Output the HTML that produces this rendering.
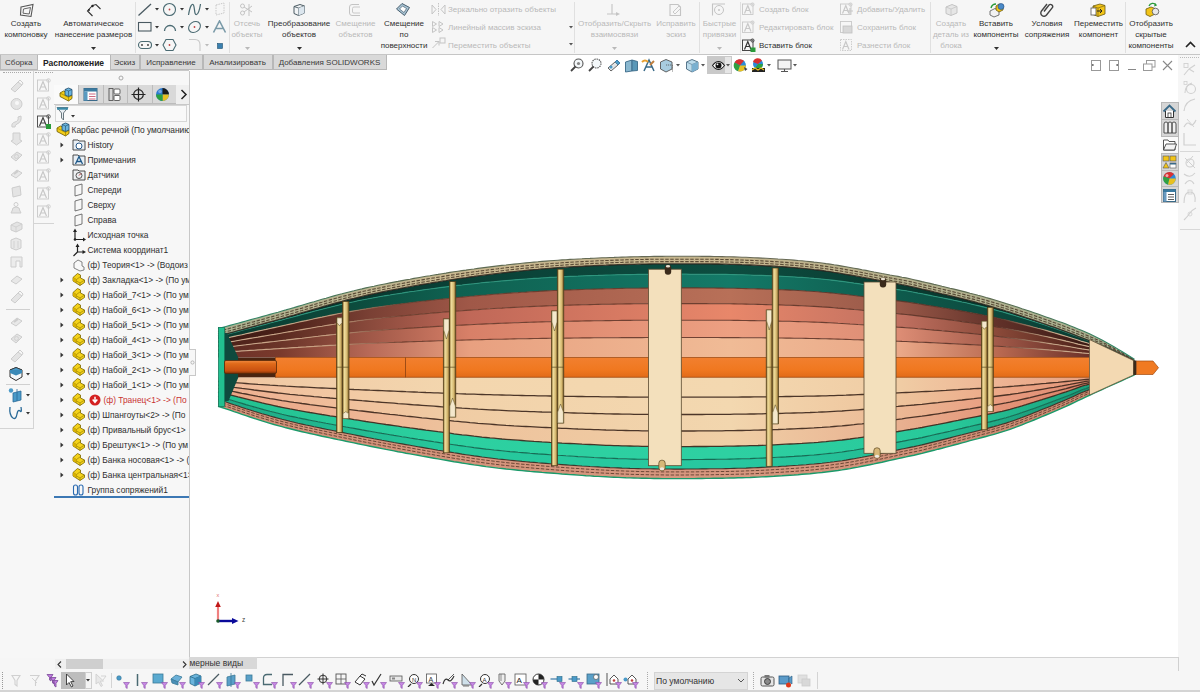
<!DOCTYPE html><html><head><meta charset="utf-8"><style>
html,body{margin:0;padding:0;width:1200px;height:692px;overflow:hidden;background:#fff;font-family:"Liberation Sans", sans-serif;}
.t{position:absolute;white-space:nowrap;line-height:12px;height:12px;}
.r{position:absolute;}
svg{position:absolute;}
</style></head><body>

<div class="r" style="left:0px;top:0px;width:1200px;height:55px;background:#f6f6f6;"></div>
<div class="r" style="left:0px;top:54px;width:1200px;height:1px;background:#c6c6c6;"></div>
<div class="r" style="left:135px;top:2px;width:1px;height:51px;background:#e0e0e0;"></div>
<div class="r" style="left:228.5px;top:2px;width:1px;height:51px;background:#e0e0e0;"></div>
<div class="r" style="left:574px;top:2px;width:1px;height:51px;background:#e0e0e0;"></div>
<div class="r" style="left:699px;top:2px;width:1px;height:51px;background:#e0e0e0;"></div>
<div class="r" style="left:739.5px;top:2px;width:1px;height:51px;background:#e0e0e0;"></div>
<div class="r" style="left:930px;top:2px;width:1px;height:51px;background:#e0e0e0;"></div>
<div class="r" style="left:1125px;top:2px;width:1px;height:51px;background:#e0e0e0;"></div>
<div class="t" style="left:-124px;top:17.5px;width:300px;text-align:center;font-size:8px;color:#303030;font-weight:normal">Создать</div>
<div class="t" style="left:-124px;top:28.5px;width:300px;text-align:center;font-size:8px;color:#303030;font-weight:normal">компоновку</div>
<div class="t" style="left:-56.5px;top:17.5px;width:300px;text-align:center;font-size:8px;color:#303030;font-weight:normal">Автоматическое</div>
<div class="t" style="left:-56.5px;top:28.5px;width:300px;text-align:center;font-size:8px;color:#303030;font-weight:normal">нанесение размеров</div>
<svg style="left:91.0px;top:46.5px" width="5" height="3"><path d="M0 0 L5 0 L2.5 3Z" fill="#303030"/></svg>
<div class="t" style="left:97px;top:17.5px;width:300px;text-align:center;font-size:8px;color:#b9b9b9;font-weight:normal">Отсечь</div>
<div class="t" style="left:97px;top:28.5px;width:300px;text-align:center;font-size:8px;color:#b9b9b9;font-weight:normal">объекты</div>
<svg style="left:244.5px;top:46.5px" width="5" height="3"><path d="M0 0 L5 0 L2.5 3Z" fill="#b9b9b9"/></svg>
<div class="t" style="left:149px;top:17.5px;width:300px;text-align:center;font-size:8px;color:#303030;font-weight:normal">Преобразование</div>
<div class="t" style="left:149px;top:28.5px;width:300px;text-align:center;font-size:8px;color:#303030;font-weight:normal">объектов</div>
<svg style="left:296.5px;top:46.5px" width="5" height="3"><path d="M0 0 L5 0 L2.5 3Z" fill="#303030"/></svg>
<div class="t" style="left:205.5px;top:17.5px;width:300px;text-align:center;font-size:8px;color:#b9b9b9;font-weight:normal">Смещение</div>
<div class="t" style="left:205.5px;top:28.5px;width:300px;text-align:center;font-size:8px;color:#b9b9b9;font-weight:normal">объектов</div>
<div class="t" style="left:254px;top:17.5px;width:300px;text-align:center;font-size:8px;color:#303030;font-weight:normal">Смещение</div>
<div class="t" style="left:254px;top:28.5px;width:300px;text-align:center;font-size:8px;color:#303030;font-weight:normal">по</div>
<div class="t" style="left:254px;top:39.5px;width:300px;text-align:center;font-size:8px;color:#303030;font-weight:normal">поверхности</div>
<div class="t" style="left:464.5px;top:17.5px;width:300px;text-align:center;font-size:8px;color:#b9b9b9;font-weight:normal">Отобразить/Скрыть</div>
<div class="t" style="left:464.5px;top:28.5px;width:300px;text-align:center;font-size:8px;color:#b9b9b9;font-weight:normal">взаимосвязи</div>
<svg style="left:612.0px;top:46.5px" width="5" height="3"><path d="M0 0 L5 0 L2.5 3Z" fill="#b9b9b9"/></svg>
<div class="t" style="left:526px;top:17.5px;width:300px;text-align:center;font-size:8px;color:#b9b9b9;font-weight:normal">Исправить</div>
<div class="t" style="left:526px;top:28.5px;width:300px;text-align:center;font-size:8px;color:#b9b9b9;font-weight:normal">эскиз</div>
<div class="t" style="left:569.5px;top:17.5px;width:300px;text-align:center;font-size:8px;color:#b9b9b9;font-weight:normal">Быстрые</div>
<div class="t" style="left:569.5px;top:28.5px;width:300px;text-align:center;font-size:8px;color:#b9b9b9;font-weight:normal">привязки</div>
<svg style="left:717.0px;top:46.5px" width="5" height="3"><path d="M0 0 L5 0 L2.5 3Z" fill="#b9b9b9"/></svg>
<div class="t" style="left:801px;top:17.5px;width:300px;text-align:center;font-size:8px;color:#b9b9b9;font-weight:normal">Создать</div>
<div class="t" style="left:801px;top:28.5px;width:300px;text-align:center;font-size:8px;color:#b9b9b9;font-weight:normal">деталь из</div>
<div class="t" style="left:801px;top:39.5px;width:300px;text-align:center;font-size:8px;color:#b9b9b9;font-weight:normal">блока</div>
<div class="t" style="left:846px;top:17.5px;width:300px;text-align:center;font-size:8px;color:#303030;font-weight:normal">Вставить</div>
<div class="t" style="left:846px;top:28.5px;width:300px;text-align:center;font-size:8px;color:#303030;font-weight:normal">компоненты</div>
<svg style="left:993.5px;top:46.5px" width="5" height="3"><path d="M0 0 L5 0 L2.5 3Z" fill="#303030"/></svg>
<div class="t" style="left:897px;top:17.5px;width:300px;text-align:center;font-size:8px;color:#303030;font-weight:normal">Условия</div>
<div class="t" style="left:897px;top:28.5px;width:300px;text-align:center;font-size:8px;color:#303030;font-weight:normal">сопряжения</div>
<div class="t" style="left:948.5px;top:17.5px;width:300px;text-align:center;font-size:8px;color:#303030;font-weight:normal">Переместить</div>
<div class="t" style="left:948.5px;top:28.5px;width:300px;text-align:center;font-size:8px;color:#303030;font-weight:normal">компонент</div>
<div class="t" style="left:1001px;top:17.5px;width:300px;text-align:center;font-size:8px;color:#303030;font-weight:normal">Отобразить</div>
<div class="t" style="left:1001px;top:28.5px;width:300px;text-align:center;font-size:8px;color:#303030;font-weight:normal">скрытые</div>
<div class="t" style="left:1001px;top:39.5px;width:300px;text-align:center;font-size:8px;color:#303030;font-weight:normal">компоненты</div>
<div class="t" style="left:448px;top:4.300000000000001px;font-size:8px;color:#b9b9b9;font-weight:normal">Зеркально отразить объекты</div>
<div class="t" style="left:448px;top:21.5px;font-size:8px;color:#b9b9b9;font-weight:normal">Линейный массив эскиза</div>
<div class="t" style="left:448px;top:40px;font-size:8px;color:#b9b9b9;font-weight:normal">Переместить объекты</div>
<div class="t" style="left:759px;top:4.300000000000001px;font-size:8px;color:#b9b9b9;font-weight:normal">Создать блок</div>
<div class="t" style="left:759px;top:21.5px;font-size:8px;color:#b9b9b9;font-weight:normal">Редактировать блок</div>
<div class="t" style="left:759px;top:40px;font-size:8px;color:#303030;font-weight:normal">Вставить блок</div>
<div class="t" style="left:857px;top:4.300000000000001px;font-size:8px;color:#b9b9b9;font-weight:normal">Добавить/Удалить</div>
<div class="t" style="left:857px;top:21.5px;font-size:8px;color:#b9b9b9;font-weight:normal">Сохранить блок</div>
<div class="t" style="left:857px;top:40px;font-size:8px;color:#b9b9b9;font-weight:normal">Разнести блок</div>
<svg style="left:19px;top:3px" width="16" height="15" viewBox="0 0 16 15"><path d="M2 4 L14 1.5 L12 13.5 L1.5 12 Z" fill="none" stroke="#555" stroke-width="1.1"/><path d="M4.5 6 L11.5 4.5 L10.2 11 L4 10.2 Z" fill="none" stroke="#555" stroke-width="0.9"/></svg>
<svg style="left:86px;top:3px" width="16" height="15" viewBox="0 0 16 15"><path d="M6.5 2.5 L1.5 8 L6.5 13" fill="none" stroke="#333" stroke-width="1.1"/><path d="M6.5 2.5 L10 1.5 L14.5 6" fill="none" stroke="#333" stroke-width="1.1"/><circle cx="6.5" cy="3" r="1.2" fill="#222"/><circle cx="3" cy="7" r="0.9" fill="#222"/></svg>
<svg style="left:137px;top:3px" width="16" height="14" viewBox="0 0 16 14"><path d="M1.5 12.5 L14 1" stroke="#4a5a62" stroke-width="1.3"/></svg>
<svg style="left:162px;top:2px" width="15" height="15" viewBox="0 0 15 15"><circle cx="7.5" cy="7.5" r="6" fill="none" stroke="#4a6a72" stroke-width="1.1"/><circle cx="7.5" cy="7.5" r="0.9" fill="#c04040"/></svg>
<svg style="left:187px;top:2px" width="15" height="15" viewBox="0 0 15 15"><path d="M1.5 13 C3 4 5 1 6.5 3 C8 6 7 13 9.5 12.5 C12 12 13 5 13.5 2" fill="none" stroke="#4a6a72" stroke-width="1.2"/></svg>
<svg style="left:214px;top:2px" width="12" height="14" viewBox="0 0 12 14"><path d="M2 3 L10 1 L10 11 L2 13 Z" fill="none" stroke="#c8c8c8" stroke-width="1" stroke-dasharray="1.5 1"/></svg>
<svg style="left:137px;top:21px" width="16" height="12" viewBox="0 0 16 12"><rect x="1.5" y="1.5" width="12.5" height="8.5" fill="none" stroke="#4a5a62" stroke-width="1.1"/></svg>
<svg style="left:163px;top:21px" width="14" height="12" viewBox="0 0 14 12"><path d="M1.5 10 A5.5 5.5 0 0 1 12.5 10" fill="none" stroke="#4a6a72" stroke-width="1.3"/></svg>
<svg style="left:187px;top:20px" width="15" height="14" viewBox="0 0 15 14"><ellipse cx="7.5" cy="7" rx="6.3" ry="5" transform="rotate(-35 7.5 7)" fill="none" stroke="#4a6a72" stroke-width="1.1"/><circle cx="7.5" cy="7" r="0.9" fill="#c04040"/></svg>
<svg style="left:212px;top:20px" width="15" height="14" viewBox="0 0 15 14"><path d="M1.5 12.5 L7.5 1 L13.5 12.5 M4.2 8.5 H10.8" fill="none" stroke="#7a9aa8" stroke-width="1.6"/></svg>
<svg style="left:137px;top:40px" width="16" height="10" viewBox="0 0 16 10"><rect x="1.5" y="1.5" width="13" height="7" rx="3.5" fill="none" stroke="#4a6a72" stroke-width="1.1"/><circle cx="5" cy="5" r="0.9" fill="#333"/><circle cx="11" cy="5" r="0.9" fill="#333"/></svg>
<svg style="left:162px;top:38px" width="15" height="14" viewBox="0 0 15 14"><path d="M4 1.5 H11 L14 7 L11 12.5 H4 L1 7 Z" fill="none" stroke="#4a6a72" stroke-width="1.1"/><circle cx="7.5" cy="7" r="0.9" fill="#c04040"/></svg>
<svg style="left:188px;top:38px" width="14" height="14" viewBox="0 0 14 14"><path d="M1 1.5 H7 Q12 1.5 12 7 V13" fill="none" stroke="#c8c8c8" stroke-width="1.1"/></svg>
<svg style="left:217px;top:42.5px" width="6" height="6" viewBox="0 0 6 6"><rect x="0.5" y="0.5" width="5" height="5" fill="#3a80b0" stroke="#1f5070" stroke-width="0.6"/></svg>
<svg style="left:155px;top:7.5px" width="4" height="3" viewBox="0 0 4 3"><path d="M0 0 H4 L2 2.5Z" fill="#333"/></svg>
<svg style="left:180px;top:7.5px" width="4" height="3" viewBox="0 0 4 3"><path d="M0 0 H4 L2 2.5Z" fill="#333"/></svg>
<svg style="left:205px;top:7.5px" width="4" height="3" viewBox="0 0 4 3"><path d="M0 0 H4 L2 2.5Z" fill="#333"/></svg>
<svg style="left:155px;top:25.5px" width="4" height="3" viewBox="0 0 4 3"><path d="M0 0 H4 L2 2.5Z" fill="#333"/></svg>
<svg style="left:180px;top:25.5px" width="4" height="3" viewBox="0 0 4 3"><path d="M0 0 H4 L2 2.5Z" fill="#333"/></svg>
<svg style="left:205px;top:25.5px" width="4" height="3" viewBox="0 0 4 3"><path d="M0 0 H4 L2 2.5Z" fill="#333"/></svg>
<svg style="left:155px;top:43.5px" width="4" height="3" viewBox="0 0 4 3"><path d="M0 0 H4 L2 2.5Z" fill="#333"/></svg>
<svg style="left:205px;top:43.5px" width="4" height="3" viewBox="0 0 4 3"><path d="M0 0 H4 L2 2.5Z" fill="#bbb"/></svg>
<svg style="left:239px;top:3px" width="16" height="14" viewBox="0 0 16 14"><circle cx="3.5" cy="3" r="2" fill="none" stroke="#c4c4c4" stroke-width="1"/><circle cx="3.5" cy="10" r="2" fill="none" stroke="#c4c4c4" stroke-width="1"/><path d="M5 4 L13 9 M5 9 L13 3 M10 1 V13" stroke="#c4c4c4" stroke-width="1"/></svg>
<svg style="left:292px;top:3px" width="14" height="14" viewBox="0 0 14 14"><path d="M2 3.5 L8 1.5 L12.5 3 L12.5 10 L6.5 12.5 L2 10.5 Z" fill="#f2f4f6" stroke="#4a5a62" stroke-width="1"/><path d="M2 3.5 L6.5 5 L12.5 3 M6.5 5 V12.5" fill="none" stroke="#4a5a62" stroke-width="0.9"/><path d="M6.5 5 L12.5 3 L12.5 10 L6.5 12.5Z" fill="#dce6ee"/></svg>
<svg style="left:348px;top:3px" width="14" height="14" viewBox="0 0 14 14"><path d="M11 1.5 H4 Q1.5 1.5 1.5 4 V10 Q1.5 12.5 4 12.5 H12" fill="none" stroke="#c4c4c4" stroke-width="1"/><path d="M12 4 H6 Q4.5 4 4.5 5.5 V9 Q4.5 10 6 10 H12" fill="none" stroke="#c4c4c4" stroke-width="0.9"/></svg>
<svg style="left:395px;top:2px" width="16" height="15" viewBox="0 0 16 15"><path d="M1.5 7 L7 1.5 L14.5 5.5 L9.5 13.5 Z" fill="#a8c4d4" stroke="#4a6070" stroke-width="1"/><path d="M4.5 7 L7.5 4 L11.5 6.5 L9 10.5 Z" fill="#ffffff" stroke="#4a6070" stroke-width="0.7"/></svg>
<svg style="left:431px;top:3px" width="15" height="13" viewBox="0 0 15 13"><path d="M1 2 L5 6.5 L1 11 Z M14 2 L10 6.5 L14 11 Z" fill="none" stroke="#c4c4c4" stroke-width="1"/><path d="M7.5 0 V13" stroke="#c4c4c4" stroke-width="1" stroke-dasharray="1.5 1"/></svg>
<svg style="left:431px;top:20px" width="14" height="14" viewBox="0 0 14 14"><path d="M1.5 1.5 L5.5 4 L1.5 6.5Z M8 1.5 L12 4 L8 6.5Z M1.5 7.5 L5.5 10 L1.5 12.5Z M8 7.5 L12 10 L8 12.5Z" fill="none" stroke="#c4c4c4" stroke-width="1"/></svg>
<svg style="left:431px;top:37px" width="15" height="13" viewBox="0 0 15 13"><path d="M1.5 11 L8 4.5 M4 4.5 H8 V8.5" fill="none" stroke="#c4c4c4" stroke-width="1"/><rect x="9" y="1" width="5" height="5" fill="none" stroke="#c4c4c4" stroke-width="1"/></svg>
<svg style="left:569px;top:25.5px" width="4" height="3" viewBox="0 0 4 3"><path d="M0 0 H4 L2 2.5Z" fill="#555"/></svg>
<svg style="left:569px;top:43.0px" width="4" height="3" viewBox="0 0 4 3"><path d="M0 0 H4 L2 2.5Z" fill="#555"/></svg>
<svg style="left:606px;top:3px" width="15" height="14" viewBox="0 0 15 14"><path d="M6 1 V11 H1 M6 11 H11" fill="none" stroke="#c4c4c4" stroke-width="1.1"/><path d="M10 9 L14 11 L10 13Z" fill="#c4c4c4"/></svg>
<svg style="left:668px;top:3px" width="15" height="14" viewBox="0 0 15 14"><path d="M2 1.5 H10 L12.5 4 V12.5 H2 Z" fill="none" stroke="#c4c4c4" stroke-width="1.1"/><path d="M5 9 L11 3 L13 5 L7 11 Z" fill="none" stroke="#c4c4c4" stroke-width="0.9"/></svg>
<svg style="left:711px;top:2px" width="15" height="15" viewBox="0 0 15 15"><path d="M1.5 13.5 V2 H14" fill="none" stroke="#c4c4c4" stroke-width="1.1"/><circle cx="8" cy="8" r="4.5" fill="none" stroke="#c4c4c4" stroke-width="1"/><circle cx="8" cy="8" r="1" fill="#c4c4c4"/></svg>
<svg style="left:741px;top:2px" width="15" height="14" viewBox="0 0 15 14"><rect x="1.5" y="2" width="10.5" height="10.5" fill="none" stroke="#c8c8c8" stroke-width="0.9"/><path d="M3.5 11.5 L6.8 3.5 L10 11.5 M4.8 8.5 H8.8" fill="none" stroke="#c8c8c8" stroke-width="1.2"/><circle cx="11.5" cy="2.5" r="1.6" fill="none" stroke="#c8c8c8" stroke-width="0.8"/></svg>
<svg style="left:741px;top:20px" width="15" height="14" viewBox="0 0 15 14"><rect x="1.5" y="2" width="10.5" height="10.5" fill="none" stroke="#c8c8c8" stroke-width="0.9"/><path d="M3.5 11.5 L6.8 3.5 L10 11.5 M4.8 8.5 H8.8" fill="none" stroke="#c8c8c8" stroke-width="1.2"/><circle cx="11.5" cy="2.5" r="1.6" fill="none" stroke="#c8c8c8" stroke-width="0.8"/></svg>
<svg style="left:741px;top:38px" width="15" height="14" viewBox="0 0 15 14"><rect x="1.5" y="2" width="10.5" height="10.5" fill="none" stroke="#333" stroke-width="0.9"/><path d="M3.5 11.5 L6.8 3.5 L10 11.5 M4.8 8.5 H8.8" fill="none" stroke="#333" stroke-width="1.2"/><circle cx="11.5" cy="2.5" r="1.6" fill="none" stroke="#333" stroke-width="0.8"/><rect x="9.5" y="9.5" width="5" height="4.5" fill="#2a9a3a"/></svg>
<svg style="left:839px;top:2px" width="15" height="14" viewBox="0 0 15 14"><rect x="1.5" y="2" width="10.5" height="10.5" fill="none" stroke="#c8c8c8" stroke-width="0.9"/><path d="M3.5 11.5 L6.8 3.5 L10 11.5 M4.8 8.5 H8.8" fill="none" stroke="#c8c8c8" stroke-width="1.2"/><circle cx="11.5" cy="2.5" r="1.6" fill="none" stroke="#c8c8c8" stroke-width="0.8"/><path d="M11 6 V12 M8 9 H14" stroke="#c8c8c8" stroke-width="1.2"/></svg>
<svg style="left:839px;top:20px" width="15" height="14" viewBox="0 0 15 14"><rect x="1.5" y="1.5" width="11" height="11" fill="none" stroke="#c8c8c8" stroke-width="0.9"/><rect x="4" y="6" width="9" height="7" fill="#d8d8d8" stroke="#c0c0c0" stroke-width="0.8"/></svg>
<svg style="left:839px;top:38px" width="15" height="14" viewBox="0 0 15 14"><rect x="1.5" y="1.5" width="11" height="11" fill="none" stroke="#c8c8c8" stroke-width="0.9" stroke-dasharray="1.5 1"/><path d="M3.5 11.5 L6.8 3.5 L10 11.5 M4.8 8.5 H8.8" fill="none" stroke="#c8c8c8" stroke-width="1.2"/></svg>
<svg style="left:944px;top:3px" width="15" height="14" viewBox="0 0 15 14"><path d="M2 4 L8 1.5 L13 3.5 V10 L7 12.5 L2 10.5 Z" fill="#e6e6e6" stroke="#c4c4c4" stroke-width="1"/><path d="M2 4 L7 6 L13 3.5 M7 6 V12.5" fill="none" stroke="#c4c4c4" stroke-width="0.8"/></svg>
<svg style="left:989px;top:2px" width="17" height="16" viewBox="0 0 17 16"><path d="M1 9 L6 6.5 L10 8 V13 L5 15 L1 13 Z" fill="#f2f2f2" stroke="#555" stroke-width="0.8"/><path d="M7 4 L10 2 L14 3 V8 L10 10 L7 8 Z" fill="#f2c418" stroke="#6b5a10" stroke-width="0.8"/><circle cx="12" cy="4.5" r="3" fill="#4a8ac8" stroke="#1f4a80" stroke-width="0.6"/><path d="M2 6 Q3 2 7 2" fill="none" stroke="#2a9a3a" stroke-width="1.4"/></svg>
<svg style="left:1040px;top:2px" width="15" height="15" viewBox="0 0 15 15"><path d="M4 9.5 L9 3 A2.2 2.2 0 0 1 12.5 5.5 L6.5 13 A3.2 3.2 0 0 1 1.5 9 L7 2" fill="none" stroke="#444" stroke-width="1.4"/></svg>
<svg style="left:1090px;top:2px" width="17" height="16" viewBox="0 0 17 16"><path d="M3 4 L10 2 L15 3.5 V12 L8 14.5 L3 12.5 Z" fill="#f2c418" stroke="#6b5a10" stroke-width="0.8"/><path d="M3 4 L8 6 L15 3.5 M8 6 V14.5" fill="none" stroke="#6b5a10" stroke-width="0.6"/><rect x="1" y="6" width="5" height="7" fill="#fff" stroke="#555" stroke-width="0.8"/><path d="M7 9 H12 M10 7 L12 9 L10 11" stroke="#222" stroke-width="1" fill="none"/></svg>
<svg style="left:1144px;top:2px" width="16" height="16" viewBox="0 0 16 16"><path d="M2 7 L7 5 L11 6.5 V12 L6 14.5 L2 12.5 Z" fill="#f2c418" stroke="#6b5a10" stroke-width="0.8"/><circle cx="11.5" cy="9.5" r="3.3" fill="#e8e8e8" stroke="#555" stroke-width="0.8"/><path d="M5 4 A4 4 0 0 1 12 3" fill="none" stroke="#2a9a3a" stroke-width="1.3"/><path d="M11 1 L13 3.5 L10 4.5Z" fill="#2a9a3a"/></svg>
<svg style="left:1185px;top:41px" width="11" height="7" viewBox="0 0 11 7"><path d="M1 6 L5.5 1.5 L10 6" fill="none" stroke="#222" stroke-width="1.6"/></svg>
<div class="r" style="left:0px;top:55px;width:37.5px;height:15px;background:#d9d9d9;"></div>
<div class="r" style="left:0px;top:55px;width:1px;height:15px;background:#b8b8b8;"></div>
<div class="r" style="left:36.5px;top:55px;width:1px;height:15px;background:#b8b8b8;"></div>
<div class="r" style="left:0px;top:69px;width:37.5px;height:1px;background:#b8b8b8;"></div>
<div class="t" style="left:-131.25px;top:57px;width:300px;text-align:center;font-size:8px;color:#3a3a3a;font-weight:normal">Сборка</div>
<div class="r" style="left:37.5px;top:55px;width:72.0px;height:16px;background:#ffffff;"></div>
<div class="t" style="left:-76.5px;top:57px;width:300px;text-align:center;font-size:8.5px;color:#222;font-weight:bold">Расположение</div>
<div class="r" style="left:109.5px;top:55px;width:30.0px;height:15px;background:#d9d9d9;"></div>
<div class="r" style="left:109.5px;top:55px;width:1px;height:15px;background:#b8b8b8;"></div>
<div class="r" style="left:138.5px;top:55px;width:1px;height:15px;background:#b8b8b8;"></div>
<div class="r" style="left:109.5px;top:69px;width:30.0px;height:1px;background:#b8b8b8;"></div>
<div class="t" style="left:-25.5px;top:57px;width:300px;text-align:center;font-size:8px;color:#3a3a3a;font-weight:normal">Эскиз</div>
<div class="r" style="left:139.5px;top:55px;width:63.0px;height:15px;background:#d9d9d9;"></div>
<div class="r" style="left:139.5px;top:55px;width:1px;height:15px;background:#b8b8b8;"></div>
<div class="r" style="left:201.5px;top:55px;width:1px;height:15px;background:#b8b8b8;"></div>
<div class="r" style="left:139.5px;top:69px;width:63.0px;height:1px;background:#b8b8b8;"></div>
<div class="t" style="left:21.0px;top:57px;width:300px;text-align:center;font-size:8px;color:#3a3a3a;font-weight:normal">Исправление</div>
<div class="r" style="left:202.5px;top:55px;width:70.0px;height:15px;background:#d9d9d9;"></div>
<div class="r" style="left:202.5px;top:55px;width:1px;height:15px;background:#b8b8b8;"></div>
<div class="r" style="left:271.5px;top:55px;width:1px;height:15px;background:#b8b8b8;"></div>
<div class="r" style="left:202.5px;top:69px;width:70.0px;height:1px;background:#b8b8b8;"></div>
<div class="t" style="left:87.5px;top:57px;width:300px;text-align:center;font-size:8px;color:#3a3a3a;font-weight:normal">Анализировать</div>
<div class="r" style="left:272.5px;top:55px;width:114.0px;height:15px;background:#d9d9d9;"></div>
<div class="r" style="left:272.5px;top:55px;width:1px;height:15px;background:#b8b8b8;"></div>
<div class="r" style="left:385.5px;top:55px;width:1px;height:15px;background:#b8b8b8;"></div>
<div class="r" style="left:272.5px;top:69px;width:114.0px;height:1px;background:#b8b8b8;"></div>
<div class="t" style="left:179.5px;top:57px;width:300px;text-align:center;font-size:8px;color:#3a3a3a;font-weight:normal">Добавления SOLIDWORKS</div>
<div class="r" style="left:0px;top:71px;width:189px;height:588px;background:#f7f7f7;"></div>
<div class="r" style="left:0px;top:70px;width:189px;height:1px;background:#c8c8c8;"></div>
<div class="r" style="left:33px;top:71px;width:1px;height:357px;background:#d4d4d4;"></div>
<div class="r" style="left:0px;top:428px;width:34px;height:1px;background:#d4d4d4;"></div>
<div class="r" style="left:34px;top:223px;width:20px;height:1px;background:#d4d4d4;"></div>
<div class="r" style="left:189px;top:71px;width:1px;height:587px;background:#c8c8c8;"></div>
<div class="r" style="left:190px;top:657px;width:989px;height:1.5px;background:#d2d2d2;"></div>
<div class="r" style="left:1178px;top:55px;width:22px;height:603px;background:#f6f6f6;"></div>
<div class="r" style="left:0px;top:658px;width:1200px;height:34px;background:#f6f6f6;"></div>
<div class="r" style="left:1178px;top:657px;width:1px;height:14px;background:#d0d0d0;"></div>
<div class="r" style="left:0px;top:690px;width:1200px;height:2px;background:#d4d4d4;"></div>
<div class="r" style="left:54px;top:85px;width:135px;height:19px;background:#efefef;"></div>
<div class="r" style="left:54px;top:85px;width:24px;height:19px;background:#fafafa;"></div>
<div class="r" style="left:78px;top:85px;width:24.5px;height:19px;background:#d9d9d9;box-sizing:border-box;border-left:1px solid #bcbcbc;border-bottom:1px solid #bcbcbc;"></div>
<div class="r" style="left:102.5px;top:85px;width:24.0px;height:19px;background:#d9d9d9;box-sizing:border-box;border-left:1px solid #bcbcbc;border-bottom:1px solid #bcbcbc;"></div>
<div class="r" style="left:126.5px;top:85px;width:25.0px;height:19px;background:#d9d9d9;box-sizing:border-box;border-left:1px solid #bcbcbc;border-bottom:1px solid #bcbcbc;"></div>
<div class="r" style="left:151.5px;top:85px;width:24.0px;height:19px;background:#d9d9d9;box-sizing:border-box;border-left:1px solid #bcbcbc;border-bottom:1px solid #bcbcbc;"></div>
<div class="r" style="left:54px;top:103.5px;width:135px;height:1px;background:#c8c8c8;"></div>
<div class="r" style="left:55.25px;top:104.5px;width:132px;height:17px;background:#f9f9f9;box-sizing:border-box;border:1px solid #d6d6d6;"></div>
<svg style="left:59px;top:87px" width="15" height="15" viewBox="0 0 15 15"><path d="M1 6 L4.5 4 L13 8 L13 11.5 L9.5 14 L1 9.5 Z" fill="#f2cc18" stroke="#6a5800" stroke-width="0.8" stroke-linejoin="round"/><path d="M1 6 L9.5 10.5 L13 8 M9.5 10.5 V14" fill="none" stroke="#8a7400" stroke-width="0.6"/><path d="M6 2.5 L9.5 1 L13 2.5 V8 L9.5 9.5 L6 8 Z" fill="#6ab4dc" stroke="#1f4a6a" stroke-width="0.8"/><path d="M6 2.5 L9.5 4 L13 2.5 M9.5 4 V9.5" fill="none" stroke="#1f4a6a" stroke-width="0.6"/></svg>
<svg style="left:83px;top:87px" width="15" height="15" viewBox="0 0 15 15"><rect x="1" y="1.5" width="13" height="12" fill="#fff" stroke="#3a6a8a" stroke-width="1"/><rect x="1" y="1.5" width="13" height="3" fill="#3a7aa0"/><rect x="1" y="4.5" width="3.5" height="9" fill="#5a9ac0"/><path d="M6 7 H12.5 M6 9.5 H12.5 M6 12 H12.5" stroke="#c04060" stroke-width="0.8"/></svg>
<svg style="left:107px;top:87px" width="15" height="15" viewBox="0 0 15 15"><rect x="2" y="1.5" width="4" height="12" fill="#d8d8d8" stroke="#555" stroke-width="0.9"/><rect x="7" y="2" width="6" height="5" rx="1" fill="#fff" stroke="#555" stroke-width="0.9"/><rect x="7" y="8.5" width="6" height="5" rx="1" fill="#fff" stroke="#555" stroke-width="0.9"/></svg>
<svg style="left:131px;top:87px" width="15" height="15" viewBox="0 0 15 15"><circle cx="7.5" cy="7.5" r="4.8" fill="none" stroke="#222" stroke-width="1.2"/><path d="M7.5 0.5 V14.5 M0.5 7.5 H14.5" stroke="#222" stroke-width="1.2"/></svg>
<svg style="left:155px;top:87px" width="15" height="15" viewBox="0 0 15 15"><circle cx="7.5" cy="7.5" r="6.5" fill="#2a7ad0"/><path d="M7.5 7.5 L7.5 1 A6.5 6.5 0 0 1 14 7.5Z" fill="#1a1a1a"/><path d="M7.5 7.5 L14 7.5 A6.5 6.5 0 0 1 7.5 14Z" fill="#e8c020"/><path d="M7.5 7.5 L7.5 14 A6.5 6.5 0 0 1 1 7.5Z" fill="#2aa040"/><circle cx="5" cy="4.5" r="1.8" fill="#fff" opacity="0.35"/></svg>
<svg style="left:180px;top:89px" width="8" height="11" viewBox="0 0 8 11"><path d="M1.5 1 L6 5.5 L1.5 10" fill="none" stroke="#222" stroke-width="1.5"/></svg>
<svg style="left:56px;top:106px" width="20" height="15" viewBox="0 0 20 15"><path d="M1 1.5 H12 L7.5 7 V14 L5.5 12 V7 Z" fill="#e8eef2" stroke="#5a6a72" stroke-width="0.9"/><rect x="1" y="1.5" width="11" height="2.2" fill="#3a8aa8"/><path d="M15 9 H19 L17 11.5Z" fill="#333"/></svg>
<svg style="left:118px;top:75px" width="6" height="6" viewBox="0 0 6 6"><circle cx="3" cy="3" r="2" fill="none" stroke="#aaa" stroke-width="1"/></svg>
<div class="r" style="left:3px;top:72px;width:28px;height:1px;border-top:1px dotted #aaa"></div>
<div class="r" style="left:35px;top:72px;width:18px;height:1px;border-top:1px dotted #aaa"></div>
<svg style="left:9px;top:78.5px" width="15" height="15" viewBox="0 0 15 15"><path d="M2 10 L9 3 L13 6 L6 13 Z" fill="#e4e4e4" stroke="#cdcdcd" stroke-width="1"/><path d="M9 3 L11 1 L14 4 L13 6" fill="none" stroke="#cdcdcd" stroke-width="1"/></svg>
<svg style="left:9px;top:96.0px" width="15" height="15" viewBox="0 0 15 15"><circle cx="7.5" cy="8" r="5.5" fill="#e4e4e4" stroke="#cdcdcd" stroke-width="1"/><circle cx="8" cy="7" r="2" fill="#f8f8f8"/></svg>
<svg style="left:9px;top:113.5px" width="15" height="15" viewBox="0 0 15 15"><path d="M3 13 Q2 9 6 8 Q10 7 9 3 L12 2 Q13 8 8 10 Q6 11 6 13 Z" fill="#e4e4e4" stroke="#cdcdcd" stroke-width="1"/></svg>
<svg style="left:9px;top:131.0px" width="15" height="15" viewBox="0 0 15 15"><path d="M4 2 H11 V9 L13 10 L7.5 14 L2 10 L4 9 Z" fill="#e4e4e4" stroke="#cdcdcd" stroke-width="1"/></svg>
<svg style="left:9px;top:148.5px" width="15" height="15" viewBox="0 0 15 15"><path d="M2 8 L8 3 L13 6 L7 12 Z" fill="#e4e4e4" stroke="#cdcdcd" stroke-width="1"/><circle cx="7.5" cy="7.5" r="2" fill="none" stroke="#cdcdcd" stroke-width="0.8"/></svg>
<svg style="left:9px;top:166.0px" width="15" height="15" viewBox="0 0 15 15"><path d="M2 9 L8 4 L13 7 L7 12 Z" fill="#e8e8e8" stroke="#cdcdcd" stroke-width="1"/><path d="M5 8 L9 5" stroke="#cdcdcd" stroke-width="2"/></svg>
<svg style="left:9px;top:183.5px" width="15" height="15" viewBox="0 0 15 15"><path d="M3 4 L11 2 L12 11 L4 13 Z" fill="#e4e4e4" stroke="#cdcdcd" stroke-width="1"/></svg>
<svg style="left:9px;top:201.0px" width="15" height="15" viewBox="0 0 15 15"><path d="M3 10 Q3 6 7 6 Q11 6 11 10 L12 12 H2 Z" fill="#e4e4e4" stroke="#cdcdcd" stroke-width="1"/><circle cx="7" cy="3.5" r="2" fill="none" stroke="#cdcdcd" stroke-width="1"/></svg>
<svg style="left:9px;top:218.5px" width="15" height="15" viewBox="0 0 15 15"><path d="M2 6 L8 3 L13 5 V10 L7 13 L2 11 Z" fill="#e4e4e4" stroke="#cdcdcd" stroke-width="1"/><path d="M2 6 L7 8 L13 5 M7 8 V13" fill="none" stroke="#cdcdcd" stroke-width="0.8"/></svg>
<svg style="left:9px;top:236.0px" width="15" height="15" viewBox="0 0 15 15"><path d="M2 4 L7 2 L12 4 L12 12 L7 14 L2 12 Z" fill="#e8e8e8" stroke="#cdcdcd" stroke-width="1"/><path d="M5 5 V12 M9 5 V12" stroke="#cdcdcd" stroke-width="0.8"/></svg>
<svg style="left:9px;top:253.5px" width="15" height="15" viewBox="0 0 15 15"><path d="M2 3 V13 H7 V7 H11 V13 H13 V3 Z" fill="#ececec" stroke="#cdcdcd" stroke-width="1"/></svg>
<svg style="left:9px;top:271.5px" width="15" height="15" viewBox="0 0 15 15"><path d="M2 9 L8 4 L13 7 L7 12 Z" fill="#e8e8e8" stroke="#cdcdcd" stroke-width="1"/></svg>
<svg style="left:9px;top:289.5px" width="15" height="15" viewBox="0 0 15 15"><path d="M2 10 L9 3 L13 6 L6 13 Z" fill="#e4e4e4" stroke="#cdcdcd" stroke-width="1"/><path d="M9 3 L11 1 L14 4 L13 6" fill="none" stroke="#cdcdcd" stroke-width="1"/></svg>
<div class="r" style="left:6px;top:309px;width:24px;height:1px;background:#d0d0d0;"></div>
<svg style="left:9px;top:313.5px" width="15" height="15" viewBox="0 0 15 15"><path d="M2 9 L8 4 L13 7 L7 12 Z" fill="#e8e8e8" stroke="#cdcdcd" stroke-width="1"/><path d="M5 8 L9 5" stroke="#cdcdcd" stroke-width="2"/></svg>
<svg style="left:9px;top:331.0px" width="15" height="15" viewBox="0 0 15 15"><path d="M2 8 L8 3 L13 6 L7 12 Z" fill="#e4e4e4" stroke="#cdcdcd" stroke-width="1"/><circle cx="7.5" cy="7.5" r="2" fill="none" stroke="#cdcdcd" stroke-width="0.8"/></svg>
<svg style="left:9px;top:348.5px" width="15" height="15" viewBox="0 0 15 15"><path d="M2 10 L9 3 L13 6 L6 13 Z" fill="#e4e4e4" stroke="#cdcdcd" stroke-width="1"/><path d="M9 3 L11 1 L14 4 L13 6" fill="none" stroke="#cdcdcd" stroke-width="1"/></svg>
<svg style="left:8px;top:366px" width="16" height="16" viewBox="0 0 16 16"><path d="M2 4 L8 1.5 L14 4 V11 L8 14.5 L2 11 Z" fill="#f4f8fa" stroke="#333" stroke-width="1"/><path d="M2 4 L8 6.5 L14 4 L8 1.5Z" fill="#4a9ac8" stroke="#333" stroke-width="0.8"/><path d="M2 4 V7 L8 9.5 L14 7 V4" fill="#3a8ab8"/></svg>
<svg style="left:26px;top:372.5px" width="4" height="3" viewBox="0 0 4 3"><path d="M0 0 H4 L2 2.5Z" fill="#333"/></svg>
<div class="r" style="left:6px;top:384px;width:24px;height:1px;background:#d0d0d0;"></div>
<svg style="left:8px;top:387px" width="16" height="16" viewBox="0 0 16 16"><circle cx="3" cy="3.5" r="2.2" fill="#4a9ac8"/><path d="M5 6 L13 4 V13 L5 15 Z" fill="#4a9ac8" stroke="#2a6a98" stroke-width="0.8"/><path d="M9 2 V14" stroke="#2a6a98" stroke-width="0.8"/></svg>
<svg style="left:26px;top:393.5px" width="4" height="3" viewBox="0 0 4 3"><path d="M0 0 H4 L2 2.5Z" fill="#333"/></svg>
<svg style="left:8px;top:405px" width="16" height="16" viewBox="0 0 16 16"><path d="M2 2 Q1 10 5 13 Q8 15 9 9 Q10 4 12 6 Q14 8 13 2" fill="none" stroke="#2a6a98" stroke-width="1.3"/></svg>
<svg style="left:26px;top:411.5px" width="4" height="3" viewBox="0 0 4 3"><path d="M0 0 H4 L2 2.5Z" fill="#333"/></svg>
<svg style="left:36px;top:77.5px" width="16" height="16" viewBox="0 0 16 16"><rect x="1.5" y="2" width="11" height="11" fill="none" stroke="#c8c8c8" stroke-width="0.9"/><path d="M3.5 12 L7 3.5 L10.5 12 M4.8 9 H9.2" fill="none" stroke="#c8c8c8" stroke-width="1.2"/><circle cx="12.5" cy="2.5" r="1.8" fill="none" stroke="#c8c8c8" stroke-width="0.8"/></svg>
<svg style="left:36px;top:95.5px" width="16" height="16" viewBox="0 0 16 16"><rect x="1.5" y="2" width="11" height="11" fill="none" stroke="#c8c8c8" stroke-width="0.9"/><path d="M3.5 12 L7 3.5 L10.5 12 M4.8 9 H9.2" fill="none" stroke="#c8c8c8" stroke-width="1.2"/><circle cx="12.5" cy="2.5" r="1.8" fill="none" stroke="#c8c8c8" stroke-width="0.8"/></svg>
<svg style="left:36px;top:113.5px" width="16" height="16" viewBox="0 0 16 16"><rect x="1.5" y="2" width="11" height="11" fill="#fafafa" stroke="#444" stroke-width="0.9"/><path d="M3.5 12 L7 3.5 L10.5 12 M4.8 9 H9.2" fill="none" stroke="#444" stroke-width="1.2"/><circle cx="12.5" cy="2.5" r="1.8" fill="none" stroke="#444" stroke-width="0.8"/><rect x="10" y="10" width="5" height="5" fill="#2a9a3a"/></svg>
<svg style="left:36px;top:132.0px" width="16" height="16" viewBox="0 0 16 16"><rect x="1.5" y="2" width="11" height="11" fill="none" stroke="#c8c8c8" stroke-width="0.9"/><path d="M3.5 12 L7 3.5 L10.5 12 M4.8 9 H9.2" fill="none" stroke="#c8c8c8" stroke-width="1.2"/><circle cx="12.5" cy="2.5" r="1.8" fill="none" stroke="#c8c8c8" stroke-width="0.8"/></svg>
<svg style="left:36px;top:150.0px" width="16" height="16" viewBox="0 0 16 16"><rect x="1.5" y="2" width="11" height="11" fill="none" stroke="#c8c8c8" stroke-width="0.9"/><path d="M3.5 12 L7 3.5 L10.5 12 M4.8 9 H9.2" fill="none" stroke="#c8c8c8" stroke-width="1.2"/><circle cx="12.5" cy="2.5" r="1.8" fill="none" stroke="#c8c8c8" stroke-width="0.8"/></svg>
<svg style="left:36px;top:168.0px" width="16" height="16" viewBox="0 0 16 16"><rect x="1.5" y="2" width="11" height="11" fill="none" stroke="#c8c8c8" stroke-width="0.9"/><path d="M3.5 12 L7 3.5 L10.5 12 M4.8 9 H9.2" fill="none" stroke="#c8c8c8" stroke-width="1.2"/><circle cx="12.5" cy="2.5" r="1.8" fill="none" stroke="#c8c8c8" stroke-width="0.8"/></svg>
<svg style="left:36px;top:186.0px" width="16" height="16" viewBox="0 0 16 16"><rect x="1.5" y="2" width="11" height="11" fill="none" stroke="#c8c8c8" stroke-width="0.9"/><path d="M3.5 12 L7 3.5 L10.5 12 M4.8 9 H9.2" fill="none" stroke="#c8c8c8" stroke-width="1.2"/><circle cx="12.5" cy="2.5" r="1.8" fill="none" stroke="#c8c8c8" stroke-width="0.8"/></svg>
<svg style="left:36px;top:204.0px" width="16" height="16" viewBox="0 0 16 16"><rect x="1.5" y="2" width="11" height="11" fill="none" stroke="#c8c8c8" stroke-width="0.9"/><path d="M3.5 12 L7 3.5 L10.5 12 M4.8 9 H9.2" fill="none" stroke="#c8c8c8" stroke-width="1.2"/><circle cx="12.5" cy="2.5" r="1.8" fill="none" stroke="#c8c8c8" stroke-width="0.8"/></svg>
<div style="position:absolute;left:0;top:0;width:189px;height:657px;overflow:hidden">
<svg style="left:56px;top:122.0px" width="15" height="15" viewBox="0 0 15 15"><path d="M1 6 L4.5 4 L13 8 L13 11.5 L9.5 14 L1 9.5 Z" fill="#f2cc18" stroke="#6a5800" stroke-width="0.8" stroke-linejoin="round"/><path d="M1 6 L9.5 10.5 L13 8 M9.5 10.5 V14" fill="none" stroke="#8a7400" stroke-width="0.6"/><path d="M6 2.5 L9.5 1 L13 2.5 V8 L9.5 9.5 L6 8 Z" fill="#6ab4dc" stroke="#1f4a6a" stroke-width="0.8"/><path d="M6 2.5 L9.5 4 L13 2.5 M9.5 4 V9.5" fill="none" stroke="#1f4a6a" stroke-width="0.6"/></svg>
<div class="t" style="left:71.5px;top:123.5px;font-size:8.4px;color:#2e2e2e;font-weight:normal">Карбас речной (По умолчанию</div>
<svg style="left:59.5px;top:141.5px" width="4" height="6"><path d="M0.5 0.5 L3.5 3 L0.5 5.5Z" fill="#333"/></svg>
<svg style="left:72px;top:138.0px" width="14" height="13" viewBox="0 0 14 13"><path d="M1 2 H6 L7 3 H13 V12 H1 Z" fill="#e8eef4" stroke="#3b3b3b" stroke-width="0.9"/><circle cx="7" cy="8" r="3" fill="#fff" stroke="#2a5a8a" stroke-width="1"/></svg>
<div class="t" style="left:87.5px;top:138.5px;font-size:8.4px;color:#2e2e2e;font-weight:normal">History</div>
<svg style="left:59.5px;top:156.5px" width="4" height="6"><path d="M0.5 0.5 L3.5 3 L0.5 5.5Z" fill="#333"/></svg>
<svg style="left:72px;top:153.0px" width="14" height="13" viewBox="0 0 14 13"><path d="M1 2 H6 L7 3 H13 V12 H1 Z" fill="#e8eef4" stroke="#3b3b3b" stroke-width="0.9"/><path d="M3.5 11 L7 3.5 L10.5 11 M5 8.5 H9" stroke="#1f5a8a" stroke-width="1.3" fill="none"/></svg>
<div class="t" style="left:87.5px;top:153.5px;font-size:8.4px;color:#2e2e2e;font-weight:normal">Примечания</div>
<svg style="left:72px;top:168.0px" width="14" height="13" viewBox="0 0 14 13"><path d="M1 2 H6 L7 3 H13 V12 H1 Z" fill="#eef0f2" stroke="#3b3b3b" stroke-width="0.9"/><circle cx="7" cy="7.5" r="3" fill="none" stroke="#555" stroke-width="1"/><path d="M7 7.5 L9 5.5" stroke="#c03030" stroke-width="1"/></svg>
<div class="t" style="left:87.5px;top:168.5px;font-size:8.4px;color:#2e2e2e;font-weight:normal">Датчики</div>
<svg style="left:72px;top:182.5px" width="14" height="14" viewBox="0 0 14 14"><path d="M3 3 L10 1 L10 11 L3 13 Z" fill="none" stroke="#555" stroke-width="0.8"/></svg>
<div class="t" style="left:87.5px;top:183.5px;font-size:8.4px;color:#2e2e2e;font-weight:normal">Спереди</div>
<svg style="left:72px;top:197.5px" width="14" height="14" viewBox="0 0 14 14"><path d="M3 3 L10 1 L10 11 L3 13 Z" fill="none" stroke="#555" stroke-width="0.8"/></svg>
<div class="t" style="left:87.5px;top:198.5px;font-size:8.4px;color:#2e2e2e;font-weight:normal">Сверху</div>
<svg style="left:72px;top:212.5px" width="14" height="14" viewBox="0 0 14 14"><path d="M3 3 L10 1 L10 11 L3 13 Z" fill="none" stroke="#555" stroke-width="0.8"/></svg>
<div class="t" style="left:87.5px;top:213.5px;font-size:8.4px;color:#2e2e2e;font-weight:normal">Справа</div>
<svg style="left:72px;top:227.5px" width="14" height="14" viewBox="0 0 14 14"><path d="M3 3 V11.5 H12" fill="none" stroke="#222" stroke-width="1.2"/><path d="M1 4 L3 0.5 L5 4Z M11 9.5 L14 11.5 L11 13.5Z" fill="#222"/><circle cx="3" cy="11.5" r="1.3" fill="#222"/></svg>
<div class="t" style="left:87.5px;top:228.5px;font-size:8.4px;color:#2e2e2e;font-weight:normal">Исходная точка</div>
<svg style="left:72px;top:242.5px" width="14" height="14" viewBox="0 0 14 14"><path d="M5.5 3 V9 H11.5 M5.5 9 L1.5 13" fill="none" stroke="#222" stroke-width="1.2"/><path d="M3.5 4 L5.5 0.5 L7.5 4Z M10.5 7 L14 9 L10.5 11Z" fill="#222"/></svg>
<div class="t" style="left:87.5px;top:243.5px;font-size:8.4px;color:#2e2e2e;font-weight:normal">Система координат1</div>
<svg style="left:72px;top:257.5px" width="14" height="14" viewBox="0 0 14 14"><path d="M2 5 L6 2 L10 4 L10 8 L12 9 L12 12 L8 13 L2 10 Z" fill="#f8f8f8" stroke="#666" stroke-width="0.8"/></svg>
<div class="t" style="left:87.5px;top:258.5px;font-size:8.4px;color:#2e2e2e;font-weight:normal">(ф) Теория&lt;1&gt; -&gt; (Водоиз</div>
<svg style="left:59.5px;top:276.5px" width="4" height="6"><path d="M0.5 0.5 L3.5 3 L0.5 5.5Z" fill="#333"/></svg>
<svg style="left:71.5px;top:272.0px" width="14" height="14" viewBox="0 0 14 14"><path d="M1 5.5 L5.5 1.5 L8.5 3 L8.5 6 L12.5 8 L12.5 10.5 L8 13.5 L1 9 Z" fill="#f4d21a" stroke="#7a6400" stroke-width="0.8" stroke-linejoin="round"/><path d="M1 5.5 L4.5 7.5 L8.5 4.5 M4.5 7.5 V10.5 M4.5 9 L8 11 L12.5 8 M8 11 V13.5" fill="none" stroke="#8a7400" stroke-width="0.6"/><path d="M1 5.5 L4.5 7.5 V10.8 L1 9Z" fill="#d8b000"/></svg>
<div class="t" style="left:87.5px;top:273.5px;font-size:8.4px;color:#2e2e2e;font-weight:normal">(ф) Закладка&lt;1&gt; -&gt; (По ум</div>
<svg style="left:59.5px;top:291.5px" width="4" height="6"><path d="M0.5 0.5 L3.5 3 L0.5 5.5Z" fill="#333"/></svg>
<svg style="left:71.5px;top:287.0px" width="14" height="14" viewBox="0 0 14 14"><path d="M1 5.5 L5.5 1.5 L8.5 3 L8.5 6 L12.5 8 L12.5 10.5 L8 13.5 L1 9 Z" fill="#f4d21a" stroke="#7a6400" stroke-width="0.8" stroke-linejoin="round"/><path d="M1 5.5 L4.5 7.5 L8.5 4.5 M4.5 7.5 V10.5 M4.5 9 L8 11 L12.5 8 M8 11 V13.5" fill="none" stroke="#8a7400" stroke-width="0.6"/><path d="M1 5.5 L4.5 7.5 V10.8 L1 9Z" fill="#d8b000"/></svg>
<div class="t" style="left:87.5px;top:288.5px;font-size:8.4px;color:#2e2e2e;font-weight:normal">(ф) Набой_7&lt;1&gt; -&gt; (По ум</div>
<svg style="left:59.5px;top:306.5px" width="4" height="6"><path d="M0.5 0.5 L3.5 3 L0.5 5.5Z" fill="#333"/></svg>
<svg style="left:71.5px;top:302.0px" width="14" height="14" viewBox="0 0 14 14"><path d="M1 5.5 L5.5 1.5 L8.5 3 L8.5 6 L12.5 8 L12.5 10.5 L8 13.5 L1 9 Z" fill="#f4d21a" stroke="#7a6400" stroke-width="0.8" stroke-linejoin="round"/><path d="M1 5.5 L4.5 7.5 L8.5 4.5 M4.5 7.5 V10.5 M4.5 9 L8 11 L12.5 8 M8 11 V13.5" fill="none" stroke="#8a7400" stroke-width="0.6"/><path d="M1 5.5 L4.5 7.5 V10.8 L1 9Z" fill="#d8b000"/></svg>
<div class="t" style="left:87.5px;top:303.5px;font-size:8.4px;color:#2e2e2e;font-weight:normal">(ф) Набой_6&lt;1&gt; -&gt; (По ум</div>
<svg style="left:59.5px;top:321.5px" width="4" height="6"><path d="M0.5 0.5 L3.5 3 L0.5 5.5Z" fill="#333"/></svg>
<svg style="left:71.5px;top:317.0px" width="14" height="14" viewBox="0 0 14 14"><path d="M1 5.5 L5.5 1.5 L8.5 3 L8.5 6 L12.5 8 L12.5 10.5 L8 13.5 L1 9 Z" fill="#f4d21a" stroke="#7a6400" stroke-width="0.8" stroke-linejoin="round"/><path d="M1 5.5 L4.5 7.5 L8.5 4.5 M4.5 7.5 V10.5 M4.5 9 L8 11 L12.5 8 M8 11 V13.5" fill="none" stroke="#8a7400" stroke-width="0.6"/><path d="M1 5.5 L4.5 7.5 V10.8 L1 9Z" fill="#d8b000"/></svg>
<div class="t" style="left:87.5px;top:318.5px;font-size:8.4px;color:#2e2e2e;font-weight:normal">(ф) Набой_5&lt;1&gt; -&gt; (По ум</div>
<svg style="left:59.5px;top:336.5px" width="4" height="6"><path d="M0.5 0.5 L3.5 3 L0.5 5.5Z" fill="#333"/></svg>
<svg style="left:71.5px;top:332.0px" width="14" height="14" viewBox="0 0 14 14"><path d="M1 5.5 L5.5 1.5 L8.5 3 L8.5 6 L12.5 8 L12.5 10.5 L8 13.5 L1 9 Z" fill="#f4d21a" stroke="#7a6400" stroke-width="0.8" stroke-linejoin="round"/><path d="M1 5.5 L4.5 7.5 L8.5 4.5 M4.5 7.5 V10.5 M4.5 9 L8 11 L12.5 8 M8 11 V13.5" fill="none" stroke="#8a7400" stroke-width="0.6"/><path d="M1 5.5 L4.5 7.5 V10.8 L1 9Z" fill="#d8b000"/></svg>
<div class="t" style="left:87.5px;top:333.5px;font-size:8.4px;color:#2e2e2e;font-weight:normal">(ф) Набой_4&lt;1&gt; -&gt; (По ум</div>
<svg style="left:59.5px;top:351.5px" width="4" height="6"><path d="M0.5 0.5 L3.5 3 L0.5 5.5Z" fill="#333"/></svg>
<svg style="left:71.5px;top:347.0px" width="14" height="14" viewBox="0 0 14 14"><path d="M1 5.5 L5.5 1.5 L8.5 3 L8.5 6 L12.5 8 L12.5 10.5 L8 13.5 L1 9 Z" fill="#f4d21a" stroke="#7a6400" stroke-width="0.8" stroke-linejoin="round"/><path d="M1 5.5 L4.5 7.5 L8.5 4.5 M4.5 7.5 V10.5 M4.5 9 L8 11 L12.5 8 M8 11 V13.5" fill="none" stroke="#8a7400" stroke-width="0.6"/><path d="M1 5.5 L4.5 7.5 V10.8 L1 9Z" fill="#d8b000"/></svg>
<div class="t" style="left:87.5px;top:348.5px;font-size:8.4px;color:#2e2e2e;font-weight:normal">(ф) Набой_3&lt;1&gt; -&gt; (По ум</div>
<svg style="left:59.5px;top:366.5px" width="4" height="6"><path d="M0.5 0.5 L3.5 3 L0.5 5.5Z" fill="#333"/></svg>
<svg style="left:71.5px;top:362.0px" width="14" height="14" viewBox="0 0 14 14"><path d="M1 5.5 L5.5 1.5 L8.5 3 L8.5 6 L12.5 8 L12.5 10.5 L8 13.5 L1 9 Z" fill="#f4d21a" stroke="#7a6400" stroke-width="0.8" stroke-linejoin="round"/><path d="M1 5.5 L4.5 7.5 L8.5 4.5 M4.5 7.5 V10.5 M4.5 9 L8 11 L12.5 8 M8 11 V13.5" fill="none" stroke="#8a7400" stroke-width="0.6"/><path d="M1 5.5 L4.5 7.5 V10.8 L1 9Z" fill="#d8b000"/></svg>
<div class="t" style="left:87.5px;top:363.5px;font-size:8.4px;color:#2e2e2e;font-weight:normal">(ф) Набой_2&lt;1&gt; -&gt; (По ум</div>
<svg style="left:59.5px;top:381.5px" width="4" height="6"><path d="M0.5 0.5 L3.5 3 L0.5 5.5Z" fill="#333"/></svg>
<svg style="left:71.5px;top:377.0px" width="14" height="14" viewBox="0 0 14 14"><path d="M1 5.5 L5.5 1.5 L8.5 3 L8.5 6 L12.5 8 L12.5 10.5 L8 13.5 L1 9 Z" fill="#f4d21a" stroke="#7a6400" stroke-width="0.8" stroke-linejoin="round"/><path d="M1 5.5 L4.5 7.5 L8.5 4.5 M4.5 7.5 V10.5 M4.5 9 L8 11 L12.5 8 M8 11 V13.5" fill="none" stroke="#8a7400" stroke-width="0.6"/><path d="M1 5.5 L4.5 7.5 V10.8 L1 9Z" fill="#d8b000"/></svg>
<div class="t" style="left:87.5px;top:378.5px;font-size:8.4px;color:#2e2e2e;font-weight:normal">(ф) Набой_1&lt;1&gt; -&gt; (По ум</div>
<svg style="left:59.5px;top:396.5px" width="4" height="6"><path d="M0.5 0.5 L3.5 3 L0.5 5.5Z" fill="#333"/></svg>
<svg style="left:71.5px;top:392.0px" width="14" height="14" viewBox="0 0 14 14"><path d="M1 5.5 L5.5 1.5 L8.5 3 L8.5 6 L12.5 8 L12.5 10.5 L8 13.5 L1 9 Z" fill="#f4d21a" stroke="#7a6400" stroke-width="0.8" stroke-linejoin="round"/><path d="M1 5.5 L4.5 7.5 L8.5 4.5 M4.5 7.5 V10.5 M4.5 9 L8 11 L12.5 8 M8 11 V13.5" fill="none" stroke="#8a7400" stroke-width="0.6"/><path d="M1 5.5 L4.5 7.5 V10.8 L1 9Z" fill="#d8b000"/></svg>
<svg style="left:89px;top:393.5px" width="12" height="12" viewBox="0 0 13 13"><circle cx="6.5" cy="6.5" r="6" fill="#d42020"/><path d="M6.5 3 L6.5 8 M4 6 L6.5 9 L9 6" stroke="#fff" stroke-width="1.6" fill="none"/></svg>
<div class="t" style="left:103.5px;top:393.5px;font-size:8.4px;color:#c83232;font-weight:normal">(ф) Транец&lt;1&gt; -&gt; (По</div>
<svg style="left:59.5px;top:411.5px" width="4" height="6"><path d="M0.5 0.5 L3.5 3 L0.5 5.5Z" fill="#333"/></svg>
<svg style="left:71.5px;top:407.0px" width="14" height="14" viewBox="0 0 14 14"><path d="M1 5.5 L5.5 1.5 L8.5 3 L8.5 6 L12.5 8 L12.5 10.5 L8 13.5 L1 9 Z" fill="#f4d21a" stroke="#7a6400" stroke-width="0.8" stroke-linejoin="round"/><path d="M1 5.5 L4.5 7.5 L8.5 4.5 M4.5 7.5 V10.5 M4.5 9 L8 11 L12.5 8 M8 11 V13.5" fill="none" stroke="#8a7400" stroke-width="0.6"/><path d="M1 5.5 L4.5 7.5 V10.8 L1 9Z" fill="#d8b000"/></svg>
<div class="t" style="left:87.5px;top:408.5px;font-size:8.4px;color:#2e2e2e;font-weight:normal">(ф) Шпангоуты&lt;2&gt; -&gt; (По</div>
<svg style="left:59.5px;top:426.5px" width="4" height="6"><path d="M0.5 0.5 L3.5 3 L0.5 5.5Z" fill="#333"/></svg>
<svg style="left:71.5px;top:422.0px" width="14" height="14" viewBox="0 0 14 14"><path d="M1 5.5 L5.5 1.5 L8.5 3 L8.5 6 L12.5 8 L12.5 10.5 L8 13.5 L1 9 Z" fill="#f4d21a" stroke="#7a6400" stroke-width="0.8" stroke-linejoin="round"/><path d="M1 5.5 L4.5 7.5 L8.5 4.5 M4.5 7.5 V10.5 M4.5 9 L8 11 L12.5 8 M8 11 V13.5" fill="none" stroke="#8a7400" stroke-width="0.6"/><path d="M1 5.5 L4.5 7.5 V10.8 L1 9Z" fill="#d8b000"/></svg>
<div class="t" style="left:87.5px;top:423.5px;font-size:8.4px;color:#2e2e2e;font-weight:normal">(ф) Привальный брус&lt;1&gt;</div>
<svg style="left:59.5px;top:441.5px" width="4" height="6"><path d="M0.5 0.5 L3.5 3 L0.5 5.5Z" fill="#333"/></svg>
<svg style="left:71.5px;top:437.0px" width="14" height="14" viewBox="0 0 14 14"><path d="M1 5.5 L5.5 1.5 L8.5 3 L8.5 6 L12.5 8 L12.5 10.5 L8 13.5 L1 9 Z" fill="#f4d21a" stroke="#7a6400" stroke-width="0.8" stroke-linejoin="round"/><path d="M1 5.5 L4.5 7.5 L8.5 4.5 M4.5 7.5 V10.5 M4.5 9 L8 11 L12.5 8 M8 11 V13.5" fill="none" stroke="#8a7400" stroke-width="0.6"/><path d="M1 5.5 L4.5 7.5 V10.8 L1 9Z" fill="#d8b000"/></svg>
<div class="t" style="left:87.5px;top:438.5px;font-size:8.4px;color:#2e2e2e;font-weight:normal">(ф) Брештук&lt;1&gt; -&gt; (По ум</div>
<svg style="left:59.5px;top:456.5px" width="4" height="6"><path d="M0.5 0.5 L3.5 3 L0.5 5.5Z" fill="#333"/></svg>
<svg style="left:71.5px;top:452.0px" width="14" height="14" viewBox="0 0 14 14"><path d="M1 5.5 L5.5 1.5 L8.5 3 L8.5 6 L12.5 8 L12.5 10.5 L8 13.5 L1 9 Z" fill="#f4d21a" stroke="#7a6400" stroke-width="0.8" stroke-linejoin="round"/><path d="M1 5.5 L4.5 7.5 L8.5 4.5 M4.5 7.5 V10.5 M4.5 9 L8 11 L12.5 8 M8 11 V13.5" fill="none" stroke="#8a7400" stroke-width="0.6"/><path d="M1 5.5 L4.5 7.5 V10.8 L1 9Z" fill="#d8b000"/></svg>
<div class="t" style="left:87.5px;top:453.5px;font-size:8.4px;color:#2e2e2e;font-weight:normal">(ф) Банка носовая&lt;1&gt; -&gt; (</div>
<svg style="left:59.5px;top:471.5px" width="4" height="6"><path d="M0.5 0.5 L3.5 3 L0.5 5.5Z" fill="#333"/></svg>
<svg style="left:71.5px;top:467.0px" width="14" height="14" viewBox="0 0 14 14"><path d="M1 5.5 L5.5 1.5 L8.5 3 L8.5 6 L12.5 8 L12.5 10.5 L8 13.5 L1 9 Z" fill="#f4d21a" stroke="#7a6400" stroke-width="0.8" stroke-linejoin="round"/><path d="M1 5.5 L4.5 7.5 L8.5 4.5 M4.5 7.5 V10.5 M4.5 9 L8 11 L12.5 8 M8 11 V13.5" fill="none" stroke="#8a7400" stroke-width="0.6"/><path d="M1 5.5 L4.5 7.5 V10.8 L1 9Z" fill="#d8b000"/></svg>
<div class="t" style="left:87.5px;top:468.5px;font-size:8.4px;color:#2e2e2e;font-weight:normal">(ф) Банка центральная&lt;1&gt;</div>
<svg style="left:72px;top:482.5px" width="14" height="14" viewBox="0 0 14 14"><rect x="1.5" y="2" width="4" height="10" rx="2" fill="none" stroke="#2a6ab0" stroke-width="1.1"/><rect x="7" y="2" width="4" height="10" rx="2" fill="none" stroke="#2a6ab0" stroke-width="1.1"/></svg>
<div class="t" style="left:87.5px;top:483.5px;font-size:8.4px;color:#2e2e2e;font-weight:normal">Группа сопряжений1</div>
</div>
<div class="r" style="left:54px;top:496px;width:135px;height:2px;background:#3c78b4;"></div>
<div class="r" style="left:189px;top:349px;width:7px;height:27px;background:#f7f7f7;box-sizing:border-box;border:1px solid #c8c8c8;border-left:none;"></div>
<svg style="left:189.5px;top:359.5px" width="5" height="5" viewBox="0 0 5 5"><circle cx="2.5" cy="2.5" r="1.6" fill="none" stroke="#b0b0b0" stroke-width="0.9"/></svg>
<div class="r" style="left:55px;top:658.5px;width:134px;height:10.5px;background:#efefef;"></div>
<div class="r" style="left:65.5px;top:658.5px;width:37.5px;height:10.5px;background:#cfcfcf;"></div>
<svg style="left:57px;top:661px" width="5" height="7"><path d="M4 0.5 L1 3.5 L4 6.5" stroke="#333" stroke-width="1.1" fill="none"/></svg>
<svg style="left:182px;top:661px" width="5" height="7"><path d="M1 0.5 L4 3.5 L1 6.5" stroke="#333" stroke-width="1.1" fill="none"/></svg>
<div class="r" style="left:189px;top:657px;width:68px;height:12px;background:#d8d8d8;"></div>
<div class="t" style="left:189.5px;top:657px;font-size:8.5px;color:#333;font-weight:normal">мерные виды</div>
<div class="r" style="left:707px;top:56px;width:24.5px;height:18px;background:#c9c9c9;"></div>
<div class="r" style="left:725px;top:57px;width:6px;height:16px;background:#e6e6e6;"></div>
<svg style="left:570px;top:57.5px" width="15" height="15" viewBox="0 0 15 15"><circle cx="8.5" cy="5.5" r="4.5" fill="#f4f8fa" stroke="#555" stroke-width="1.1"/><circle cx="8.5" cy="5.5" r="1.6" fill="#888"/><path d="M5.5 8.5 L1 13" stroke="#444" stroke-width="1.8"/></svg>
<svg style="left:588px;top:57.5px" width="15" height="15" viewBox="0 0 15 15"><circle cx="8.5" cy="5.5" r="4.5" fill="#f4f8fa" stroke="#555" stroke-width="1.1" stroke-dasharray="1.5 0.8"/><path d="M5.5 8.5 L1 13" stroke="#444" stroke-width="1.8"/></svg>
<svg style="left:606px;top:57.5px" width="15" height="15" viewBox="0 0 15 15"><path d="M2 10 L9 4 L12 7 L5 13 Z" fill="#e0e4e6" stroke="#555" stroke-width="0.9"/><path d="M9 4 L11 2 L14 5 L12 7" fill="#4a9ac8" stroke="#2a6a98" stroke-width="0.8"/><circle cx="5" cy="9" r="1.5" fill="#4a9ac8"/></svg>
<svg style="left:623.5px;top:57.5px" width="15" height="15" viewBox="0 0 15 15"><path d="M1.5 4 L8 2 L8 13 L1.5 14 Z" fill="#8ab8d0" stroke="#3a6a88" stroke-width="0.9"/><path d="M8 2 L13.5 3.5 V12.5 L8 13Z" fill="#5a98b8" stroke="#3a6a88" stroke-width="0.9"/></svg>
<svg style="left:641px;top:57.5px" width="15" height="15" viewBox="0 0 15 15"><path d="M3 13 L8 2 L13 13 M5 9 H11" fill="none" stroke="#3a6a88" stroke-width="1.5"/><path d="M1 4 Q4 1 7 4" fill="none" stroke="#e8a030" stroke-width="2"/><path d="M9 7 L13 3" stroke="#c08040" stroke-width="2"/></svg>
<svg style="left:659px;top:57.5px" width="15" height="15" viewBox="0 0 15 15"><path d="M1.5 4 L7 1.5 L13 4 V11 L7 14 L1.5 11 Z" fill="#a8cce0" stroke="#555" stroke-width="0.9"/><path d="M7 7 H13.5 V13.5" fill="none" stroke="#555" stroke-width="0.8" stroke-dasharray="1.2 0.8"/></svg>
<svg style="left:684.5px;top:57.5px" width="15" height="15" viewBox="0 0 15 15"><path d="M1.5 4 L7 1.5 L13 4 V11 L7 14 L1.5 11 Z" fill="#bcdcec" stroke="#4a6a80" stroke-width="0.9"/><path d="M1.5 4 L7 6.5 L13 4 M7 6.5 V14" fill="none" stroke="#6a8aa0" stroke-width="0.8"/><path d="M7 6.5 L13 4 V11 L7 14Z" fill="#7ab0d0"/></svg>
<svg style="left:711.5px;top:57.5px" width="15" height="15" viewBox="0 0 15 15"><path d="M0.5 7.5 Q6.5 -0.5 12.5 7.5 Q6.5 15.5 0.5 7.5Z" fill="#fff" stroke="#222" stroke-width="1.1"/><circle cx="6.5" cy="7.5" r="3" fill="#111"/><circle cx="5.5" cy="6.3" r="0.9" fill="#fff"/></svg>
<svg style="left:733px;top:57.5px" width="15" height="15" viewBox="0 0 15 15"><circle cx="7" cy="7.5" r="6" fill="#2a8ad8"/><path d="M7 7.5 L1.5 4.5 A6 6 0 0 1 11 2.8Z" fill="#d83030"/><path d="M7 7.5 L1.5 4.5 A6 6 0 0 0 5 13.2Z" fill="#30a040"/><path d="M7 7.5 L13 7.5 A6 6 0 0 1 5 13.2Z" fill="#e8c020"/><path d="M11 9 L14.5 11 L12 13Z" fill="#444"/></svg>
<svg style="left:750.5px;top:57.5px" width="15" height="15" viewBox="0 0 15 15"><circle cx="7" cy="6" r="5" fill="#2a8ad8"/><path d="M7 6 L2 4 A5 5 0 0 1 11 2.5Z" fill="#d83030"/><path d="M7 6 L12 6 A5 5 0 0 1 4 10Z" fill="#30a040"/><path d="M1 10 L14 10 L14 14 L1 14Z" fill="#222"/><path d="M1 12 L4 10 L7 12 L10 10 L13 12" fill="none" stroke="#e8c020" stroke-width="1.2"/></svg>
<svg style="left:776.5px;top:57.5px" width="15" height="15" viewBox="0 0 15 15"><rect x="1" y="2" width="13" height="9" fill="#f4f4f4" stroke="#555" stroke-width="1"/><path d="M7.5 11 V13.5 M4 13.5 H11" stroke="#555" stroke-width="1.1"/></svg>
<svg style="left:676.3px;top:63.5px" width="4" height="3" viewBox="0 0 4 3"><path d="M0 0 H4 L2 2.5Z" fill="#555"/></svg>
<svg style="left:700.7px;top:63.5px" width="4" height="3" viewBox="0 0 4 3"><path d="M0 0 H4 L2 2.5Z" fill="#555"/></svg>
<svg style="left:725.7px;top:63.5px" width="4" height="3" viewBox="0 0 4 3"><path d="M0 0 H4 L2 2.5Z" fill="#555"/></svg>
<svg style="left:767.4px;top:63.5px" width="4" height="3" viewBox="0 0 4 3"><path d="M0 0 H4 L2 2.5Z" fill="#555"/></svg>
<svg style="left:793.4px;top:63.5px" width="4" height="3" viewBox="0 0 4 3"><path d="M0 0 H4 L2 2.5Z" fill="#555"/></svg>
<svg style="left:1090px;top:59px" width="12" height="13" viewBox="0 0 12 13"><rect x="1.5" y="1.5" width="9" height="10" fill="none" stroke="#999" stroke-width="1"/><rect x="2" y="5" width="1.6" height="2" fill="#777"/></svg>
<svg style="left:1108px;top:59px" width="12" height="13" viewBox="0 0 12 13"><rect x="1.5" y="1.5" width="9" height="10" fill="none" stroke="#999" stroke-width="1"/><rect x="8.4" y="5" width="1.6" height="2" fill="#777"/></svg>
<div class="r" style="left:1128px;top:68.5px;width:7.5px;height:1.2px;background:#888;"></div>
<svg style="left:1142px;top:59px" width="15" height="13" viewBox="0 0 15 13"><rect x="4.5" y="1.5" width="8.5" height="6.5" fill="none" stroke="#999" stroke-width="1"/><rect x="1.5" y="5" width="8.5" height="6.5" fill="#fff" stroke="#999" stroke-width="1"/></svg>
<svg style="left:1162px;top:60px" width="11" height="11" viewBox="0 0 11 11"><path d="M1 1 L10 10 M10 1 L1 10" stroke="#888" stroke-width="1.1"/></svg>
<div class="r" style="left:1160.5px;top:102.3px;width:18px;height:101px;background:#d6d6d6;box-sizing:border-box;border:1px solid #b8b8b8;"></div>
<div class="r" style="left:1161px;top:136px;width:17px;height:17px;background:#fafafa;"></div>
<div class="r" style="left:1161px;top:119.1px;width:17px;height:0.8px;background:#b8b8b8;"></div>
<div class="r" style="left:1161px;top:135.9px;width:17px;height:0.8px;background:#b8b8b8;"></div>
<div class="r" style="left:1161px;top:152.7px;width:17px;height:0.8px;background:#b8b8b8;"></div>
<div class="r" style="left:1161px;top:169.5px;width:17px;height:0.8px;background:#b8b8b8;"></div>
<div class="r" style="left:1161px;top:186.3px;width:17px;height:0.8px;background:#b8b8b8;"></div>
<svg style="left:1162px;top:103.5px" width="15" height="15" viewBox="0 0 15 15"><path d="M1.5 7.5 L7.5 1.5 L13.5 7.5" fill="none" stroke="#3a6a88" stroke-width="1.8"/><path d="M3.5 7 V13.5 H11.5 V7" fill="#fff" stroke="#333" stroke-width="1"/><rect x="6" y="9" width="3" height="4.5" fill="none" stroke="#333" stroke-width="0.8"/></svg>
<svg style="left:1162px;top:120.3px" width="15" height="15" viewBox="0 0 15 15"><path d="M2 4 Q2 2 4 2 Q6 2 6 4 V13 H2Z M6 4 Q6 2 8 2 Q10 2 10 4 V13 H6Z M10 4 Q10 2 12 2 Q14 2 14 4 V13 H10Z" fill="#f0f0f0" stroke="#444" stroke-width="0.9"/></svg>
<svg style="left:1162px;top:137.1px" width="15" height="15" viewBox="0 0 15 15"><path d="M1.5 3 H6 L7 4.5 H13 V13 H1.5 Z" fill="#fff" stroke="#444" stroke-width="0.9"/><path d="M1.5 13 L4 7 H14.5 L12.5 13Z" fill="#f4f4f4" stroke="#444" stroke-width="0.9"/></svg>
<svg style="left:1162px;top:153.9px" width="15" height="15" viewBox="0 0 15 15"><rect x="1" y="2" width="6" height="5" fill="#f2c418" stroke="#555" stroke-width="0.6"/><rect x="8" y="2" width="6" height="5" fill="#f2c418" stroke="#555" stroke-width="0.6"/><path d="M1 14 L4 8.5 L7 14Z" fill="#f2c418" stroke="#555" stroke-width="0.6"/><rect x="8" y="9" width="6" height="5" fill="#fff" stroke="#555" stroke-width="0.6"/><rect x="8" y="9" width="6" height="1.5" fill="#3a6a88"/></svg>
<svg style="left:1162px;top:170.7px" width="15" height="15" viewBox="0 0 15 15"><circle cx="7.5" cy="7.5" r="6.3" fill="#2a8ad8"/><path d="M7.5 7.5 L1.5 5.5 A6.3 6.3 0 0 1 12 3Z" fill="#d83030"/><path d="M7.5 7.5 L1.5 5.5 A6.3 6.3 0 0 0 6 13.6Z" fill="#30a040"/><path d="M7.5 7.5 L13.8 7.5 A6.3 6.3 0 0 1 6 13.6Z" fill="#e8c020"/><circle cx="5" cy="4.5" r="1.5" fill="#fff" opacity="0.6"/></svg>
<svg style="left:1162px;top:187.5px" width="15" height="15" viewBox="0 0 15 15"><rect x="1.5" y="1.5" width="12" height="12" fill="#fff" stroke="#3a6a88" stroke-width="1"/><rect x="1.5" y="1.5" width="12" height="2.5" fill="#3a7aa0"/><rect x="1.5" y="4" width="3" height="9.5" fill="#6a9ac0"/><path d="M6 6.5 H12 M6 9 H12 M6 11.5 H12" stroke="#333" stroke-width="0.8"/></svg>
<div class="r" style="left:1180px;top:57px;width:19px;height:1px;border-top:1px dotted #bbb"></div>
<svg style="left:1182px;top:62.0px" width="16" height="16" viewBox="0 0 16 16"><path d="M2 13 L7 7 M7 7 L13 3 M7 7 L12 10" fill="none" stroke="#d0d0d0" stroke-width="1.1"/><rect x="2" y="1.5" width="4" height="4" fill="none" stroke="#d0d0d0" stroke-width="0.9"/></svg>
<svg style="left:1182px;top:79.5px" width="16" height="16" viewBox="0 0 16 16"><circle cx="9" cy="9" r="4.5" fill="none" stroke="#d0d0d0" stroke-width="1.1"/><path d="M3 13 Q3 5 10 3" fill="none" stroke="#d0d0d0" stroke-width="1.1"/><rect x="2" y="1.5" width="3" height="3" fill="none" stroke="#d0d0d0" stroke-width="0.8"/></svg>
<svg style="left:1182px;top:97.0px" width="16" height="16" viewBox="0 0 16 16"><path d="M2 14 Q3 4 13 2" fill="none" stroke="#d0d0d0" stroke-width="1.2"/></svg>
<svg style="left:1182px;top:114.5px" width="16" height="16" viewBox="0 0 16 16"><path d="M2 12 Q5 6 8 9 Q11 12 14 5" fill="none" stroke="#d0d0d0" stroke-width="1.2"/><path d="M5 4 L12 12" stroke="#d0d0d0" stroke-width="0.9"/></svg>
<svg style="left:1182px;top:132.0px" width="16" height="16" viewBox="0 0 16 16"><path d="M2 1 V13 H14" fill="none" stroke="#d0d0d0" stroke-width="1.2"/></svg>
<svg style="left:1182px;top:153.5px" width="16" height="16" viewBox="0 0 16 16"><circle cx="8" cy="9" r="4" fill="none" stroke="#d0d0d0" stroke-width="1.1"/><path d="M3 4 L13 14 M11 2 L5 9" stroke="#d0d0d0" stroke-width="1"/></svg>
<svg style="left:1182px;top:171.0px" width="16" height="16" viewBox="0 0 16 16"><path d="M2 3 Q8 8 13 2 M3 13 Q8 6 12 13" fill="none" stroke="#d0d0d0" stroke-width="1.1"/></svg>
<svg style="left:1182px;top:188.5px" width="16" height="16" viewBox="0 0 16 16"><path d="M2 14 Q2 3 8 3 Q14 3 13 13" fill="none" stroke="#d0d0d0" stroke-width="1.1"/><rect x="6" y="1" width="4" height="4" fill="none" stroke="#d0d0d0" stroke-width="0.8"/></svg>
<svg style="left:1182px;top:206.0px" width="16" height="16" viewBox="0 0 16 16"><path d="M2 14 Q6 10 8 7 Q10 4 14 2" fill="none" stroke="#d0d0d0" stroke-width="1.1"/><circle cx="8" cy="8" r="2" fill="none" stroke="#d0d0d0" stroke-width="0.8"/></svg>
<div class="r" style="left:1180px;top:151px;width:20px;height:1px;background:#d8d8d8;"></div>
<div class="r" style="left:1180px;top:229px;width:20px;height:1px;background:#d8d8d8;"></div>
<div class="r" style="left:2px;top:672px;width:1px;height:17px;border-left:1px dotted #999"></div>
<div class="r" style="left:61.25px;top:671.9px;width:24px;height:17.5px;background:#bdbdbd;"></div>
<div class="r" style="left:85px;top:671.9px;width:6.5px;height:17.5px;background:#f4f4f4;box-sizing:border-box;border:1px solid #cfcfcf;"></div>
<svg style="left:86px;top:679px" width="4" height="3" viewBox="0 0 4 3"><path d="M0 0 H4 L2 2.5Z" fill="#333"/></svg>
<svg style="left:65px;top:673px" width="10" height="15" viewBox="0 0 10 15"><path d="M1.5 1 L1.5 12 L4 9.5 L6.5 14 L8 13 L5.7 8.7 L9 8.5 Z" fill="#fff" stroke="#333" stroke-width="0.9"/></svg>
<svg style="left:11px;top:674px" width="10" height="13" viewBox="0 0 10 13"><path d="M1 1.5 H9 L6 6.5 V12 L4 10.5 V6.5 Z" fill="none" stroke="#d0d0d0" stroke-width="1.1"/></svg>
<svg style="left:29px;top:674px" width="11" height="13" viewBox="0 0 11 13"><path d="M1 1.5 H10 L6.5 7 V12" fill="none" stroke="#d0d0d0" stroke-width="1.1"/><path d="M3 4 L8 9" stroke="#d0d0d0" stroke-width="0.9"/></svg>
<svg style="left:46px;top:673px" width="13" height="15" viewBox="0 0 13 15"><path d="M1 1.5 H7 L5 4.5 V8 L3.5 7 V4.5Z M4 4.5 H10 L8 7.5 V11 L6.5 10 V7.5Z M6 7.5 H12 L10 10.5 V14 L8.5 13 V10.5Z" fill="#c07ae0" stroke="#7a4a98" stroke-width="0.8"/></svg>
<svg style="left:94px;top:673px" width="13" height="15" viewBox="0 0 13 15"><path d="M2 1 L2 11 L4.5 9 L7 13.5 L8.5 12.5 L6.2 8.2 L9.5 8 Z" fill="#e8e8e8" stroke="#d0d0d0" stroke-width="0.9"/><path d="M7 3 L12 3 L9 7" fill="none" stroke="#d0d0d0" stroke-width="0.9"/></svg>
<div class="r" style="left:110.5px;top:673px;width:1px;height:15px;background:#d4d4d4;"></div>
<svg style="left:114px;top:673px" width="14" height="14" viewBox="0 0 14 14"><circle cx="5" cy="5" r="2.3" fill="#4a9ac8" stroke="#2a6a88" stroke-width="0.5"/></svg>
<svg style="left:123px;top:681.5px" width="7" height="7" viewBox="0 0 7 7"><path d="M0.5 0.5 H6.5 L4.2 3.5 V6.5 L2.8 5.5 V3.5 Z" fill="#c688e4" stroke="#8a4aa8" stroke-width="0.6"/></svg>
<svg style="left:132px;top:673px" width="14" height="14" viewBox="0 0 14 14"><path d="M5.5 1 V13" stroke="#4a6a72" stroke-width="1.5"/></svg>
<svg style="left:141px;top:681.5px" width="7" height="7" viewBox="0 0 7 7"><path d="M0.5 0.5 H6.5 L4.2 3.5 V6.5 L2.8 5.5 V3.5 Z" fill="#c688e4" stroke="#8a4aa8" stroke-width="0.6"/></svg>
<svg style="left:151.5px;top:673px" width="14" height="14" viewBox="0 0 14 14"><rect x="1" y="1" width="10" height="9" fill="#5aaad0" stroke="#3a7a98" stroke-width="0.8"/></svg>
<svg style="left:160.5px;top:681.5px" width="7" height="7" viewBox="0 0 7 7"><path d="M0.5 0.5 H6.5 L4.2 3.5 V6.5 L2.8 5.5 V3.5 Z" fill="#c688e4" stroke="#8a4aa8" stroke-width="0.6"/></svg>
<svg style="left:170.2px;top:673px" width="14" height="14" viewBox="0 0 14 14"><path d="M1 6 L6 2 L12 4 L8 9 Z" fill="#6ab0d8" stroke="#3a7a98" stroke-width="0.8"/><path d="M1 6 L2 10 L8 12 L8 9Z" fill="#4a90b8" stroke="#3a7a98" stroke-width="0.8"/></svg>
<svg style="left:179.2px;top:681.5px" width="7" height="7" viewBox="0 0 7 7"><path d="M0.5 0.5 H6.5 L4.2 3.5 V6.5 L2.8 5.5 V3.5 Z" fill="#c688e4" stroke="#8a4aa8" stroke-width="0.6"/></svg>
<svg style="left:189px;top:673px" width="14" height="14" viewBox="0 0 14 14"><path d="M1 3.5 L7 1 L12 3 V10 L6 13 L1 10.5 Z" fill="#6ab4dc" stroke="#2a6a88" stroke-width="0.8"/><path d="M1 3.5 L6 5.5 L12 3 M6 5.5 V13" fill="none" stroke="#2a6a88" stroke-width="0.8"/><path d="M6 5.5 L12 3 V10 L6 13Z" fill="#3a8ab8"/></svg>
<svg style="left:198px;top:681.5px" width="7" height="7" viewBox="0 0 7 7"><path d="M0.5 0.5 H6.5 L4.2 3.5 V6.5 L2.8 5.5 V3.5 Z" fill="#c688e4" stroke="#8a4aa8" stroke-width="0.6"/></svg>
<svg style="left:206.7px;top:673px" width="14" height="14" viewBox="0 0 14 14"><path d="M1 12 L12 1" stroke="#4a5a62" stroke-width="1.2"/></svg>
<svg style="left:215.7px;top:681.5px" width="7" height="7" viewBox="0 0 7 7"><path d="M0.5 0.5 H6.5 L4.2 3.5 V6.5 L2.8 5.5 V3.5 Z" fill="#c688e4" stroke="#8a4aa8" stroke-width="0.6"/></svg>
<svg style="left:225.4px;top:673px" width="14" height="14" viewBox="0 0 14 14"><path d="M2 4 L10 2 V11 L2 13 Z" fill="#5aa0c8" stroke="#3a7a98" stroke-width="0.8"/><path d="M6 0 V14" stroke="#3a7a98" stroke-width="0.8"/></svg>
<svg style="left:234.4px;top:681.5px" width="7" height="7" viewBox="0 0 7 7"><path d="M0.5 0.5 H6.5 L4.2 3.5 V6.5 L2.8 5.5 V3.5 Z" fill="#c688e4" stroke="#8a4aa8" stroke-width="0.6"/></svg>
<svg style="left:244.2px;top:673px" width="14" height="14" viewBox="0 0 14 14"><rect x="2" y="2" width="6" height="6" fill="#5aa0c8" stroke="#3a7a98" stroke-width="0.8"/></svg>
<svg style="left:253.2px;top:681.5px" width="7" height="7" viewBox="0 0 7 7"><path d="M0.5 0.5 H6.5 L4.2 3.5 V6.5 L2.8 5.5 V3.5 Z" fill="#c688e4" stroke="#8a4aa8" stroke-width="0.6"/></svg>
<svg style="left:261.9px;top:673px" width="14" height="14" viewBox="0 0 14 14"><path d="M10 1.5 H5 Q1.5 1.5 1.5 5 V11.5 H10" fill="none" stroke="#4a6a72" stroke-width="1.3"/></svg>
<svg style="left:270.9px;top:681.5px" width="7" height="7" viewBox="0 0 7 7"><path d="M0.5 0.5 H6.5 L4.2 3.5 V6.5 L2.8 5.5 V3.5 Z" fill="#c688e4" stroke="#8a4aa8" stroke-width="0.6"/></svg>
<svg style="left:280.6px;top:673px" width="14" height="14" viewBox="0 0 14 14"><path d="M2 13 V1.5 H12" fill="none" stroke="#4a5a62" stroke-width="1.3"/></svg>
<svg style="left:289.6px;top:681.5px" width="7" height="7" viewBox="0 0 7 7"><path d="M0.5 0.5 H6.5 L4.2 3.5 V6.5 L2.8 5.5 V3.5 Z" fill="#c688e4" stroke="#8a4aa8" stroke-width="0.6"/></svg>
<svg style="left:298.3px;top:673px" width="14" height="14" viewBox="0 0 14 14"><path d="M1 12 L12 1" stroke="#4a5a62" stroke-width="1.2"/></svg>
<svg style="left:307.3px;top:681.5px" width="7" height="7" viewBox="0 0 7 7"><path d="M0.5 0.5 H6.5 L4.2 3.5 V6.5 L2.8 5.5 V3.5 Z" fill="#c688e4" stroke="#8a4aa8" stroke-width="0.6"/></svg>
<svg style="left:317px;top:673px" width="14" height="14" viewBox="0 0 14 14"><circle cx="6" cy="6" r="3.8" fill="none" stroke="#333" stroke-width="1"/><path d="M6 0.5 V11.5 M0.5 6 H11.5" stroke="#333" stroke-width="1"/></svg>
<svg style="left:326px;top:681.5px" width="7" height="7" viewBox="0 0 7 7"><path d="M0.5 0.5 H6.5 L4.2 3.5 V6.5 L2.8 5.5 V3.5 Z" fill="#c688e4" stroke="#8a4aa8" stroke-width="0.6"/></svg>
<svg style="left:334.8px;top:673px" width="14" height="14" viewBox="0 0 14 14"><rect x="1" y="1" width="10" height="10" fill="none" stroke="#555" stroke-width="0.9"/><path d="M6 1 V11 M1 6 H11" stroke="#555" stroke-width="0.8"/></svg>
<svg style="left:343.8px;top:681.5px" width="7" height="7" viewBox="0 0 7 7"><path d="M0.5 0.5 H6.5 L4.2 3.5 V6.5 L2.8 5.5 V3.5 Z" fill="#c688e4" stroke="#8a4aa8" stroke-width="0.6"/></svg>
<svg style="left:353.5px;top:673px" width="14" height="14" viewBox="0 0 14 14"><path d="M1 9 L6 3 L11 6 L6 12 Z" fill="#fff" stroke="#333" stroke-width="1"/><path d="M6 3 L8 1 L12 3" fill="none" stroke="#333" stroke-width="1"/></svg>
<svg style="left:362.5px;top:681.5px" width="7" height="7" viewBox="0 0 7 7"><path d="M0.5 0.5 H6.5 L4.2 3.5 V6.5 L2.8 5.5 V3.5 Z" fill="#c688e4" stroke="#8a4aa8" stroke-width="0.6"/></svg>
<svg style="left:371.2px;top:673px" width="14" height="14" viewBox="0 0 14 14"><path d="M1 8 L3 12 L10 1" fill="none" stroke="#333" stroke-width="1.2"/></svg>
<svg style="left:380.2px;top:681.5px" width="7" height="7" viewBox="0 0 7 7"><path d="M0.5 0.5 H6.5 L4.2 3.5 V6.5 L2.8 5.5 V3.5 Z" fill="#c688e4" stroke="#8a4aa8" stroke-width="0.6"/></svg>
<svg style="left:389px;top:673px" width="14" height="14" viewBox="0 0 14 14"><rect x="1" y="3" width="12" height="5" fill="#e8e8e8" stroke="#555" stroke-width="0.8"/><rect x="3" y="4.5" width="3" height="2" fill="#888"/></svg>
<svg style="left:398px;top:681.5px" width="7" height="7" viewBox="0 0 7 7"><path d="M0.5 0.5 H6.5 L4.2 3.5 V6.5 L2.8 5.5 V3.5 Z" fill="#c688e4" stroke="#8a4aa8" stroke-width="0.6"/></svg>
<svg style="left:406.5px;top:673px" width="14" height="14" viewBox="0 0 14 14"><circle cx="7" cy="6" r="4.5" fill="#fff" stroke="#333" stroke-width="1"/><path d="M4 11 L1 14" stroke="#333" stroke-width="1.2"/><text x="5" y="8.5" font-size="6" font-family="Liberation Sans" fill="#333">N</text></svg>
<svg style="left:415.5px;top:681.5px" width="7" height="7" viewBox="0 0 7 7"><path d="M0.5 0.5 H6.5 L4.2 3.5 V6.5 L2.8 5.5 V3.5 Z" fill="#c688e4" stroke="#8a4aa8" stroke-width="0.6"/></svg>
<svg style="left:424.5px;top:673px" width="14" height="14" viewBox="0 0 14 14"><rect x="1.5" y="1" width="10" height="9" fill="#fff" stroke="#555" stroke-width="0.8"/><text x="3.5" y="8.5" font-size="7" font-family="Liberation Sans" fill="#333">A</text><path d="M3 13 L6.5 10 L10 13Z" fill="#222"/></svg>
<svg style="left:433.5px;top:681.5px" width="7" height="7" viewBox="0 0 7 7"><path d="M0.5 0.5 H6.5 L4.2 3.5 V6.5 L2.8 5.5 V3.5 Z" fill="#c688e4" stroke="#8a4aa8" stroke-width="0.6"/></svg>
<svg style="left:442px;top:673px" width="14" height="14" viewBox="0 0 14 14"><path d="M1 11 Q3 4 6 7 Q9 10 12 3" fill="none" stroke="#333" stroke-width="1.1"/><path d="M6 7 L12 1" stroke="#333" stroke-width="0.8"/></svg>
<svg style="left:451px;top:681.5px" width="7" height="7" viewBox="0 0 7 7"><path d="M0.5 0.5 H6.5 L4.2 3.5 V6.5 L2.8 5.5 V3.5 Z" fill="#c688e4" stroke="#8a4aa8" stroke-width="0.6"/></svg>
<svg style="left:460px;top:673px" width="14" height="14" viewBox="0 0 14 14"><path d="M2 1 V12 H12 Z" fill="#cfe0ea" stroke="#555" stroke-width="0.8"/><path d="M4 12 V14 M6 12 V14 M8 12 V14" stroke="#555" stroke-width="0.8"/></svg>
<svg style="left:469px;top:681.5px" width="7" height="7" viewBox="0 0 7 7"><path d="M0.5 0.5 H6.5 L4.2 3.5 V6.5 L2.8 5.5 V3.5 Z" fill="#c688e4" stroke="#8a4aa8" stroke-width="0.6"/></svg>
<svg style="left:478px;top:673px" width="14" height="14" viewBox="0 0 14 14"><circle cx="7" cy="6" r="4.5" fill="#fff" stroke="#333" stroke-width="1"/><path d="M4 11 L1 14" stroke="#333" stroke-width="1.2"/><text x="4.5" y="8.5" font-size="6" font-family="Liberation Sans" fill="#333">A</text></svg>
<svg style="left:487px;top:681.5px" width="7" height="7" viewBox="0 0 7 7"><path d="M0.5 0.5 H6.5 L4.2 3.5 V6.5 L2.8 5.5 V3.5 Z" fill="#c688e4" stroke="#8a4aa8" stroke-width="0.6"/></svg>
<svg style="left:496px;top:673px" width="14" height="14" viewBox="0 0 14 14"><path d="M3 1 H9 V8 L6 12 L3 8Z" fill="#eee" stroke="#666" stroke-width="0.9"/><path d="M5 1 V8" stroke="#666" stroke-width="0.7"/></svg>
<svg style="left:505px;top:681.5px" width="7" height="7" viewBox="0 0 7 7"><path d="M0.5 0.5 H6.5 L4.2 3.5 V6.5 L2.8 5.5 V3.5 Z" fill="#c688e4" stroke="#8a4aa8" stroke-width="0.6"/></svg>
<svg style="left:514px;top:673px" width="14" height="14" viewBox="0 0 14 14"><rect x="1" y="1" width="11" height="11" fill="#fff" stroke="#555" stroke-width="0.8"/><text x="2.5" y="10" font-size="8" font-family="Liberation Sans" fill="#222">A</text></svg>
<svg style="left:523px;top:681.5px" width="7" height="7" viewBox="0 0 7 7"><path d="M0.5 0.5 H6.5 L4.2 3.5 V6.5 L2.8 5.5 V3.5 Z" fill="#c688e4" stroke="#8a4aa8" stroke-width="0.6"/></svg>
<svg style="left:532px;top:673px" width="14" height="14" viewBox="0 0 14 14"><circle cx="6.5" cy="6.5" r="5.5" fill="#fff" stroke="#222" stroke-width="0.9"/><path d="M6.5 6.5 V1 A5.5 5.5 0 0 1 12 6.5Z M6.5 6.5 V12 A5.5 5.5 0 0 1 1 6.5Z" fill="#222"/></svg>
<svg style="left:541px;top:681.5px" width="7" height="7" viewBox="0 0 7 7"><path d="M0.5 0.5 H6.5 L4.2 3.5 V6.5 L2.8 5.5 V3.5 Z" fill="#c688e4" stroke="#8a4aa8" stroke-width="0.6"/></svg>
<svg style="left:550px;top:673px" width="14" height="14" viewBox="0 0 14 14"><path d="M0.5 6 H7" stroke="#3a7aa8" stroke-width="1.2"/><rect x="7" y="3.5" width="5" height="5" fill="#4a9ac8" stroke="#2a6a88" stroke-width="0.6"/></svg>
<svg style="left:559px;top:681.5px" width="7" height="7" viewBox="0 0 7 7"><path d="M0.5 0.5 H6.5 L4.2 3.5 V6.5 L2.8 5.5 V3.5 Z" fill="#c688e4" stroke="#8a4aa8" stroke-width="0.6"/></svg>
<svg style="left:568px;top:673px" width="14" height="14" viewBox="0 0 14 14"><path d="M0.5 6 H12" stroke="#3a7aa8" stroke-width="1.2"/><rect x="4" y="3.5" width="5" height="5" fill="#4a9ac8" stroke="#2a6a88" stroke-width="0.6"/></svg>
<svg style="left:577px;top:681.5px" width="7" height="7" viewBox="0 0 7 7"><path d="M0.5 0.5 H6.5 L4.2 3.5 V6.5 L2.8 5.5 V3.5 Z" fill="#c688e4" stroke="#8a4aa8" stroke-width="0.6"/></svg>
<svg style="left:586px;top:673px" width="14" height="14" viewBox="0 0 14 14"><rect x="1" y="1" width="12" height="10" fill="#5aa0c8" stroke="#3a6a88" stroke-width="0.8"/><circle cx="10" cy="4" r="2.5" fill="#fff" stroke="#555" stroke-width="0.7"/></svg>
<svg style="left:595px;top:681.5px" width="7" height="7" viewBox="0 0 7 7"><path d="M0.5 0.5 H6.5 L4.2 3.5 V6.5 L2.8 5.5 V3.5 Z" fill="#c688e4" stroke="#8a4aa8" stroke-width="0.6"/></svg>
<svg style="left:606px;top:673px" width="14" height="14" viewBox="0 0 14 14"><path d="M1 0 V13" stroke="#555" stroke-width="1"/><path d="M4 6 L8 2 L12 6 V11 H4Z" fill="#fff" stroke="#444" stroke-width="0.9"/><circle cx="8" cy="7.5" r="1.3" fill="#c04040"/></svg>
<svg style="left:615px;top:681.5px" width="7" height="7" viewBox="0 0 7 7"><path d="M0.5 0.5 H6.5 L4.2 3.5 V6.5 L2.8 5.5 V3.5 Z" fill="#c688e4" stroke="#8a4aa8" stroke-width="0.6"/></svg>
<svg style="left:623px;top:673px" width="14" height="14" viewBox="0 0 14 14"><circle cx="2.5" cy="6.5" r="2" fill="#4a9ac8"/><path d="M5 6 L9 2 L13 6 V11 H5Z" fill="#fff" stroke="#444" stroke-width="0.9"/><circle cx="9" cy="7.5" r="1.3" fill="#c04040"/></svg>
<svg style="left:632px;top:681.5px" width="7" height="7" viewBox="0 0 7 7"><path d="M0.5 0.5 H6.5 L4.2 3.5 V6.5 L2.8 5.5 V3.5 Z" fill="#c688e4" stroke="#8a4aa8" stroke-width="0.6"/></svg>
<div class="r" style="left:647px;top:672px;width:1px;height:17px;border-left:1px dotted #aaa"></div>
<div class="r" style="left:653.75px;top:672.3px;width:94px;height:17.7px;background:#e6e6e6;box-sizing:border-box;border:1px solid #d4d4d4;"></div>
<div class="t" style="left:656px;top:675px;font-size:8.6px;color:#333;font-weight:normal">По умолчанию</div>
<svg style="left:737px;top:678px" width="8" height="5" viewBox="0 0 8 5"><path d="M1 1 L4 4 L7 1" fill="none" stroke="#555" stroke-width="1"/></svg>
<div class="r" style="left:753px;top:672px;width:1px;height:17px;border-left:1px dotted #aaa"></div>
<svg style="left:760px;top:673px" width="15" height="14" viewBox="0 0 15 14"><rect x="1" y="4" width="13" height="9" rx="1.5" fill="#e4e4e4" stroke="#555" stroke-width="1"/><rect x="4.5" y="2" width="5" height="2.5" fill="#777"/><circle cx="7.5" cy="8.5" r="3" fill="#888" stroke="#333" stroke-width="0.9"/></svg>
<svg style="left:778px;top:673px" width="15" height="15" viewBox="0 0 15 15"><rect x="1" y="3" width="10" height="8" fill="#5a9ac8" stroke="#2a5a80" stroke-width="0.8"/><path d="M11 5 L14 3 V11 L11 9Z" fill="#5a9ac8" stroke="#2a5a80" stroke-width="0.6"/><circle cx="10.5" cy="12" r="2.5" fill="#e03818"/></svg>
<svg style="left:797px;top:673px" width="14" height="14" viewBox="0 0 14 14"><rect x="1" y="2" width="9" height="8" fill="#e0e0e0" stroke="#d0d0d0" stroke-width="0.8"/><rect x="5" y="6" width="8" height="7" fill="#d8d8d8" stroke="#ccc" stroke-width="0.8"/></svg>
<div class="r" style="left:816.5px;top:672px;width:1px;height:17px;background:#d4d4d4;"></div>
<svg style="left:0;top:0" width="1200" height="692" viewBox="0 0 1200 692"><defs><linearGradient id="u0" gradientUnits="userSpaceOnUse" x1="218" y1="0" x2="1134" y2="0"><stop offset="0.000" stop-color="#6a3028"/><stop offset="0.068" stop-color="#7a3a2c"/><stop offset="0.166" stop-color="#b86a58"/><stop offset="0.275" stop-color="#e8a080"/><stop offset="0.559" stop-color="#f0bb96"/><stop offset="0.745" stop-color="#eaa888"/><stop offset="0.854" stop-color="#b86850"/><stop offset="0.952" stop-color="#6a3028"/></linearGradient><linearGradient id="u1" gradientUnits="userSpaceOnUse" x1="218" y1="0" x2="1134" y2="0"><stop offset="0.000" stop-color="#5a2820"/><stop offset="0.068" stop-color="#6a3428"/><stop offset="0.166" stop-color="#a05848"/><stop offset="0.275" stop-color="#d88068"/><stop offset="0.559" stop-color="#eda082"/><stop offset="0.745" stop-color="#dc8c74"/><stop offset="0.854" stop-color="#a05848"/><stop offset="0.952" stop-color="#5a2820"/></linearGradient><linearGradient id="u2" gradientUnits="userSpaceOnUse" x1="218" y1="0" x2="1134" y2="0"><stop offset="0.000" stop-color="#4a2018"/><stop offset="0.068" stop-color="#5a2a20"/><stop offset="0.166" stop-color="#8a4a3c"/><stop offset="0.275" stop-color="#c06858"/><stop offset="0.559" stop-color="#e8876a"/><stop offset="0.745" stop-color="#c07060"/><stop offset="0.854" stop-color="#884838"/><stop offset="0.952" stop-color="#4a2018"/></linearGradient><linearGradient id="u3" gradientUnits="userSpaceOnUse" x1="218" y1="0" x2="1134" y2="0"><stop offset="0.000" stop-color="#3a1a14"/><stop offset="0.068" stop-color="#4a2018"/><stop offset="0.166" stop-color="#7a4034"/><stop offset="0.275" stop-color="#a05848"/><stop offset="0.559" stop-color="#b87058"/><stop offset="0.745" stop-color="#985848"/><stop offset="0.854" stop-color="#603028"/><stop offset="0.952" stop-color="#3a1a14"/></linearGradient><linearGradient id="u4" gradientUnits="userSpaceOnUse" x1="218" y1="0" x2="1134" y2="0"><stop offset="0.000" stop-color="#0a3a30"/><stop offset="0.144" stop-color="#0c4a3c"/><stop offset="0.253" stop-color="#0f6050"/><stop offset="0.559" stop-color="#147a68"/><stop offset="0.745" stop-color="#0e5a4c"/><stop offset="0.952" stop-color="#0a3a30"/></linearGradient><linearGradient id="u5" gradientUnits="userSpaceOnUse" x1="218" y1="0" x2="1134" y2="0"><stop offset="0.000" stop-color="#062a22"/><stop offset="0.253" stop-color="#0a4036"/><stop offset="0.559" stop-color="#0d4d40"/><stop offset="0.952" stop-color="#062a22"/></linearGradient><linearGradient id="u6" gradientUnits="userSpaceOnUse" x1="218" y1="0" x2="1134" y2="0"><stop offset="0.000" stop-color="#a8b090"/><stop offset="0.253" stop-color="#c8b890"/><stop offset="0.559" stop-color="#c4b48c"/><stop offset="0.952" stop-color="#a8b090"/></linearGradient><linearGradient id="l0" gradientUnits="userSpaceOnUse" x1="218" y1="0" x2="1134" y2="0"><stop offset="0.000" stop-color="#f0c4a0"/><stop offset="0.144" stop-color="#f2d0aa"/><stop offset="0.253" stop-color="#f3d6ae"/><stop offset="0.559" stop-color="#f3d8b0"/><stop offset="0.745" stop-color="#f0cca4"/><stop offset="0.854" stop-color="#eeb494"/><stop offset="0.952" stop-color="#e8a080"/></linearGradient><linearGradient id="l1" gradientUnits="userSpaceOnUse" x1="218" y1="0" x2="1134" y2="0"><stop offset="0.000" stop-color="#f0b898"/><stop offset="0.144" stop-color="#f2caa4"/><stop offset="0.253" stop-color="#f2d2aa"/><stop offset="0.559" stop-color="#f3d8b0"/><stop offset="0.745" stop-color="#eec49c"/><stop offset="0.854" stop-color="#eca888"/><stop offset="0.952" stop-color="#e49478"/></linearGradient><linearGradient id="l2" gradientUnits="userSpaceOnUse" x1="218" y1="0" x2="1134" y2="0"><stop offset="0.000" stop-color="#eeae90"/><stop offset="0.144" stop-color="#f0c09c"/><stop offset="0.253" stop-color="#f0cca4"/><stop offset="0.559" stop-color="#f2d6ae"/><stop offset="0.745" stop-color="#ecb894"/><stop offset="0.854" stop-color="#e89c80"/><stop offset="0.952" stop-color="#de8a70"/></linearGradient><linearGradient id="l3" gradientUnits="userSpaceOnUse" x1="218" y1="0" x2="1134" y2="0"><stop offset="0.000" stop-color="#eaa484"/><stop offset="0.144" stop-color="#eeb494"/><stop offset="0.253" stop-color="#eec29c"/><stop offset="0.559" stop-color="#f0cfa6"/><stop offset="0.745" stop-color="#e8b090"/><stop offset="0.854" stop-color="#e49478"/><stop offset="0.952" stop-color="#d88068"/></linearGradient><linearGradient id="l4" gradientUnits="userSpaceOnUse" x1="218" y1="0" x2="1134" y2="0"><stop offset="0.000" stop-color="#22c090"/><stop offset="0.253" stop-color="#2cd0a0"/><stop offset="0.559" stop-color="#2ed0a2"/><stop offset="0.799" stop-color="#28c89a"/><stop offset="0.952" stop-color="#1aa07c"/></linearGradient><linearGradient id="l5" gradientUnits="userSpaceOnUse" x1="218" y1="0" x2="1134" y2="0"><stop offset="0.000" stop-color="#1ea884"/><stop offset="0.253" stop-color="#26c89c"/><stop offset="0.559" stop-color="#28c8a0"/><stop offset="0.799" stop-color="#22b890"/><stop offset="0.952" stop-color="#189070"/></linearGradient><linearGradient id="l6" gradientUnits="userSpaceOnUse" x1="218" y1="0" x2="1134" y2="0"><stop offset="0.000" stop-color="#d09078"/><stop offset="0.559" stop-color="#d89880"/><stop offset="0.952" stop-color="#c88870"/></linearGradient><linearGradient id="seamT" gradientUnits="userSpaceOnUse" x1="218" y1="0" x2="1134" y2="0"><stop offset="0.000" stop-color="#d8b898"/><stop offset="0.122" stop-color="#c8a080"/><stop offset="0.199" stop-color="#6a3a2a"/><stop offset="0.854" stop-color="#5a3024"/><stop offset="0.908" stop-color="#c8a888"/><stop offset="0.952" stop-color="#d8b898"/></linearGradient><linearGradient id="orng" gradientUnits="userSpaceOnUse" x1="0" y1="357" x2="0" y2="378"><stop offset="0" stop-color="#f28030"/><stop offset="0.6" stop-color="#f07820"/><stop offset="1" stop-color="#e06a18"/></linearGradient></defs><path d="M218.0 357.5 L222.0 357.5 L226.0 357.5 L230.0 357.5 L234.0 357.5 L238.0 357.5 L242.0 357.5 L246.0 357.5 L250.0 357.5 L254.0 357.5 L258.0 357.5 L262.0 357.5 L266.0 357.5 L270.0 357.5 L274.0 357.5 L278.0 357.5 L282.0 357.5 L286.0 357.5 L290.0 357.5 L294.0 357.5 L298.0 357.5 L302.0 357.5 L306.0 357.5 L310.0 357.5 L314.0 357.5 L318.0 357.5 L322.0 357.5 L326.0 357.5 L330.0 357.5 L334.0 357.5 L338.0 357.5 L342.0 357.5 L346.0 357.5 L350.0 357.5 L354.0 357.5 L358.0 357.5 L362.0 357.5 L366.0 357.5 L370.0 357.5 L374.0 357.5 L378.0 357.5 L382.0 357.5 L386.0 357.5 L390.0 357.5 L394.0 357.5 L398.0 357.5 L402.0 357.5 L406.0 357.5 L410.0 357.5 L414.0 357.5 L418.0 357.5 L422.0 357.5 L426.0 357.5 L430.0 357.5 L434.0 357.5 L438.0 357.5 L442.0 357.5 L446.0 357.5 L450.0 357.5 L454.0 357.5 L458.0 357.5 L462.0 357.5 L466.0 357.5 L470.0 357.5 L474.0 357.5 L478.0 357.5 L482.0 357.5 L486.0 357.5 L490.0 357.5 L494.0 357.5 L498.0 357.5 L502.0 357.5 L506.0 357.5 L510.0 357.5 L514.0 357.5 L518.0 357.5 L522.0 357.5 L526.0 357.5 L530.0 357.5 L534.0 357.5 L538.0 357.5 L542.0 357.5 L546.0 357.5 L550.0 357.5 L554.0 357.5 L558.0 357.5 L562.0 357.5 L566.0 357.5 L570.0 357.5 L574.0 357.5 L578.0 357.5 L582.0 357.5 L586.0 357.5 L590.0 357.5 L594.0 357.5 L598.0 357.5 L602.0 357.5 L606.0 357.5 L610.0 357.5 L614.0 357.5 L618.0 357.5 L622.0 357.5 L626.0 357.5 L630.0 357.5 L634.0 357.5 L638.0 357.5 L642.0 357.5 L646.0 357.5 L650.0 357.5 L654.0 357.5 L658.0 357.5 L662.0 357.5 L666.0 357.5 L670.0 357.5 L674.0 357.5 L678.0 357.5 L682.0 357.5 L686.0 357.5 L690.0 357.5 L694.0 357.5 L698.0 357.5 L702.0 357.5 L706.0 357.5 L710.0 357.5 L714.0 357.5 L718.0 357.5 L722.0 357.5 L726.0 357.5 L730.0 357.5 L734.0 357.5 L738.0 357.5 L742.0 357.5 L746.0 357.5 L750.0 357.5 L754.0 357.5 L758.0 357.5 L762.0 357.5 L766.0 357.5 L770.0 357.5 L774.0 357.5 L778.0 357.5 L782.0 357.5 L786.0 357.5 L790.0 357.5 L794.0 357.5 L798.0 357.5 L802.0 357.5 L806.0 357.5 L810.0 357.5 L814.0 357.5 L818.0 357.5 L822.0 357.5 L826.0 357.5 L830.0 357.5 L834.0 357.5 L838.0 357.5 L842.0 357.5 L846.0 357.5 L850.0 357.5 L854.0 357.5 L858.0 357.5 L862.0 357.5 L866.0 357.5 L870.0 357.5 L874.0 357.5 L878.0 357.5 L882.0 357.5 L886.0 357.5 L890.0 357.5 L894.0 357.5 L898.0 357.5 L902.0 357.5 L906.0 357.5 L910.0 357.5 L914.0 357.5 L918.0 357.5 L922.0 357.5 L926.0 357.5 L930.0 357.5 L934.0 357.5 L938.0 357.5 L942.0 357.5 L946.0 357.5 L950.0 357.5 L954.0 357.5 L958.0 357.5 L962.0 357.5 L966.0 357.5 L970.0 357.5 L974.0 357.5 L978.0 357.5 L982.0 357.5 L986.0 357.5 L990.0 357.5 L994.0 357.5 L998.0 357.5 L1002.0 357.5 L1006.0 357.5 L1010.0 357.5 L1014.0 357.5 L1018.0 357.5 L1022.0 357.5 L1026.0 357.5 L1030.0 357.5 L1034.0 357.5 L1038.0 357.5 L1042.0 357.5 L1046.0 357.5 L1050.0 357.5 L1054.0 357.5 L1058.0 357.5 L1062.0 357.5 L1066.0 357.5 L1070.0 357.5 L1074.0 357.5 L1078.0 357.5 L1082.0 357.5 L1086.0 357.5 L1090.0 357.5 L1094.0 357.5 L1098.0 357.5 L1102.0 357.5 L1106.0 357.5 L1110.0 357.5 L1114.0 358.1 L1118.0 359.2 L1122.0 360.3 L1126.0 361.4 L1130.0 362.5 L1134.0 363.6 L1134.5 363.7 L1134.5 363.0 L1134.0 362.8 L1130.0 361.5 L1126.0 360.2 L1122.0 358.9 L1118.0 357.6 L1114.0 356.4 L1110.0 355.5 L1106.0 355.1 L1102.0 354.7 L1098.0 354.3 L1094.0 353.9 L1090.0 353.5 L1086.0 353.2 L1082.0 352.9 L1078.0 352.5 L1074.0 352.1 L1070.0 351.8 L1066.0 351.4 L1062.0 351.0 L1058.0 350.7 L1054.0 350.4 L1050.0 350.0 L1046.0 349.7 L1042.0 349.4 L1038.0 349.1 L1034.0 348.8 L1030.0 348.5 L1026.0 348.2 L1022.0 347.9 L1018.0 347.6 L1014.0 347.3 L1010.0 347.0 L1006.0 346.8 L1002.0 346.5 L998.0 346.2 L994.0 346.0 L990.0 345.7 L986.0 345.5 L982.0 345.2 L978.0 345.0 L974.0 344.8 L970.0 344.6 L966.0 344.4 L962.0 344.2 L958.0 344.0 L954.0 343.8 L950.0 343.6 L946.0 343.4 L942.0 343.2 L938.0 343.0 L934.0 342.8 L930.0 342.6 L926.0 342.4 L922.0 342.2 L918.0 342.1 L914.0 341.9 L910.0 341.7 L906.0 341.5 L902.0 341.4 L898.0 341.2 L894.0 341.1 L890.0 341.0 L886.0 340.8 L882.0 340.7 L878.0 340.5 L874.0 340.4 L870.0 340.2 L866.0 340.1 L862.0 339.9 L858.0 339.8 L854.0 339.7 L850.0 339.5 L846.0 339.4 L842.0 339.3 L838.0 339.1 L834.0 339.0 L830.0 338.9 L826.0 338.8 L822.0 338.7 L818.0 338.6 L814.0 338.5 L810.0 338.5 L806.0 338.4 L802.0 338.3 L798.0 338.2 L794.0 338.2 L790.0 338.1 L786.0 338.1 L782.0 338.0 L778.0 338.0 L774.0 337.9 L770.0 337.9 L766.0 337.9 L762.0 337.8 L758.0 337.8 L754.0 337.7 L750.0 337.7 L746.0 337.7 L742.0 337.7 L738.0 337.6 L734.0 337.6 L730.0 337.6 L726.0 337.6 L722.0 337.6 L718.0 337.5 L714.0 337.5 L710.0 337.5 L706.0 337.5 L702.0 337.5 L698.0 337.5 L694.0 337.5 L690.0 337.5 L686.0 337.5 L682.0 337.5 L678.0 337.5 L674.0 337.5 L670.0 337.5 L666.0 337.5 L662.0 337.5 L658.0 337.5 L654.0 337.5 L650.0 337.5 L646.0 337.5 L642.0 337.6 L638.0 337.6 L634.0 337.6 L630.0 337.6 L626.0 337.6 L622.0 337.6 L618.0 337.7 L614.0 337.7 L610.0 337.7 L606.0 337.7 L602.0 337.8 L598.0 337.8 L594.0 337.8 L590.0 337.9 L586.0 337.9 L582.0 337.9 L578.0 338.0 L574.0 338.0 L570.0 338.1 L566.0 338.1 L562.0 338.2 L558.0 338.2 L554.0 338.3 L550.0 338.3 L546.0 338.4 L542.0 338.4 L538.0 338.5 L534.0 338.5 L530.0 338.6 L526.0 338.7 L522.0 338.8 L518.0 338.8 L514.0 338.9 L510.0 339.0 L506.0 339.1 L502.0 339.2 L498.0 339.2 L494.0 339.3 L490.0 339.4 L486.0 339.5 L482.0 339.6 L478.0 339.7 L474.0 339.8 L470.0 339.9 L466.0 340.0 L462.0 340.1 L458.0 340.2 L454.0 340.4 L450.0 340.5 L446.0 340.6 L442.0 340.7 L438.0 340.8 L434.0 341.0 L430.0 341.1 L426.0 341.2 L422.0 341.4 L418.0 341.5 L414.0 341.6 L410.0 341.8 L406.0 341.9 L402.0 342.1 L398.0 342.2 L394.0 342.4 L390.0 342.5 L386.0 342.7 L382.0 342.8 L378.0 343.0 L374.0 343.2 L370.0 343.3 L366.0 343.5 L362.0 343.7 L358.0 343.9 L354.0 344.1 L350.0 344.3 L346.0 344.5 L342.0 344.7 L338.0 344.9 L334.0 345.2 L330.0 345.4 L326.0 345.6 L322.0 345.9 L318.0 346.1 L314.0 346.4 L310.0 346.6 L306.0 346.9 L302.0 347.1 L298.0 347.4 L294.0 347.6 L290.0 347.9 L286.0 348.2 L282.0 348.4 L278.0 348.7 L274.0 348.9 L270.0 349.2 L266.0 349.4 L262.0 349.7 L258.0 349.9 L254.0 350.2 L250.0 350.4 L246.0 350.7 L242.0 350.9 L238.0 351.2 L234.0 351.4 L230.0 351.7 L226.0 352.0 L222.0 352.2 L218.0 352.4Z" fill="url(#u0)"/><path d="M218.0 377.3 L222.0 377.3 L226.0 377.3 L230.0 377.3 L234.0 377.3 L238.0 377.3 L242.0 377.3 L246.0 377.3 L250.0 377.3 L254.0 377.3 L258.0 377.3 L262.0 377.3 L266.0 377.3 L270.0 377.3 L274.0 377.3 L278.0 377.3 L282.0 377.3 L286.0 377.3 L290.0 377.3 L294.0 377.3 L298.0 377.3 L302.0 377.3 L306.0 377.3 L310.0 377.3 L314.0 377.3 L318.0 377.3 L322.0 377.3 L326.0 377.3 L330.0 377.3 L334.0 377.3 L338.0 377.3 L342.0 377.3 L346.0 377.3 L350.0 377.3 L354.0 377.3 L358.0 377.3 L362.0 377.3 L366.0 377.3 L370.0 377.3 L374.0 377.3 L378.0 377.3 L382.0 377.3 L386.0 377.3 L390.0 377.3 L394.0 377.3 L398.0 377.3 L402.0 377.3 L406.0 377.3 L410.0 377.3 L414.0 377.3 L418.0 377.3 L422.0 377.3 L426.0 377.3 L430.0 377.3 L434.0 377.3 L438.0 377.3 L442.0 377.3 L446.0 377.3 L450.0 377.3 L454.0 377.3 L458.0 377.3 L462.0 377.3 L466.0 377.3 L470.0 377.3 L474.0 377.3 L478.0 377.3 L482.0 377.3 L486.0 377.3 L490.0 377.3 L494.0 377.3 L498.0 377.3 L502.0 377.3 L506.0 377.3 L510.0 377.3 L514.0 377.3 L518.0 377.3 L522.0 377.3 L526.0 377.3 L530.0 377.3 L534.0 377.3 L538.0 377.3 L542.0 377.3 L546.0 377.3 L550.0 377.3 L554.0 377.3 L558.0 377.3 L562.0 377.3 L566.0 377.3 L570.0 377.3 L574.0 377.3 L578.0 377.3 L582.0 377.3 L586.0 377.3 L590.0 377.3 L594.0 377.3 L598.0 377.3 L602.0 377.3 L606.0 377.3 L610.0 377.3 L614.0 377.3 L618.0 377.3 L622.0 377.3 L626.0 377.3 L630.0 377.3 L634.0 377.3 L638.0 377.3 L642.0 377.3 L646.0 377.3 L650.0 377.3 L654.0 377.3 L658.0 377.3 L662.0 377.3 L666.0 377.3 L670.0 377.3 L674.0 377.3 L678.0 377.3 L682.0 377.3 L686.0 377.3 L690.0 377.3 L694.0 377.3 L698.0 377.3 L702.0 377.3 L706.0 377.3 L710.0 377.3 L714.0 377.3 L718.0 377.3 L722.0 377.3 L726.0 377.3 L730.0 377.3 L734.0 377.3 L738.0 377.3 L742.0 377.3 L746.0 377.3 L750.0 377.3 L754.0 377.3 L758.0 377.3 L762.0 377.3 L766.0 377.3 L770.0 377.3 L774.0 377.3 L778.0 377.3 L782.0 377.3 L786.0 377.3 L790.0 377.3 L794.0 377.3 L798.0 377.3 L802.0 377.3 L806.0 377.3 L810.0 377.3 L814.0 377.3 L818.0 377.3 L822.0 377.3 L826.0 377.3 L830.0 377.3 L834.0 377.3 L838.0 377.3 L842.0 377.3 L846.0 377.3 L850.0 377.3 L854.0 377.3 L858.0 377.3 L862.0 377.3 L866.0 377.3 L870.0 377.3 L874.0 377.3 L878.0 377.3 L882.0 377.3 L886.0 377.3 L890.0 377.3 L894.0 377.3 L898.0 377.3 L902.0 377.3 L906.0 377.3 L910.0 377.3 L914.0 377.3 L918.0 377.3 L922.0 377.3 L926.0 377.3 L930.0 377.3 L934.0 377.3 L938.0 377.3 L942.0 377.3 L946.0 377.3 L950.0 377.3 L954.0 377.3 L958.0 377.3 L962.0 377.3 L966.0 377.3 L970.0 377.3 L974.0 377.3 L978.0 377.3 L982.0 377.3 L986.0 377.3 L990.0 377.3 L994.0 377.3 L998.0 377.3 L1002.0 377.3 L1006.0 377.3 L1010.0 377.3 L1014.0 377.3 L1018.0 377.3 L1022.0 377.3 L1026.0 377.3 L1030.0 377.3 L1034.0 377.3 L1038.0 377.3 L1042.0 377.3 L1046.0 377.3 L1050.0 377.3 L1054.0 377.3 L1058.0 377.3 L1062.0 377.3 L1066.0 377.3 L1070.0 377.3 L1074.0 377.3 L1078.0 377.3 L1082.0 377.3 L1086.0 377.3 L1090.0 377.3 L1094.0 377.3 L1098.0 377.3 L1102.0 377.3 L1106.0 376.5 L1110.0 375.7 L1114.0 374.9 L1118.0 374.1 L1122.0 373.3 L1126.0 372.5 L1130.0 371.7 L1134.0 370.8 L1134.5 370.7 L1134.5 371.1 L1134.0 371.2 L1130.0 372.1 L1126.0 373.0 L1122.0 373.8 L1118.0 374.7 L1114.0 375.6 L1110.0 376.5 L1106.0 377.4 L1102.0 378.3 L1098.0 378.6 L1094.0 378.9 L1090.0 379.2 L1086.0 379.5 L1082.0 379.8 L1078.0 380.3 L1074.0 380.7 L1070.0 381.1 L1066.0 381.5 L1062.0 381.9 L1058.0 382.3 L1054.0 382.6 L1050.0 383.0 L1046.0 383.4 L1042.0 383.7 L1038.0 384.1 L1034.0 384.5 L1030.0 384.8 L1026.0 385.2 L1022.0 385.5 L1018.0 385.8 L1014.0 386.2 L1010.0 386.5 L1006.0 386.8 L1002.0 387.1 L998.0 387.3 L994.0 387.6 L990.0 387.8 L986.0 388.1 L982.0 388.3 L978.0 388.5 L974.0 388.7 L970.0 389.0 L966.0 389.2 L962.0 389.4 L958.0 389.7 L954.0 389.9 L950.0 390.1 L946.0 390.4 L942.0 390.6 L938.0 390.8 L934.0 391.1 L930.0 391.3 L926.0 391.5 L922.0 391.7 L918.0 391.9 L914.0 392.1 L910.0 392.3 L906.0 392.5 L902.0 392.7 L898.0 392.9 L894.0 393.1 L890.0 393.3 L886.0 393.4 L882.0 393.6 L878.0 393.8 L874.0 394.0 L870.0 394.2 L866.0 394.4 L862.0 394.5 L858.0 394.7 L854.0 394.9 L850.0 395.0 L846.0 395.2 L842.0 395.3 L838.0 395.4 L834.0 395.6 L830.0 395.7 L826.0 395.8 L822.0 395.9 L818.0 396.0 L814.0 396.1 L810.0 396.1 L806.0 396.2 L802.0 396.3 L798.0 396.4 L794.0 396.4 L790.0 396.5 L786.0 396.5 L782.0 396.6 L778.0 396.7 L774.0 396.7 L770.0 396.8 L766.0 396.8 L762.0 396.9 L758.0 396.9 L754.0 396.9 L750.0 397.0 L746.0 397.0 L742.0 397.0 L738.0 397.1 L734.0 397.1 L730.0 397.1 L726.0 397.1 L722.0 397.1 L718.0 397.1 L714.0 397.2 L710.0 397.2 L706.0 397.2 L702.0 397.2 L698.0 397.2 L694.0 397.2 L690.0 397.2 L686.0 397.2 L682.0 397.2 L678.0 397.2 L674.0 397.2 L670.0 397.2 L666.0 397.2 L662.0 397.2 L658.0 397.2 L654.0 397.2 L650.0 397.2 L646.0 397.2 L642.0 397.1 L638.0 397.1 L634.0 397.1 L630.0 397.1 L626.0 397.0 L622.0 397.0 L618.0 397.0 L614.0 396.9 L610.0 396.9 L606.0 396.8 L602.0 396.8 L598.0 396.7 L594.0 396.7 L590.0 396.6 L586.0 396.6 L582.0 396.5 L578.0 396.5 L574.0 396.4 L570.0 396.3 L566.0 396.3 L562.0 396.2 L558.0 396.1 L554.0 396.1 L550.0 396.0 L546.0 395.9 L542.0 395.9 L538.0 395.8 L534.0 395.7 L530.0 395.6 L526.0 395.6 L522.0 395.5 L518.0 395.4 L514.0 395.3 L510.0 395.2 L506.0 395.1 L502.0 395.0 L498.0 394.9 L494.0 394.8 L490.0 394.7 L486.0 394.6 L482.0 394.5 L478.0 394.4 L474.0 394.2 L470.0 394.1 L466.0 394.0 L462.0 393.8 L458.0 393.7 L454.0 393.5 L450.0 393.4 L446.0 393.2 L442.0 393.1 L438.0 392.9 L434.0 392.8 L430.0 392.6 L426.0 392.5 L422.0 392.3 L418.0 392.2 L414.0 392.0 L410.0 391.8 L406.0 391.7 L402.0 391.5 L398.0 391.4 L394.0 391.2 L390.0 391.0 L386.0 390.9 L382.0 390.7 L378.0 390.5 L374.0 390.3 L370.0 390.2 L366.0 390.0 L362.0 389.8 L358.0 389.6 L354.0 389.5 L350.0 389.3 L346.0 389.1 L342.0 388.9 L338.0 388.7 L334.0 388.5 L330.0 388.4 L326.0 388.2 L322.0 388.0 L318.0 387.8 L314.0 387.6 L310.0 387.4 L306.0 387.2 L302.0 387.0 L298.0 386.8 L294.0 386.6 L290.0 386.4 L286.0 386.2 L282.0 385.9 L278.0 385.7 L274.0 385.4 L270.0 385.2 L266.0 384.9 L262.0 384.6 L258.0 384.4 L254.0 384.1 L250.0 383.8 L246.0 383.5 L242.0 383.2 L238.0 382.9 L234.0 382.6 L230.0 382.3 L226.0 382.0 L222.0 381.7 L218.0 381.5Z" fill="url(#l0)"/><path d="M218.0 352.4 L222.0 352.2 L226.0 352.0 L230.0 351.7 L234.0 351.4 L238.0 351.2 L242.0 350.9 L246.0 350.7 L250.0 350.4 L254.0 350.2 L258.0 349.9 L262.0 349.7 L266.0 349.4 L270.0 349.2 L274.0 348.9 L278.0 348.7 L282.0 348.4 L286.0 348.2 L290.0 347.9 L294.0 347.6 L298.0 347.4 L302.0 347.1 L306.0 346.9 L310.0 346.6 L314.0 346.4 L318.0 346.1 L322.0 345.9 L326.0 345.6 L330.0 345.4 L334.0 345.2 L338.0 344.9 L342.0 344.7 L346.0 344.5 L350.0 344.3 L354.0 344.1 L358.0 343.9 L362.0 343.7 L366.0 343.5 L370.0 343.3 L374.0 343.2 L378.0 343.0 L382.0 342.8 L386.0 342.7 L390.0 342.5 L394.0 342.4 L398.0 342.2 L402.0 342.1 L406.0 341.9 L410.0 341.8 L414.0 341.6 L418.0 341.5 L422.0 341.4 L426.0 341.2 L430.0 341.1 L434.0 341.0 L438.0 340.8 L442.0 340.7 L446.0 340.6 L450.0 340.5 L454.0 340.4 L458.0 340.2 L462.0 340.1 L466.0 340.0 L470.0 339.9 L474.0 339.8 L478.0 339.7 L482.0 339.6 L486.0 339.5 L490.0 339.4 L494.0 339.3 L498.0 339.2 L502.0 339.2 L506.0 339.1 L510.0 339.0 L514.0 338.9 L518.0 338.8 L522.0 338.8 L526.0 338.7 L530.0 338.6 L534.0 338.5 L538.0 338.5 L542.0 338.4 L546.0 338.4 L550.0 338.3 L554.0 338.3 L558.0 338.2 L562.0 338.2 L566.0 338.1 L570.0 338.1 L574.0 338.0 L578.0 338.0 L582.0 337.9 L586.0 337.9 L590.0 337.9 L594.0 337.8 L598.0 337.8 L602.0 337.8 L606.0 337.7 L610.0 337.7 L614.0 337.7 L618.0 337.7 L622.0 337.6 L626.0 337.6 L630.0 337.6 L634.0 337.6 L638.0 337.6 L642.0 337.6 L646.0 337.5 L650.0 337.5 L654.0 337.5 L658.0 337.5 L662.0 337.5 L666.0 337.5 L670.0 337.5 L674.0 337.5 L678.0 337.5 L682.0 337.5 L686.0 337.5 L690.0 337.5 L694.0 337.5 L698.0 337.5 L702.0 337.5 L706.0 337.5 L710.0 337.5 L714.0 337.5 L718.0 337.5 L722.0 337.6 L726.0 337.6 L730.0 337.6 L734.0 337.6 L738.0 337.6 L742.0 337.7 L746.0 337.7 L750.0 337.7 L754.0 337.7 L758.0 337.8 L762.0 337.8 L766.0 337.9 L770.0 337.9 L774.0 337.9 L778.0 338.0 L782.0 338.0 L786.0 338.1 L790.0 338.1 L794.0 338.2 L798.0 338.2 L802.0 338.3 L806.0 338.4 L810.0 338.5 L814.0 338.5 L818.0 338.6 L822.0 338.7 L826.0 338.8 L830.0 338.9 L834.0 339.0 L838.0 339.1 L842.0 339.3 L846.0 339.4 L850.0 339.5 L854.0 339.7 L858.0 339.8 L862.0 339.9 L866.0 340.1 L870.0 340.2 L874.0 340.4 L878.0 340.5 L882.0 340.7 L886.0 340.8 L890.0 341.0 L894.0 341.1 L898.0 341.2 L902.0 341.4 L906.0 341.5 L910.0 341.7 L914.0 341.9 L918.0 342.1 L922.0 342.2 L926.0 342.4 L930.0 342.6 L934.0 342.8 L938.0 343.0 L942.0 343.2 L946.0 343.4 L950.0 343.6 L954.0 343.8 L958.0 344.0 L962.0 344.2 L966.0 344.4 L970.0 344.6 L974.0 344.8 L978.0 345.0 L982.0 345.2 L986.0 345.5 L990.0 345.7 L994.0 346.0 L998.0 346.2 L1002.0 346.5 L1006.0 346.8 L1010.0 347.0 L1014.0 347.3 L1018.0 347.6 L1022.0 347.9 L1026.0 348.2 L1030.0 348.5 L1034.0 348.8 L1038.0 349.1 L1042.0 349.4 L1046.0 349.7 L1050.0 350.0 L1054.0 350.4 L1058.0 350.7 L1062.0 351.0 L1066.0 351.4 L1070.0 351.8 L1074.0 352.1 L1078.0 352.5 L1082.0 352.9 L1086.0 353.2 L1090.0 353.5 L1094.0 353.9 L1098.0 354.3 L1102.0 354.7 L1106.0 355.1 L1110.0 355.5 L1114.0 356.4 L1118.0 357.6 L1122.0 358.9 L1126.0 360.2 L1130.0 361.5 L1134.0 362.8 L1134.5 363.0 L1134.5 362.3 L1134.0 362.1 L1130.0 360.6 L1126.0 359.2 L1122.0 357.7 L1118.0 356.3 L1114.0 354.9 L1110.0 353.8 L1106.0 353.0 L1102.0 352.2 L1098.0 351.5 L1094.0 350.8 L1090.0 350.1 L1086.0 349.5 L1082.0 348.9 L1078.0 348.2 L1074.0 347.5 L1070.0 346.8 L1066.0 346.1 L1062.0 345.5 L1058.0 344.8 L1054.0 344.2 L1050.0 343.6 L1046.0 343.0 L1042.0 342.4 L1038.0 341.8 L1034.0 341.2 L1030.0 340.7 L1026.0 340.1 L1022.0 339.6 L1018.0 339.0 L1014.0 338.5 L1010.0 338.0 L1006.0 337.5 L1002.0 337.0 L998.0 336.5 L994.0 336.0 L990.0 335.5 L986.0 335.1 L982.0 334.6 L978.0 334.2 L974.0 333.8 L970.0 333.4 L966.0 333.0 L962.0 332.6 L958.0 332.2 L954.0 331.9 L950.0 331.5 L946.0 331.1 L942.0 330.8 L938.0 330.4 L934.0 330.1 L930.0 329.7 L926.0 329.4 L922.0 329.0 L918.0 328.7 L914.0 328.3 L910.0 328.0 L906.0 327.7 L902.0 327.4 L898.0 327.2 L894.0 326.9 L890.0 326.6 L886.0 326.4 L882.0 326.1 L878.0 325.8 L874.0 325.6 L870.0 325.3 L866.0 325.0 L862.0 324.7 L858.0 324.5 L854.0 324.2 L850.0 324.0 L846.0 323.7 L842.0 323.5 L838.0 323.3 L834.0 323.0 L830.0 322.8 L826.0 322.6 L822.0 322.4 L818.0 322.3 L814.0 322.1 L810.0 322.0 L806.0 321.8 L802.0 321.7 L798.0 321.6 L794.0 321.5 L790.0 321.3 L786.0 321.2 L782.0 321.2 L778.0 321.1 L774.0 321.0 L770.0 320.9 L766.0 320.8 L762.0 320.8 L758.0 320.7 L754.0 320.6 L750.0 320.6 L746.0 320.5 L742.0 320.5 L738.0 320.4 L734.0 320.4 L730.0 320.3 L726.0 320.3 L722.0 320.3 L718.0 320.3 L714.0 320.2 L710.0 320.2 L706.0 320.2 L702.0 320.2 L698.0 320.2 L694.0 320.2 L690.0 320.2 L686.0 320.2 L682.0 320.2 L678.0 320.2 L674.0 320.2 L670.0 320.2 L666.0 320.2 L662.0 320.2 L658.0 320.2 L654.0 320.2 L650.0 320.2 L646.0 320.3 L642.0 320.3 L638.0 320.3 L634.0 320.3 L630.0 320.4 L626.0 320.4 L622.0 320.4 L618.0 320.5 L614.0 320.5 L610.0 320.6 L606.0 320.6 L602.0 320.7 L598.0 320.7 L594.0 320.8 L590.0 320.9 L586.0 320.9 L582.0 321.0 L578.0 321.1 L574.0 321.1 L570.0 321.2 L566.0 321.3 L562.0 321.4 L558.0 321.5 L554.0 321.6 L550.0 321.7 L546.0 321.8 L542.0 321.9 L538.0 322.0 L534.0 322.1 L530.0 322.3 L526.0 322.4 L522.0 322.5 L518.0 322.7 L514.0 322.8 L510.0 323.0 L506.0 323.1 L502.0 323.3 L498.0 323.4 L494.0 323.6 L490.0 323.8 L486.0 323.9 L482.0 324.1 L478.0 324.3 L474.0 324.5 L470.0 324.7 L466.0 324.9 L462.0 325.1 L458.0 325.3 L454.0 325.5 L450.0 325.7 L446.0 325.9 L442.0 326.2 L438.0 326.4 L434.0 326.6 L430.0 326.9 L426.0 327.1 L422.0 327.4 L418.0 327.6 L414.0 327.9 L410.0 328.1 L406.0 328.4 L402.0 328.7 L398.0 329.0 L394.0 329.2 L390.0 329.5 L386.0 329.8 L382.0 330.1 L378.0 330.4 L374.0 330.7 L370.0 331.1 L366.0 331.4 L362.0 331.7 L358.0 332.1 L354.0 332.5 L350.0 332.9 L346.0 333.2 L342.0 333.6 L338.0 334.0 L334.0 334.5 L330.0 334.9 L326.0 335.4 L322.0 335.8 L318.0 336.3 L314.0 336.7 L310.0 337.2 L306.0 337.7 L302.0 338.2 L298.0 338.6 L294.0 339.1 L290.0 339.6 L286.0 340.1 L282.0 340.5 L278.0 341.0 L274.0 341.5 L270.0 341.9 L266.0 342.4 L262.0 342.9 L258.0 343.3 L254.0 343.8 L250.0 344.3 L246.0 344.8 L242.0 345.2 L238.0 345.7 L234.0 346.2 L230.0 346.7 L226.0 347.2 L222.0 347.6 L218.0 348.1Z" fill="url(#u1)"/><path d="M218.0 381.5 L222.0 381.7 L226.0 382.0 L230.0 382.3 L234.0 382.6 L238.0 382.9 L242.0 383.2 L246.0 383.5 L250.0 383.8 L254.0 384.1 L258.0 384.4 L262.0 384.6 L266.0 384.9 L270.0 385.2 L274.0 385.4 L278.0 385.7 L282.0 385.9 L286.0 386.2 L290.0 386.4 L294.0 386.6 L298.0 386.8 L302.0 387.0 L306.0 387.2 L310.0 387.4 L314.0 387.6 L318.0 387.8 L322.0 388.0 L326.0 388.2 L330.0 388.4 L334.0 388.5 L338.0 388.7 L342.0 388.9 L346.0 389.1 L350.0 389.3 L354.0 389.5 L358.0 389.6 L362.0 389.8 L366.0 390.0 L370.0 390.2 L374.0 390.3 L378.0 390.5 L382.0 390.7 L386.0 390.9 L390.0 391.0 L394.0 391.2 L398.0 391.4 L402.0 391.5 L406.0 391.7 L410.0 391.8 L414.0 392.0 L418.0 392.2 L422.0 392.3 L426.0 392.5 L430.0 392.6 L434.0 392.8 L438.0 392.9 L442.0 393.1 L446.0 393.2 L450.0 393.4 L454.0 393.5 L458.0 393.7 L462.0 393.8 L466.0 394.0 L470.0 394.1 L474.0 394.2 L478.0 394.4 L482.0 394.5 L486.0 394.6 L490.0 394.7 L494.0 394.8 L498.0 394.9 L502.0 395.0 L506.0 395.1 L510.0 395.2 L514.0 395.3 L518.0 395.4 L522.0 395.5 L526.0 395.6 L530.0 395.6 L534.0 395.7 L538.0 395.8 L542.0 395.9 L546.0 395.9 L550.0 396.0 L554.0 396.1 L558.0 396.1 L562.0 396.2 L566.0 396.3 L570.0 396.3 L574.0 396.4 L578.0 396.5 L582.0 396.5 L586.0 396.6 L590.0 396.6 L594.0 396.7 L598.0 396.7 L602.0 396.8 L606.0 396.8 L610.0 396.9 L614.0 396.9 L618.0 397.0 L622.0 397.0 L626.0 397.0 L630.0 397.1 L634.0 397.1 L638.0 397.1 L642.0 397.1 L646.0 397.2 L650.0 397.2 L654.0 397.2 L658.0 397.2 L662.0 397.2 L666.0 397.2 L670.0 397.2 L674.0 397.2 L678.0 397.2 L682.0 397.2 L686.0 397.2 L690.0 397.2 L694.0 397.2 L698.0 397.2 L702.0 397.2 L706.0 397.2 L710.0 397.2 L714.0 397.2 L718.0 397.1 L722.0 397.1 L726.0 397.1 L730.0 397.1 L734.0 397.1 L738.0 397.1 L742.0 397.0 L746.0 397.0 L750.0 397.0 L754.0 396.9 L758.0 396.9 L762.0 396.9 L766.0 396.8 L770.0 396.8 L774.0 396.7 L778.0 396.7 L782.0 396.6 L786.0 396.5 L790.0 396.5 L794.0 396.4 L798.0 396.4 L802.0 396.3 L806.0 396.2 L810.0 396.1 L814.0 396.1 L818.0 396.0 L822.0 395.9 L826.0 395.8 L830.0 395.7 L834.0 395.6 L838.0 395.4 L842.0 395.3 L846.0 395.2 L850.0 395.0 L854.0 394.9 L858.0 394.7 L862.0 394.5 L866.0 394.4 L870.0 394.2 L874.0 394.0 L878.0 393.8 L882.0 393.6 L886.0 393.4 L890.0 393.3 L894.0 393.1 L898.0 392.9 L902.0 392.7 L906.0 392.5 L910.0 392.3 L914.0 392.1 L918.0 391.9 L922.0 391.7 L926.0 391.5 L930.0 391.3 L934.0 391.1 L938.0 390.8 L942.0 390.6 L946.0 390.4 L950.0 390.1 L954.0 389.9 L958.0 389.7 L962.0 389.4 L966.0 389.2 L970.0 389.0 L974.0 388.7 L978.0 388.5 L982.0 388.3 L986.0 388.1 L990.0 387.8 L994.0 387.6 L998.0 387.3 L1002.0 387.1 L1006.0 386.8 L1010.0 386.5 L1014.0 386.2 L1018.0 385.8 L1022.0 385.5 L1026.0 385.2 L1030.0 384.8 L1034.0 384.5 L1038.0 384.1 L1042.0 383.7 L1046.0 383.4 L1050.0 383.0 L1054.0 382.6 L1058.0 382.3 L1062.0 381.9 L1066.0 381.5 L1070.0 381.1 L1074.0 380.7 L1078.0 380.3 L1082.0 379.8 L1086.0 379.5 L1090.0 379.2 L1094.0 378.9 L1098.0 378.6 L1102.0 378.3 L1106.0 377.4 L1110.0 376.5 L1114.0 375.6 L1118.0 374.7 L1122.0 373.8 L1126.0 373.0 L1130.0 372.1 L1134.0 371.2 L1134.5 371.1 L1134.5 371.3 L1134.0 371.5 L1130.0 372.4 L1126.0 373.4 L1122.0 374.3 L1118.0 375.3 L1114.0 376.2 L1110.0 377.2 L1106.0 378.2 L1102.0 379.1 L1098.0 379.7 L1094.0 380.3 L1090.0 380.8 L1086.0 381.4 L1082.0 382.1 L1078.0 382.8 L1074.0 383.6 L1070.0 384.4 L1066.0 385.1 L1062.0 385.9 L1058.0 386.6 L1054.0 387.3 L1050.0 387.9 L1046.0 388.6 L1042.0 389.3 L1038.0 390.0 L1034.0 390.7 L1030.0 391.3 L1026.0 392.0 L1022.0 392.6 L1018.0 393.3 L1014.0 393.9 L1010.0 394.5 L1006.0 395.0 L1002.0 395.5 L998.0 396.0 L994.0 396.5 L990.0 397.0 L986.0 397.4 L982.0 397.8 L978.0 398.2 L974.0 398.7 L970.0 399.1 L966.0 399.5 L962.0 400.0 L958.0 400.4 L954.0 400.9 L950.0 401.3 L946.0 401.7 L942.0 402.1 L938.0 402.6 L934.0 403.0 L930.0 403.4 L926.0 403.8 L922.0 404.3 L918.0 404.6 L914.0 405.0 L910.0 405.3 L906.0 405.7 L902.0 406.0 L898.0 406.4 L894.0 406.7 L890.0 407.1 L886.0 407.5 L882.0 407.8 L878.0 408.2 L874.0 408.5 L870.0 408.9 L866.0 409.2 L862.0 409.5 L858.0 409.8 L854.0 410.1 L850.0 410.4 L846.0 410.7 L842.0 411.0 L838.0 411.2 L834.0 411.4 L830.0 411.6 L826.0 411.8 L822.0 412.0 L818.0 412.2 L814.0 412.3 L810.0 412.5 L806.0 412.6 L802.0 412.8 L798.0 412.9 L794.0 413.0 L790.0 413.1 L786.0 413.2 L782.0 413.3 L778.0 413.5 L774.0 413.6 L770.0 413.6 L766.0 413.7 L762.0 413.8 L758.0 413.9 L754.0 414.0 L750.0 414.0 L746.0 414.1 L742.0 414.1 L738.0 414.2 L734.0 414.2 L730.0 414.3 L726.0 414.3 L722.0 414.3 L718.0 414.4 L714.0 414.4 L710.0 414.4 L706.0 414.4 L702.0 414.5 L698.0 414.5 L694.0 414.5 L690.0 414.5 L686.0 414.5 L682.0 414.5 L678.0 414.5 L674.0 414.5 L670.0 414.5 L666.0 414.5 L662.0 414.5 L658.0 414.5 L654.0 414.4 L650.0 414.4 L646.0 414.4 L642.0 414.4 L638.0 414.3 L634.0 414.3 L630.0 414.2 L626.0 414.2 L622.0 414.1 L618.0 414.0 L614.0 414.0 L610.0 413.9 L606.0 413.8 L602.0 413.7 L598.0 413.6 L594.0 413.5 L590.0 413.4 L586.0 413.3 L582.0 413.2 L578.0 413.1 L574.0 413.0 L570.0 412.9 L566.0 412.7 L562.0 412.6 L558.0 412.5 L554.0 412.4 L550.0 412.2 L546.0 412.1 L542.0 412.0 L538.0 411.8 L534.0 411.7 L530.0 411.6 L526.0 411.4 L522.0 411.3 L518.0 411.1 L514.0 410.9 L510.0 410.8 L506.0 410.6 L502.0 410.4 L498.0 410.2 L494.0 410.0 L490.0 409.8 L486.0 409.6 L482.0 409.4 L478.0 409.2 L474.0 408.9 L470.0 408.7 L466.0 408.4 L462.0 408.2 L458.0 407.9 L454.0 407.6 L450.0 407.3 L446.0 407.1 L442.0 406.8 L438.0 406.5 L434.0 406.2 L430.0 405.9 L426.0 405.6 L422.0 405.3 L418.0 405.0 L414.0 404.8 L410.0 404.5 L406.0 404.2 L402.0 403.9 L398.0 403.6 L394.0 403.2 L390.0 402.9 L386.0 402.6 L382.0 402.3 L378.0 402.0 L374.0 401.7 L370.0 401.3 L366.0 401.0 L362.0 400.7 L358.0 400.3 L354.0 400.0 L350.0 399.7 L346.0 399.3 L342.0 399.0 L338.0 398.6 L334.0 398.3 L330.0 398.0 L326.0 397.6 L322.0 397.3 L318.0 396.9 L314.0 396.6 L310.0 396.2 L306.0 395.8 L302.0 395.4 L298.0 395.1 L294.0 394.7 L290.0 394.3 L286.0 393.8 L282.0 393.4 L278.0 393.0 L274.0 392.5 L270.0 392.0 L266.0 391.5 L262.0 391.0 L258.0 390.5 L254.0 390.0 L250.0 389.4 L246.0 388.9 L242.0 388.4 L238.0 387.8 L234.0 387.3 L230.0 386.7 L226.0 386.1 L222.0 385.6 L218.0 385.1Z" fill="url(#l1)"/><path d="M218.0 348.1 L222.0 347.6 L226.0 347.2 L230.0 346.7 L234.0 346.2 L238.0 345.7 L242.0 345.2 L246.0 344.8 L250.0 344.3 L254.0 343.8 L258.0 343.3 L262.0 342.9 L266.0 342.4 L270.0 341.9 L274.0 341.5 L278.0 341.0 L282.0 340.5 L286.0 340.1 L290.0 339.6 L294.0 339.1 L298.0 338.6 L302.0 338.2 L306.0 337.7 L310.0 337.2 L314.0 336.7 L318.0 336.3 L322.0 335.8 L326.0 335.4 L330.0 334.9 L334.0 334.5 L338.0 334.0 L342.0 333.6 L346.0 333.2 L350.0 332.9 L354.0 332.5 L358.0 332.1 L362.0 331.7 L366.0 331.4 L370.0 331.1 L374.0 330.7 L378.0 330.4 L382.0 330.1 L386.0 329.8 L390.0 329.5 L394.0 329.2 L398.0 329.0 L402.0 328.7 L406.0 328.4 L410.0 328.1 L414.0 327.9 L418.0 327.6 L422.0 327.4 L426.0 327.1 L430.0 326.9 L434.0 326.6 L438.0 326.4 L442.0 326.2 L446.0 325.9 L450.0 325.7 L454.0 325.5 L458.0 325.3 L462.0 325.1 L466.0 324.9 L470.0 324.7 L474.0 324.5 L478.0 324.3 L482.0 324.1 L486.0 323.9 L490.0 323.8 L494.0 323.6 L498.0 323.4 L502.0 323.3 L506.0 323.1 L510.0 323.0 L514.0 322.8 L518.0 322.7 L522.0 322.5 L526.0 322.4 L530.0 322.3 L534.0 322.1 L538.0 322.0 L542.0 321.9 L546.0 321.8 L550.0 321.7 L554.0 321.6 L558.0 321.5 L562.0 321.4 L566.0 321.3 L570.0 321.2 L574.0 321.1 L578.0 321.1 L582.0 321.0 L586.0 320.9 L590.0 320.9 L594.0 320.8 L598.0 320.7 L602.0 320.7 L606.0 320.6 L610.0 320.6 L614.0 320.5 L618.0 320.5 L622.0 320.4 L626.0 320.4 L630.0 320.4 L634.0 320.3 L638.0 320.3 L642.0 320.3 L646.0 320.3 L650.0 320.2 L654.0 320.2 L658.0 320.2 L662.0 320.2 L666.0 320.2 L670.0 320.2 L674.0 320.2 L678.0 320.2 L682.0 320.2 L686.0 320.2 L690.0 320.2 L694.0 320.2 L698.0 320.2 L702.0 320.2 L706.0 320.2 L710.0 320.2 L714.0 320.2 L718.0 320.3 L722.0 320.3 L726.0 320.3 L730.0 320.3 L734.0 320.4 L738.0 320.4 L742.0 320.5 L746.0 320.5 L750.0 320.6 L754.0 320.6 L758.0 320.7 L762.0 320.8 L766.0 320.8 L770.0 320.9 L774.0 321.0 L778.0 321.1 L782.0 321.2 L786.0 321.2 L790.0 321.3 L794.0 321.5 L798.0 321.6 L802.0 321.7 L806.0 321.8 L810.0 322.0 L814.0 322.1 L818.0 322.3 L822.0 322.4 L826.0 322.6 L830.0 322.8 L834.0 323.0 L838.0 323.3 L842.0 323.5 L846.0 323.7 L850.0 324.0 L854.0 324.2 L858.0 324.5 L862.0 324.7 L866.0 325.0 L870.0 325.3 L874.0 325.6 L878.0 325.8 L882.0 326.1 L886.0 326.4 L890.0 326.6 L894.0 326.9 L898.0 327.2 L902.0 327.4 L906.0 327.7 L910.0 328.0 L914.0 328.3 L918.0 328.7 L922.0 329.0 L926.0 329.4 L930.0 329.7 L934.0 330.1 L938.0 330.4 L942.0 330.8 L946.0 331.1 L950.0 331.5 L954.0 331.9 L958.0 332.2 L962.0 332.6 L966.0 333.0 L970.0 333.4 L974.0 333.8 L978.0 334.2 L982.0 334.6 L986.0 335.1 L990.0 335.5 L994.0 336.0 L998.0 336.5 L1002.0 337.0 L1006.0 337.5 L1010.0 338.0 L1014.0 338.5 L1018.0 339.0 L1022.0 339.6 L1026.0 340.1 L1030.0 340.7 L1034.0 341.2 L1038.0 341.8 L1042.0 342.4 L1046.0 343.0 L1050.0 343.6 L1054.0 344.2 L1058.0 344.8 L1062.0 345.5 L1066.0 346.1 L1070.0 346.8 L1074.0 347.5 L1078.0 348.2 L1082.0 348.9 L1086.0 349.5 L1090.0 350.1 L1094.0 350.8 L1098.0 351.5 L1102.0 352.2 L1106.0 353.0 L1110.0 353.8 L1114.0 354.9 L1118.0 356.3 L1122.0 357.7 L1126.0 359.2 L1130.0 360.6 L1134.0 362.1 L1134.5 362.3 L1134.5 361.7 L1134.0 361.5 L1130.0 359.8 L1126.0 358.2 L1122.0 356.6 L1118.0 355.0 L1114.0 353.5 L1110.0 352.1 L1106.0 350.9 L1102.0 349.8 L1098.0 348.8 L1094.0 347.8 L1090.0 346.8 L1086.0 345.9 L1082.0 345.0 L1078.0 344.1 L1074.0 343.0 L1070.0 342.0 L1066.0 341.1 L1062.0 340.1 L1058.0 339.2 L1054.0 338.3 L1050.0 337.4 L1046.0 336.5 L1042.0 335.7 L1038.0 334.8 L1034.0 334.0 L1030.0 333.2 L1026.0 332.4 L1022.0 331.6 L1018.0 330.8 L1014.0 330.1 L1010.0 329.3 L1006.0 328.6 L1002.0 327.8 L998.0 327.1 L994.0 326.4 L990.0 325.8 L986.0 325.1 L982.0 324.5 L978.0 323.9 L974.0 323.3 L970.0 322.7 L966.0 322.1 L962.0 321.6 L958.0 321.0 L954.0 320.5 L950.0 319.9 L946.0 319.4 L942.0 318.9 L938.0 318.4 L934.0 317.9 L930.0 317.4 L926.0 316.9 L922.0 316.4 L918.0 315.9 L914.0 315.4 L910.0 314.9 L906.0 314.5 L902.0 314.1 L898.0 313.7 L894.0 313.3 L890.0 312.9 L886.0 312.5 L882.0 312.2 L878.0 311.8 L874.0 311.4 L870.0 311.0 L866.0 310.6 L862.0 310.2 L858.0 309.8 L854.0 309.5 L850.0 309.1 L846.0 308.7 L842.0 308.4 L838.0 308.1 L834.0 307.7 L830.0 307.4 L826.0 307.1 L822.0 306.9 L818.0 306.6 L814.0 306.4 L810.0 306.2 L806.0 306.0 L802.0 305.8 L798.0 305.6 L794.0 305.4 L790.0 305.3 L786.0 305.2 L782.0 305.0 L778.0 304.9 L774.0 304.8 L770.0 304.7 L766.0 304.6 L762.0 304.5 L758.0 304.4 L754.0 304.3 L750.0 304.2 L746.0 304.1 L742.0 304.0 L738.0 304.0 L734.0 303.9 L730.0 303.8 L726.0 303.8 L722.0 303.8 L718.0 303.7 L714.0 303.7 L710.0 303.7 L706.0 303.6 L702.0 303.6 L698.0 303.6 L694.0 303.6 L690.0 303.6 L686.0 303.6 L682.0 303.6 L678.0 303.6 L674.0 303.6 L670.0 303.6 L666.0 303.6 L662.0 303.6 L658.0 303.7 L654.0 303.7 L650.0 303.7 L646.0 303.7 L642.0 303.8 L638.0 303.8 L634.0 303.8 L630.0 303.9 L626.0 303.9 L622.0 304.0 L618.0 304.0 L614.0 304.1 L610.0 304.2 L606.0 304.3 L602.0 304.3 L598.0 304.4 L594.0 304.5 L590.0 304.6 L586.0 304.7 L582.0 304.8 L578.0 304.9 L574.0 305.0 L570.0 305.1 L566.0 305.2 L562.0 305.4 L558.0 305.5 L554.0 305.6 L550.0 305.8 L546.0 305.9 L542.0 306.1 L538.0 306.3 L534.0 306.4 L530.0 306.6 L526.0 306.8 L522.0 307.0 L518.0 307.2 L514.0 307.4 L510.0 307.6 L506.0 307.8 L502.0 308.1 L498.0 308.3 L494.0 308.5 L490.0 308.8 L486.0 309.0 L482.0 309.3 L478.0 309.6 L474.0 309.8 L470.0 310.1 L466.0 310.4 L462.0 310.7 L458.0 311.0 L454.0 311.3 L450.0 311.6 L446.0 311.9 L442.0 312.3 L438.0 312.6 L434.0 312.9 L430.0 313.3 L426.0 313.6 L422.0 314.0 L418.0 314.4 L414.0 314.7 L410.0 315.1 L406.0 315.5 L402.0 315.9 L398.0 316.3 L394.0 316.7 L390.0 317.1 L386.0 317.5 L382.0 318.0 L378.0 318.4 L374.0 318.9 L370.0 319.3 L366.0 319.8 L362.0 320.3 L358.0 320.8 L354.0 321.4 L350.0 321.9 L346.0 322.5 L342.0 323.0 L338.0 323.6 L334.0 324.3 L330.0 324.9 L326.0 325.5 L322.0 326.2 L318.0 326.8 L314.0 327.5 L310.0 328.2 L306.0 328.9 L302.0 329.6 L298.0 330.3 L294.0 331.0 L290.0 331.6 L286.0 332.3 L282.0 333.0 L278.0 333.7 L274.0 334.4 L270.0 335.0 L266.0 335.7 L262.0 336.4 L258.0 337.1 L254.0 337.7 L250.0 338.4 L246.0 339.1 L242.0 339.8 L238.0 340.5 L234.0 341.2 L230.0 341.9 L226.0 342.6 L222.0 343.3 L218.0 343.9Z" fill="url(#u2)"/><path d="M218.0 385.1 L222.0 385.6 L226.0 386.1 L230.0 386.7 L234.0 387.3 L238.0 387.8 L242.0 388.4 L246.0 388.9 L250.0 389.4 L254.0 390.0 L258.0 390.5 L262.0 391.0 L266.0 391.5 L270.0 392.0 L274.0 392.5 L278.0 393.0 L282.0 393.4 L286.0 393.8 L290.0 394.3 L294.0 394.7 L298.0 395.1 L302.0 395.4 L306.0 395.8 L310.0 396.2 L314.0 396.6 L318.0 396.9 L322.0 397.3 L326.0 397.6 L330.0 398.0 L334.0 398.3 L338.0 398.6 L342.0 399.0 L346.0 399.3 L350.0 399.7 L354.0 400.0 L358.0 400.3 L362.0 400.7 L366.0 401.0 L370.0 401.3 L374.0 401.7 L378.0 402.0 L382.0 402.3 L386.0 402.6 L390.0 402.9 L394.0 403.2 L398.0 403.6 L402.0 403.9 L406.0 404.2 L410.0 404.5 L414.0 404.8 L418.0 405.0 L422.0 405.3 L426.0 405.6 L430.0 405.9 L434.0 406.2 L438.0 406.5 L442.0 406.8 L446.0 407.1 L450.0 407.3 L454.0 407.6 L458.0 407.9 L462.0 408.2 L466.0 408.4 L470.0 408.7 L474.0 408.9 L478.0 409.2 L482.0 409.4 L486.0 409.6 L490.0 409.8 L494.0 410.0 L498.0 410.2 L502.0 410.4 L506.0 410.6 L510.0 410.8 L514.0 410.9 L518.0 411.1 L522.0 411.3 L526.0 411.4 L530.0 411.6 L534.0 411.7 L538.0 411.8 L542.0 412.0 L546.0 412.1 L550.0 412.2 L554.0 412.4 L558.0 412.5 L562.0 412.6 L566.0 412.7 L570.0 412.9 L574.0 413.0 L578.0 413.1 L582.0 413.2 L586.0 413.3 L590.0 413.4 L594.0 413.5 L598.0 413.6 L602.0 413.7 L606.0 413.8 L610.0 413.9 L614.0 414.0 L618.0 414.0 L622.0 414.1 L626.0 414.2 L630.0 414.2 L634.0 414.3 L638.0 414.3 L642.0 414.4 L646.0 414.4 L650.0 414.4 L654.0 414.4 L658.0 414.5 L662.0 414.5 L666.0 414.5 L670.0 414.5 L674.0 414.5 L678.0 414.5 L682.0 414.5 L686.0 414.5 L690.0 414.5 L694.0 414.5 L698.0 414.5 L702.0 414.5 L706.0 414.4 L710.0 414.4 L714.0 414.4 L718.0 414.4 L722.0 414.3 L726.0 414.3 L730.0 414.3 L734.0 414.2 L738.0 414.2 L742.0 414.1 L746.0 414.1 L750.0 414.0 L754.0 414.0 L758.0 413.9 L762.0 413.8 L766.0 413.7 L770.0 413.6 L774.0 413.6 L778.0 413.5 L782.0 413.3 L786.0 413.2 L790.0 413.1 L794.0 413.0 L798.0 412.9 L802.0 412.8 L806.0 412.6 L810.0 412.5 L814.0 412.3 L818.0 412.2 L822.0 412.0 L826.0 411.8 L830.0 411.6 L834.0 411.4 L838.0 411.2 L842.0 411.0 L846.0 410.7 L850.0 410.4 L854.0 410.1 L858.0 409.8 L862.0 409.5 L866.0 409.2 L870.0 408.9 L874.0 408.5 L878.0 408.2 L882.0 407.8 L886.0 407.5 L890.0 407.1 L894.0 406.7 L898.0 406.4 L902.0 406.0 L906.0 405.7 L910.0 405.3 L914.0 405.0 L918.0 404.6 L922.0 404.3 L926.0 403.8 L930.0 403.4 L934.0 403.0 L938.0 402.6 L942.0 402.1 L946.0 401.7 L950.0 401.3 L954.0 400.9 L958.0 400.4 L962.0 400.0 L966.0 399.5 L970.0 399.1 L974.0 398.7 L978.0 398.2 L982.0 397.8 L986.0 397.4 L990.0 397.0 L994.0 396.5 L998.0 396.0 L1002.0 395.5 L1006.0 395.0 L1010.0 394.5 L1014.0 393.9 L1018.0 393.3 L1022.0 392.6 L1026.0 392.0 L1030.0 391.3 L1034.0 390.7 L1038.0 390.0 L1042.0 389.3 L1046.0 388.6 L1050.0 387.9 L1054.0 387.3 L1058.0 386.6 L1062.0 385.9 L1066.0 385.1 L1070.0 384.4 L1074.0 383.6 L1078.0 382.8 L1082.0 382.1 L1086.0 381.4 L1090.0 380.8 L1094.0 380.3 L1098.0 379.7 L1102.0 379.1 L1106.0 378.2 L1110.0 377.2 L1114.0 376.2 L1118.0 375.3 L1122.0 374.3 L1126.0 373.4 L1130.0 372.4 L1134.0 371.5 L1134.5 371.3 L1134.5 371.6 L1134.0 371.7 L1130.0 372.7 L1126.0 373.8 L1122.0 374.8 L1118.0 375.8 L1114.0 376.8 L1110.0 377.9 L1106.0 378.9 L1102.0 379.9 L1098.0 380.7 L1094.0 381.6 L1090.0 382.4 L1086.0 383.3 L1082.0 384.2 L1078.0 385.3 L1074.0 386.4 L1070.0 387.5 L1066.0 388.6 L1062.0 389.6 L1058.0 390.7 L1054.0 391.7 L1050.0 392.7 L1046.0 393.7 L1042.0 394.7 L1038.0 395.6 L1034.0 396.6 L1030.0 397.6 L1026.0 398.5 L1022.0 399.4 L1018.0 400.3 L1014.0 401.2 L1010.0 402.1 L1006.0 402.9 L1002.0 403.6 L998.0 404.3 L994.0 405.0 L990.0 405.7 L986.0 406.3 L982.0 406.9 L978.0 407.5 L974.0 408.1 L970.0 408.8 L966.0 409.4 L962.0 410.0 L958.0 410.7 L954.0 411.3 L950.0 411.9 L946.0 412.5 L942.0 413.2 L938.0 413.8 L934.0 414.4 L930.0 415.0 L926.0 415.6 L922.0 416.2 L918.0 416.7 L914.0 417.2 L910.0 417.7 L906.0 418.2 L902.0 418.8 L898.0 419.3 L894.0 419.8 L890.0 420.3 L886.0 420.8 L882.0 421.3 L878.0 421.9 L874.0 422.3 L870.0 422.8 L866.0 423.3 L862.0 423.8 L858.0 424.2 L854.0 424.7 L850.0 425.1 L846.0 425.5 L842.0 425.9 L838.0 426.2 L834.0 426.5 L830.0 426.9 L826.0 427.1 L822.0 427.4 L818.0 427.6 L814.0 427.9 L810.0 428.1 L806.0 428.3 L802.0 428.5 L798.0 428.7 L794.0 428.9 L790.0 429.0 L786.0 429.2 L782.0 429.3 L778.0 429.5 L774.0 429.6 L770.0 429.8 L766.0 429.9 L762.0 430.0 L758.0 430.1 L754.0 430.2 L750.0 430.3 L746.0 430.4 L742.0 430.5 L738.0 430.5 L734.0 430.6 L730.0 430.7 L726.0 430.7 L722.0 430.8 L718.0 430.8 L714.0 430.8 L710.0 430.9 L706.0 430.9 L702.0 430.9 L698.0 430.9 L694.0 431.0 L690.0 431.0 L686.0 431.0 L682.0 431.0 L678.0 431.0 L674.0 431.0 L670.0 431.0 L666.0 431.0 L662.0 431.0 L658.0 430.9 L654.0 430.9 L650.0 430.9 L646.0 430.8 L642.0 430.8 L638.0 430.7 L634.0 430.6 L630.0 430.6 L626.0 430.5 L622.0 430.4 L618.0 430.3 L614.0 430.2 L610.0 430.1 L606.0 430.0 L602.0 429.8 L598.0 429.7 L594.0 429.6 L590.0 429.4 L586.0 429.3 L582.0 429.1 L578.0 429.0 L574.0 428.8 L570.0 428.6 L566.0 428.4 L562.0 428.3 L558.0 428.1 L554.0 427.9 L550.0 427.7 L546.0 427.5 L542.0 427.3 L538.0 427.1 L534.0 426.9 L530.0 426.7 L526.0 426.5 L522.0 426.3 L518.0 426.1 L514.0 425.9 L510.0 425.6 L506.0 425.4 L502.0 425.1 L498.0 424.8 L494.0 424.5 L490.0 424.2 L486.0 423.9 L482.0 423.6 L478.0 423.3 L474.0 422.9 L470.0 422.6 L466.0 422.2 L462.0 421.8 L458.0 421.4 L454.0 421.1 L450.0 420.7 L446.0 420.3 L442.0 419.8 L438.0 419.4 L434.0 419.0 L430.0 418.6 L426.0 418.2 L422.0 417.8 L418.0 417.3 L414.0 416.9 L410.0 416.5 L406.0 416.1 L402.0 415.6 L398.0 415.2 L394.0 414.7 L390.0 414.3 L386.0 413.8 L382.0 413.4 L378.0 412.9 L374.0 412.5 L370.0 412.0 L366.0 411.5 L362.0 411.0 L358.0 410.6 L354.0 410.1 L350.0 409.6 L346.0 409.1 L342.0 408.6 L338.0 408.1 L334.0 407.6 L330.0 407.1 L326.0 406.6 L322.0 406.1 L318.0 405.6 L314.0 405.1 L310.0 404.6 L306.0 404.0 L302.0 403.5 L298.0 402.9 L294.0 402.4 L290.0 401.8 L286.0 401.2 L282.0 400.6 L278.0 399.9 L274.0 399.2 L270.0 398.6 L266.0 397.8 L262.0 397.1 L258.0 396.4 L254.0 395.6 L250.0 394.8 L246.0 394.0 L242.0 393.3 L238.0 392.5 L234.0 391.7 L230.0 390.9 L226.0 390.1 L222.0 389.3 L218.0 388.6Z" fill="url(#l2)"/><path d="M218.0 343.9 L222.0 343.3 L226.0 342.6 L230.0 341.9 L234.0 341.2 L238.0 340.5 L242.0 339.8 L246.0 339.1 L250.0 338.4 L254.0 337.7 L258.0 337.1 L262.0 336.4 L266.0 335.7 L270.0 335.0 L274.0 334.4 L278.0 333.7 L282.0 333.0 L286.0 332.3 L290.0 331.6 L294.0 331.0 L298.0 330.3 L302.0 329.6 L306.0 328.9 L310.0 328.2 L314.0 327.5 L318.0 326.8 L322.0 326.2 L326.0 325.5 L330.0 324.9 L334.0 324.3 L338.0 323.6 L342.0 323.0 L346.0 322.5 L350.0 321.9 L354.0 321.4 L358.0 320.8 L362.0 320.3 L366.0 319.8 L370.0 319.3 L374.0 318.9 L378.0 318.4 L382.0 318.0 L386.0 317.5 L390.0 317.1 L394.0 316.7 L398.0 316.3 L402.0 315.9 L406.0 315.5 L410.0 315.1 L414.0 314.7 L418.0 314.4 L422.0 314.0 L426.0 313.6 L430.0 313.3 L434.0 312.9 L438.0 312.6 L442.0 312.3 L446.0 311.9 L450.0 311.6 L454.0 311.3 L458.0 311.0 L462.0 310.7 L466.0 310.4 L470.0 310.1 L474.0 309.8 L478.0 309.6 L482.0 309.3 L486.0 309.0 L490.0 308.8 L494.0 308.5 L498.0 308.3 L502.0 308.1 L506.0 307.8 L510.0 307.6 L514.0 307.4 L518.0 307.2 L522.0 307.0 L526.0 306.8 L530.0 306.6 L534.0 306.4 L538.0 306.3 L542.0 306.1 L546.0 305.9 L550.0 305.8 L554.0 305.6 L558.0 305.5 L562.0 305.4 L566.0 305.2 L570.0 305.1 L574.0 305.0 L578.0 304.9 L582.0 304.8 L586.0 304.7 L590.0 304.6 L594.0 304.5 L598.0 304.4 L602.0 304.3 L606.0 304.3 L610.0 304.2 L614.0 304.1 L618.0 304.0 L622.0 304.0 L626.0 303.9 L630.0 303.9 L634.0 303.8 L638.0 303.8 L642.0 303.8 L646.0 303.7 L650.0 303.7 L654.0 303.7 L658.0 303.7 L662.0 303.6 L666.0 303.6 L670.0 303.6 L674.0 303.6 L678.0 303.6 L682.0 303.6 L686.0 303.6 L690.0 303.6 L694.0 303.6 L698.0 303.6 L702.0 303.6 L706.0 303.6 L710.0 303.7 L714.0 303.7 L718.0 303.7 L722.0 303.8 L726.0 303.8 L730.0 303.8 L734.0 303.9 L738.0 304.0 L742.0 304.0 L746.0 304.1 L750.0 304.2 L754.0 304.3 L758.0 304.4 L762.0 304.5 L766.0 304.6 L770.0 304.7 L774.0 304.8 L778.0 304.9 L782.0 305.0 L786.0 305.2 L790.0 305.3 L794.0 305.4 L798.0 305.6 L802.0 305.8 L806.0 306.0 L810.0 306.2 L814.0 306.4 L818.0 306.6 L822.0 306.9 L826.0 307.1 L830.0 307.4 L834.0 307.7 L838.0 308.1 L842.0 308.4 L846.0 308.7 L850.0 309.1 L854.0 309.5 L858.0 309.8 L862.0 310.2 L866.0 310.6 L870.0 311.0 L874.0 311.4 L878.0 311.8 L882.0 312.2 L886.0 312.5 L890.0 312.9 L894.0 313.3 L898.0 313.7 L902.0 314.1 L906.0 314.5 L910.0 314.9 L914.0 315.4 L918.0 315.9 L922.0 316.4 L926.0 316.9 L930.0 317.4 L934.0 317.9 L938.0 318.4 L942.0 318.9 L946.0 319.4 L950.0 319.9 L954.0 320.5 L958.0 321.0 L962.0 321.6 L966.0 322.1 L970.0 322.7 L974.0 323.3 L978.0 323.9 L982.0 324.5 L986.0 325.1 L990.0 325.8 L994.0 326.4 L998.0 327.1 L1002.0 327.8 L1006.0 328.6 L1010.0 329.3 L1014.0 330.1 L1018.0 330.8 L1022.0 331.6 L1026.0 332.4 L1030.0 333.2 L1034.0 334.0 L1038.0 334.8 L1042.0 335.7 L1046.0 336.5 L1050.0 337.4 L1054.0 338.3 L1058.0 339.2 L1062.0 340.1 L1066.0 341.1 L1070.0 342.0 L1074.0 343.0 L1078.0 344.1 L1082.0 345.0 L1086.0 345.9 L1090.0 346.8 L1094.0 347.8 L1098.0 348.8 L1102.0 349.8 L1106.0 350.9 L1110.0 352.1 L1114.0 353.5 L1118.0 355.0 L1122.0 356.6 L1126.0 358.2 L1130.0 359.8 L1134.0 361.5 L1134.5 361.7 L1134.5 361.1 L1134.0 360.9 L1130.0 359.1 L1126.0 357.3 L1122.0 355.5 L1118.0 353.8 L1114.0 352.1 L1110.0 350.5 L1106.0 349.0 L1102.0 347.6 L1098.0 346.2 L1094.0 345.0 L1090.0 343.7 L1086.0 342.5 L1082.0 341.4 L1078.0 340.1 L1074.0 338.8 L1070.0 337.5 L1066.0 336.3 L1062.0 335.1 L1058.0 333.9 L1054.0 332.7 L1050.0 331.6 L1046.0 330.4 L1042.0 329.3 L1038.0 328.3 L1034.0 327.2 L1030.0 326.1 L1026.0 325.1 L1022.0 324.1 L1018.0 323.1 L1014.0 322.1 L1010.0 321.1 L1006.0 320.1 L1002.0 319.2 L998.0 318.3 L994.0 317.4 L990.0 316.5 L986.0 315.7 L982.0 314.9 L978.0 314.1 L974.0 313.3 L970.0 312.6 L966.0 311.8 L962.0 311.1 L958.0 310.4 L954.0 309.7 L950.0 309.0 L946.0 308.3 L942.0 307.7 L938.0 307.0 L934.0 306.4 L930.0 305.7 L926.0 305.1 L922.0 304.4 L918.0 303.8 L914.0 303.1 L910.0 302.5 L906.0 301.9 L902.0 301.4 L898.0 300.9 L894.0 300.5 L890.0 300.0 L886.0 299.5 L882.0 299.0 L878.0 298.5 L874.0 297.9 L870.0 297.4 L866.0 296.9 L862.0 296.4 L858.0 296.0 L854.0 295.5 L850.0 295.0 L846.0 294.5 L842.0 294.1 L838.0 293.7 L834.0 293.3 L830.0 292.9 L826.0 292.5 L822.0 292.2 L818.0 291.8 L814.0 291.5 L810.0 291.2 L806.0 291.0 L802.0 290.7 L798.0 290.5 L794.0 290.3 L790.0 290.1 L786.0 289.9 L782.0 289.8 L778.0 289.6 L774.0 289.4 L770.0 289.3 L766.0 289.2 L762.0 289.0 L758.0 288.9 L754.0 288.8 L750.0 288.7 L746.0 288.6 L742.0 288.5 L738.0 288.4 L734.0 288.3 L730.0 288.2 L726.0 288.2 L722.0 288.1 L718.0 288.1 L714.0 288.0 L710.0 288.0 L706.0 288.0 L702.0 288.0 L698.0 287.9 L694.0 287.9 L690.0 287.9 L686.0 287.9 L682.0 287.9 L678.0 287.9 L674.0 287.9 L670.0 287.9 L666.0 288.0 L662.0 288.0 L658.0 288.0 L654.0 288.0 L650.0 288.0 L646.0 288.1 L642.0 288.1 L638.0 288.2 L634.0 288.2 L630.0 288.3 L626.0 288.3 L622.0 288.4 L618.0 288.5 L614.0 288.6 L610.0 288.7 L606.0 288.8 L602.0 288.9 L598.0 289.0 L594.0 289.1 L590.0 289.2 L586.0 289.3 L582.0 289.5 L578.0 289.6 L574.0 289.7 L570.0 289.9 L566.0 290.0 L562.0 290.2 L558.0 290.4 L554.0 290.5 L550.0 290.7 L546.0 290.9 L542.0 291.1 L538.0 291.4 L534.0 291.6 L530.0 291.8 L526.0 292.1 L522.0 292.3 L518.0 292.6 L514.0 292.8 L510.0 293.1 L506.0 293.4 L502.0 293.7 L498.0 294.0 L494.0 294.3 L490.0 294.6 L486.0 295.0 L482.0 295.3 L478.0 295.6 L474.0 296.0 L470.0 296.3 L466.0 296.7 L462.0 297.1 L458.0 297.5 L454.0 297.9 L450.0 298.3 L446.0 298.7 L442.0 299.1 L438.0 299.5 L434.0 300.0 L430.0 300.4 L426.0 300.9 L422.0 301.3 L418.0 301.8 L414.0 302.3 L410.0 302.8 L406.0 303.3 L402.0 303.8 L398.0 304.3 L394.0 304.8 L390.0 305.4 L386.0 305.9 L382.0 306.5 L378.0 307.0 L374.0 307.6 L370.0 308.2 L366.0 308.9 L362.0 309.5 L358.0 310.2 L354.0 310.9 L350.0 311.6 L346.0 312.3 L342.0 313.0 L338.0 313.8 L334.0 314.6 L330.0 315.4 L326.0 316.2 L322.0 317.1 L318.0 317.9 L314.0 318.8 L310.0 319.7 L306.0 320.6 L302.0 321.4 L298.0 322.3 L294.0 323.2 L290.0 324.1 L286.0 325.0 L282.0 325.9 L278.0 326.8 L274.0 327.6 L270.0 328.5 L266.0 329.4 L262.0 330.2 L258.0 331.1 L254.0 332.0 L250.0 332.9 L246.0 333.8 L242.0 334.7 L238.0 335.5 L234.0 336.4 L230.0 337.3 L226.0 338.2 L222.0 339.1 L218.0 339.9Z" fill="url(#u3)"/><path d="M218.0 388.6 L222.0 389.3 L226.0 390.1 L230.0 390.9 L234.0 391.7 L238.0 392.5 L242.0 393.3 L246.0 394.0 L250.0 394.8 L254.0 395.6 L258.0 396.4 L262.0 397.1 L266.0 397.8 L270.0 398.6 L274.0 399.2 L278.0 399.9 L282.0 400.6 L286.0 401.2 L290.0 401.8 L294.0 402.4 L298.0 402.9 L302.0 403.5 L306.0 404.0 L310.0 404.6 L314.0 405.1 L318.0 405.6 L322.0 406.1 L326.0 406.6 L330.0 407.1 L334.0 407.6 L338.0 408.1 L342.0 408.6 L346.0 409.1 L350.0 409.6 L354.0 410.1 L358.0 410.6 L362.0 411.0 L366.0 411.5 L370.0 412.0 L374.0 412.5 L378.0 412.9 L382.0 413.4 L386.0 413.8 L390.0 414.3 L394.0 414.7 L398.0 415.2 L402.0 415.6 L406.0 416.1 L410.0 416.5 L414.0 416.9 L418.0 417.3 L422.0 417.8 L426.0 418.2 L430.0 418.6 L434.0 419.0 L438.0 419.4 L442.0 419.8 L446.0 420.3 L450.0 420.7 L454.0 421.1 L458.0 421.4 L462.0 421.8 L466.0 422.2 L470.0 422.6 L474.0 422.9 L478.0 423.3 L482.0 423.6 L486.0 423.9 L490.0 424.2 L494.0 424.5 L498.0 424.8 L502.0 425.1 L506.0 425.4 L510.0 425.6 L514.0 425.9 L518.0 426.1 L522.0 426.3 L526.0 426.5 L530.0 426.7 L534.0 426.9 L538.0 427.1 L542.0 427.3 L546.0 427.5 L550.0 427.7 L554.0 427.9 L558.0 428.1 L562.0 428.3 L566.0 428.4 L570.0 428.6 L574.0 428.8 L578.0 429.0 L582.0 429.1 L586.0 429.3 L590.0 429.4 L594.0 429.6 L598.0 429.7 L602.0 429.8 L606.0 430.0 L610.0 430.1 L614.0 430.2 L618.0 430.3 L622.0 430.4 L626.0 430.5 L630.0 430.6 L634.0 430.6 L638.0 430.7 L642.0 430.8 L646.0 430.8 L650.0 430.9 L654.0 430.9 L658.0 430.9 L662.0 431.0 L666.0 431.0 L670.0 431.0 L674.0 431.0 L678.0 431.0 L682.0 431.0 L686.0 431.0 L690.0 431.0 L694.0 431.0 L698.0 430.9 L702.0 430.9 L706.0 430.9 L710.0 430.9 L714.0 430.8 L718.0 430.8 L722.0 430.8 L726.0 430.7 L730.0 430.7 L734.0 430.6 L738.0 430.5 L742.0 430.5 L746.0 430.4 L750.0 430.3 L754.0 430.2 L758.0 430.1 L762.0 430.0 L766.0 429.9 L770.0 429.8 L774.0 429.6 L778.0 429.5 L782.0 429.3 L786.0 429.2 L790.0 429.0 L794.0 428.9 L798.0 428.7 L802.0 428.5 L806.0 428.3 L810.0 428.1 L814.0 427.9 L818.0 427.6 L822.0 427.4 L826.0 427.1 L830.0 426.9 L834.0 426.5 L838.0 426.2 L842.0 425.9 L846.0 425.5 L850.0 425.1 L854.0 424.7 L858.0 424.2 L862.0 423.8 L866.0 423.3 L870.0 422.8 L874.0 422.3 L878.0 421.9 L882.0 421.3 L886.0 420.8 L890.0 420.3 L894.0 419.8 L898.0 419.3 L902.0 418.8 L906.0 418.2 L910.0 417.7 L914.0 417.2 L918.0 416.7 L922.0 416.2 L926.0 415.6 L930.0 415.0 L934.0 414.4 L938.0 413.8 L942.0 413.2 L946.0 412.5 L950.0 411.9 L954.0 411.3 L958.0 410.7 L962.0 410.0 L966.0 409.4 L970.0 408.8 L974.0 408.1 L978.0 407.5 L982.0 406.9 L986.0 406.3 L990.0 405.7 L994.0 405.0 L998.0 404.3 L1002.0 403.6 L1006.0 402.9 L1010.0 402.1 L1014.0 401.2 L1018.0 400.3 L1022.0 399.4 L1026.0 398.5 L1030.0 397.6 L1034.0 396.6 L1038.0 395.6 L1042.0 394.7 L1046.0 393.7 L1050.0 392.7 L1054.0 391.7 L1058.0 390.7 L1062.0 389.6 L1066.0 388.6 L1070.0 387.5 L1074.0 386.4 L1078.0 385.3 L1082.0 384.2 L1086.0 383.3 L1090.0 382.4 L1094.0 381.6 L1098.0 380.7 L1102.0 379.9 L1106.0 378.9 L1110.0 377.9 L1114.0 376.8 L1118.0 375.8 L1122.0 374.8 L1126.0 373.8 L1130.0 372.7 L1134.0 371.7 L1134.5 371.6 L1134.5 371.8 L1134.0 372.0 L1130.0 373.1 L1126.0 374.1 L1122.0 375.2 L1118.0 376.3 L1114.0 377.4 L1110.0 378.5 L1106.0 379.5 L1102.0 380.6 L1098.0 381.7 L1094.0 382.8 L1090.0 383.9 L1086.0 385.0 L1082.0 386.2 L1078.0 387.6 L1074.0 389.1 L1070.0 390.5 L1066.0 391.9 L1062.0 393.2 L1058.0 394.5 L1054.0 395.8 L1050.0 397.1 L1046.0 398.4 L1042.0 399.7 L1038.0 400.9 L1034.0 402.2 L1030.0 403.4 L1026.0 404.7 L1022.0 405.9 L1018.0 407.0 L1014.0 408.2 L1010.0 409.3 L1006.0 410.3 L1002.0 411.3 L998.0 412.2 L994.0 413.1 L990.0 413.9 L986.0 414.7 L982.0 415.5 L978.0 416.3 L974.0 417.1 L970.0 417.9 L966.0 418.7 L962.0 419.5 L958.0 420.4 L954.0 421.2 L950.0 422.0 L946.0 422.8 L942.0 423.6 L938.0 424.4 L934.0 425.1 L930.0 425.9 L926.0 426.7 L922.0 427.5 L918.0 428.2 L914.0 428.8 L910.0 429.5 L906.0 430.1 L902.0 430.8 L898.0 431.5 L894.0 432.1 L890.0 432.8 L886.0 433.5 L882.0 434.1 L878.0 434.8 L874.0 435.4 L870.0 436.1 L866.0 436.7 L862.0 437.3 L858.0 437.9 L854.0 438.4 L850.0 439.0 L846.0 439.5 L842.0 440.0 L838.0 440.4 L834.0 440.8 L830.0 441.2 L826.0 441.6 L822.0 441.9 L818.0 442.3 L814.0 442.6 L810.0 442.8 L806.0 443.1 L802.0 443.4 L798.0 443.6 L794.0 443.8 L790.0 444.0 L786.0 444.2 L782.0 444.4 L778.0 444.6 L774.0 444.8 L770.0 445.0 L766.0 445.2 L762.0 445.3 L758.0 445.5 L754.0 445.6 L750.0 445.7 L746.0 445.8 L742.0 445.9 L738.0 446.0 L734.0 446.1 L730.0 446.2 L726.0 446.2 L722.0 446.3 L718.0 446.3 L714.0 446.4 L710.0 446.4 L706.0 446.5 L702.0 446.5 L698.0 446.5 L694.0 446.5 L690.0 446.6 L686.0 446.6 L682.0 446.6 L678.0 446.6 L674.0 446.6 L670.0 446.6 L666.0 446.6 L662.0 446.5 L658.0 446.5 L654.0 446.5 L650.0 446.4 L646.0 446.4 L642.0 446.3 L638.0 446.2 L634.0 446.1 L630.0 446.0 L626.0 445.9 L622.0 445.8 L618.0 445.7 L614.0 445.6 L610.0 445.4 L606.0 445.3 L602.0 445.1 L598.0 444.9 L594.0 444.7 L590.0 444.5 L586.0 444.4 L582.0 444.2 L578.0 443.9 L574.0 443.7 L570.0 443.5 L566.0 443.3 L562.0 443.1 L558.0 442.8 L554.0 442.6 L550.0 442.4 L546.0 442.1 L542.0 441.9 L538.0 441.6 L534.0 441.4 L530.0 441.1 L526.0 440.8 L522.0 440.5 L518.0 440.2 L514.0 439.9 L510.0 439.6 L506.0 439.3 L502.0 439.0 L498.0 438.6 L494.0 438.2 L490.0 437.9 L486.0 437.5 L482.0 437.1 L478.0 436.6 L474.0 436.2 L470.0 435.7 L466.0 435.2 L462.0 434.8 L458.0 434.3 L454.0 433.8 L450.0 433.2 L446.0 432.7 L442.0 432.2 L438.0 431.7 L434.0 431.1 L430.0 430.6 L426.0 430.1 L422.0 429.5 L418.0 429.0 L414.0 428.4 L410.0 427.9 L406.0 427.3 L402.0 426.8 L398.0 426.2 L394.0 425.6 L390.0 425.0 L386.0 424.5 L382.0 423.9 L378.0 423.3 L374.0 422.7 L370.0 422.1 L366.0 421.5 L362.0 420.8 L358.0 420.2 L354.0 419.6 L350.0 418.9 L346.0 418.3 L342.0 417.7 L338.0 417.0 L334.0 416.4 L330.0 415.8 L326.0 415.1 L322.0 414.5 L318.0 413.8 L314.0 413.1 L310.0 412.5 L306.0 411.8 L302.0 411.1 L298.0 410.4 L294.0 409.6 L290.0 408.9 L286.0 408.1 L282.0 407.3 L278.0 406.5 L274.0 405.6 L270.0 404.7 L266.0 403.8 L262.0 402.9 L258.0 401.9 L254.0 400.9 L250.0 399.9 L246.0 398.9 L242.0 397.9 L238.0 396.9 L234.0 395.8 L230.0 394.8 L226.0 393.8 L222.0 392.7 L218.0 391.8Z" fill="url(#l3)"/><path d="M218.0 339.9 L222.0 339.1 L226.0 338.2 L230.0 337.3 L234.0 336.4 L238.0 335.5 L242.0 334.7 L246.0 333.8 L250.0 332.9 L254.0 332.0 L258.0 331.1 L262.0 330.2 L266.0 329.4 L270.0 328.5 L274.0 327.6 L278.0 326.8 L282.0 325.9 L286.0 325.0 L290.0 324.1 L294.0 323.2 L298.0 322.3 L302.0 321.4 L306.0 320.6 L310.0 319.7 L314.0 318.8 L318.0 317.9 L322.0 317.1 L326.0 316.2 L330.0 315.4 L334.0 314.6 L338.0 313.8 L342.0 313.0 L346.0 312.3 L350.0 311.6 L354.0 310.9 L358.0 310.2 L362.0 309.5 L366.0 308.9 L370.0 308.2 L374.0 307.6 L378.0 307.0 L382.0 306.5 L386.0 305.9 L390.0 305.4 L394.0 304.8 L398.0 304.3 L402.0 303.8 L406.0 303.3 L410.0 302.8 L414.0 302.3 L418.0 301.8 L422.0 301.3 L426.0 300.9 L430.0 300.4 L434.0 300.0 L438.0 299.5 L442.0 299.1 L446.0 298.7 L450.0 298.3 L454.0 297.9 L458.0 297.5 L462.0 297.1 L466.0 296.7 L470.0 296.3 L474.0 296.0 L478.0 295.6 L482.0 295.3 L486.0 295.0 L490.0 294.6 L494.0 294.3 L498.0 294.0 L502.0 293.7 L506.0 293.4 L510.0 293.1 L514.0 292.8 L518.0 292.6 L522.0 292.3 L526.0 292.1 L530.0 291.8 L534.0 291.6 L538.0 291.4 L542.0 291.1 L546.0 290.9 L550.0 290.7 L554.0 290.5 L558.0 290.4 L562.0 290.2 L566.0 290.0 L570.0 289.9 L574.0 289.7 L578.0 289.6 L582.0 289.5 L586.0 289.3 L590.0 289.2 L594.0 289.1 L598.0 289.0 L602.0 288.9 L606.0 288.8 L610.0 288.7 L614.0 288.6 L618.0 288.5 L622.0 288.4 L626.0 288.3 L630.0 288.3 L634.0 288.2 L638.0 288.2 L642.0 288.1 L646.0 288.1 L650.0 288.0 L654.0 288.0 L658.0 288.0 L662.0 288.0 L666.0 288.0 L670.0 287.9 L674.0 287.9 L678.0 287.9 L682.0 287.9 L686.0 287.9 L690.0 287.9 L694.0 287.9 L698.0 287.9 L702.0 288.0 L706.0 288.0 L710.0 288.0 L714.0 288.0 L718.0 288.1 L722.0 288.1 L726.0 288.2 L730.0 288.2 L734.0 288.3 L738.0 288.4 L742.0 288.5 L746.0 288.6 L750.0 288.7 L754.0 288.8 L758.0 288.9 L762.0 289.0 L766.0 289.2 L770.0 289.3 L774.0 289.4 L778.0 289.6 L782.0 289.8 L786.0 289.9 L790.0 290.1 L794.0 290.3 L798.0 290.5 L802.0 290.7 L806.0 291.0 L810.0 291.2 L814.0 291.5 L818.0 291.8 L822.0 292.2 L826.0 292.5 L830.0 292.9 L834.0 293.3 L838.0 293.7 L842.0 294.1 L846.0 294.5 L850.0 295.0 L854.0 295.5 L858.0 296.0 L862.0 296.4 L866.0 296.9 L870.0 297.4 L874.0 297.9 L878.0 298.5 L882.0 299.0 L886.0 299.5 L890.0 300.0 L894.0 300.5 L898.0 300.9 L902.0 301.4 L906.0 301.9 L910.0 302.5 L914.0 303.1 L918.0 303.8 L922.0 304.4 L926.0 305.1 L930.0 305.7 L934.0 306.4 L938.0 307.0 L942.0 307.7 L946.0 308.3 L950.0 309.0 L954.0 309.7 L958.0 310.4 L962.0 311.1 L966.0 311.8 L970.0 312.6 L974.0 313.3 L978.0 314.1 L982.0 314.9 L986.0 315.7 L990.0 316.5 L994.0 317.4 L998.0 318.3 L1002.0 319.2 L1006.0 320.1 L1010.0 321.1 L1014.0 322.1 L1018.0 323.1 L1022.0 324.1 L1026.0 325.1 L1030.0 326.1 L1034.0 327.2 L1038.0 328.3 L1042.0 329.3 L1046.0 330.4 L1050.0 331.6 L1054.0 332.7 L1058.0 333.9 L1062.0 335.1 L1066.0 336.3 L1070.0 337.5 L1074.0 338.8 L1078.0 340.1 L1082.0 341.4 L1086.0 342.5 L1090.0 343.7 L1094.0 345.0 L1098.0 346.2 L1102.0 347.6 L1106.0 349.0 L1110.0 350.5 L1114.0 352.1 L1118.0 353.8 L1122.0 355.5 L1126.0 357.3 L1130.0 359.1 L1134.0 360.9 L1134.5 361.1 L1134.5 360.8 L1134.0 360.6 L1130.0 358.7 L1126.0 356.7 L1122.0 354.7 L1118.0 352.8 L1114.0 350.9 L1110.0 349.1 L1106.0 347.3 L1102.0 345.7 L1098.0 344.1 L1094.0 342.6 L1090.0 341.1 L1086.0 339.7 L1082.0 338.3 L1078.0 336.8 L1074.0 335.2 L1070.0 333.7 L1066.0 332.2 L1062.0 330.8 L1058.0 329.4 L1054.0 328.0 L1050.0 326.7 L1046.0 325.3 L1042.0 324.0 L1038.0 322.7 L1034.0 321.4 L1030.0 320.2 L1026.0 318.9 L1022.0 317.7 L1018.0 316.5 L1014.0 315.3 L1010.0 314.1 L1006.0 312.9 L1002.0 311.8 L998.0 310.7 L994.0 309.6 L990.0 308.6 L986.0 307.6 L982.0 306.6 L978.0 305.6 L974.0 304.7 L970.0 303.7 L966.0 302.8 L962.0 302.0 L958.0 301.1 L954.0 300.3 L950.0 299.4 L946.0 298.6 L942.0 297.8 L938.0 297.0 L934.0 296.2 L930.0 295.4 L926.0 294.6 L922.0 293.8 L918.0 293.1 L914.0 292.3 L910.0 291.5 L906.0 290.8 L902.0 290.2 L898.0 289.6 L894.0 289.0 L890.0 288.5 L886.0 287.8 L882.0 287.2 L878.0 286.6 L874.0 286.0 L870.0 285.4 L866.0 284.8 L862.0 284.2 L858.0 283.6 L854.0 283.1 L850.0 282.5 L846.0 281.9 L842.0 281.4 L838.0 280.9 L834.0 280.4 L830.0 279.9 L826.0 279.5 L822.0 279.1 L818.0 278.7 L814.0 278.4 L810.0 278.0 L806.0 277.7 L802.0 277.4 L798.0 277.2 L794.0 276.9 L790.0 276.7 L786.0 276.5 L782.0 276.3 L778.0 276.1 L774.0 275.9 L770.0 275.7 L766.0 275.6 L762.0 275.4 L758.0 275.3 L754.0 275.2 L750.0 275.0 L746.0 274.9 L742.0 274.8 L738.0 274.7 L734.0 274.6 L730.0 274.5 L726.0 274.4 L722.0 274.4 L718.0 274.3 L714.0 274.3 L710.0 274.2 L706.0 274.2 L702.0 274.2 L698.0 274.2 L694.0 274.2 L690.0 274.2 L686.0 274.1 L682.0 274.1 L678.0 274.1 L674.0 274.2 L670.0 274.2 L666.0 274.2 L662.0 274.2 L658.0 274.2 L654.0 274.2 L650.0 274.3 L646.0 274.3 L642.0 274.4 L638.0 274.4 L634.0 274.5 L630.0 274.6 L626.0 274.6 L622.0 274.7 L618.0 274.8 L614.0 274.9 L610.0 275.0 L606.0 275.1 L602.0 275.2 L598.0 275.4 L594.0 275.5 L590.0 275.6 L586.0 275.8 L582.0 275.9 L578.0 276.1 L574.0 276.2 L570.0 276.4 L566.0 276.6 L562.0 276.8 L558.0 277.0 L554.0 277.2 L550.0 277.4 L546.0 277.7 L542.0 277.9 L538.0 278.2 L534.0 278.4 L530.0 278.7 L526.0 279.0 L522.0 279.3 L518.0 279.6 L514.0 279.9 L510.0 280.2 L506.0 280.6 L502.0 280.9 L498.0 281.3 L494.0 281.7 L490.0 282.0 L486.0 282.4 L482.0 282.8 L478.0 283.2 L474.0 283.7 L470.0 284.1 L466.0 284.5 L462.0 285.0 L458.0 285.4 L454.0 285.9 L450.0 286.4 L446.0 286.9 L442.0 287.4 L438.0 287.9 L434.0 288.5 L430.0 289.0 L426.0 289.5 L422.0 290.1 L418.0 290.7 L414.0 291.3 L410.0 291.8 L406.0 292.4 L402.0 293.1 L398.0 293.7 L394.0 294.3 L390.0 295.0 L386.0 295.6 L382.0 296.3 L378.0 297.0 L374.0 297.7 L370.0 298.5 L366.0 299.2 L362.0 300.0 L358.0 300.8 L354.0 301.7 L350.0 302.5 L346.0 303.4 L342.0 304.3 L338.0 305.2 L334.0 306.2 L330.0 307.2 L326.0 308.2 L322.0 309.2 L318.0 310.3 L314.0 311.3 L310.0 312.4 L306.0 313.4 L302.0 314.5 L298.0 315.6 L294.0 316.7 L290.0 317.8 L286.0 318.8 L282.0 319.9 L278.0 320.9 L274.0 322.0 L270.0 323.0 L266.0 324.1 L262.0 325.1 L258.0 326.2 L254.0 327.2 L250.0 328.2 L246.0 329.3 L242.0 330.3 L238.0 331.4 L234.0 332.4 L230.0 333.5 L226.0 334.6 L222.0 335.6 L218.0 336.5Z" fill="url(#u4)"/><path d="M218.0 391.8 L222.0 392.7 L226.0 393.8 L230.0 394.8 L234.0 395.8 L238.0 396.9 L242.0 397.9 L246.0 398.9 L250.0 399.9 L254.0 400.9 L258.0 401.9 L262.0 402.9 L266.0 403.8 L270.0 404.7 L274.0 405.6 L278.0 406.5 L282.0 407.3 L286.0 408.1 L290.0 408.9 L294.0 409.6 L298.0 410.4 L302.0 411.1 L306.0 411.8 L310.0 412.5 L314.0 413.1 L318.0 413.8 L322.0 414.5 L326.0 415.1 L330.0 415.8 L334.0 416.4 L338.0 417.0 L342.0 417.7 L346.0 418.3 L350.0 418.9 L354.0 419.6 L358.0 420.2 L362.0 420.8 L366.0 421.5 L370.0 422.1 L374.0 422.7 L378.0 423.3 L382.0 423.9 L386.0 424.5 L390.0 425.0 L394.0 425.6 L398.0 426.2 L402.0 426.8 L406.0 427.3 L410.0 427.9 L414.0 428.4 L418.0 429.0 L422.0 429.5 L426.0 430.1 L430.0 430.6 L434.0 431.1 L438.0 431.7 L442.0 432.2 L446.0 432.7 L450.0 433.2 L454.0 433.8 L458.0 434.3 L462.0 434.8 L466.0 435.2 L470.0 435.7 L474.0 436.2 L478.0 436.6 L482.0 437.1 L486.0 437.5 L490.0 437.9 L494.0 438.2 L498.0 438.6 L502.0 439.0 L506.0 439.3 L510.0 439.6 L514.0 439.9 L518.0 440.2 L522.0 440.5 L526.0 440.8 L530.0 441.1 L534.0 441.4 L538.0 441.6 L542.0 441.9 L546.0 442.1 L550.0 442.4 L554.0 442.6 L558.0 442.8 L562.0 443.1 L566.0 443.3 L570.0 443.5 L574.0 443.7 L578.0 443.9 L582.0 444.2 L586.0 444.4 L590.0 444.5 L594.0 444.7 L598.0 444.9 L602.0 445.1 L606.0 445.3 L610.0 445.4 L614.0 445.6 L618.0 445.7 L622.0 445.8 L626.0 445.9 L630.0 446.0 L634.0 446.1 L638.0 446.2 L642.0 446.3 L646.0 446.4 L650.0 446.4 L654.0 446.5 L658.0 446.5 L662.0 446.5 L666.0 446.6 L670.0 446.6 L674.0 446.6 L678.0 446.6 L682.0 446.6 L686.0 446.6 L690.0 446.6 L694.0 446.5 L698.0 446.5 L702.0 446.5 L706.0 446.5 L710.0 446.4 L714.0 446.4 L718.0 446.3 L722.0 446.3 L726.0 446.2 L730.0 446.2 L734.0 446.1 L738.0 446.0 L742.0 445.9 L746.0 445.8 L750.0 445.7 L754.0 445.6 L758.0 445.5 L762.0 445.3 L766.0 445.2 L770.0 445.0 L774.0 444.8 L778.0 444.6 L782.0 444.4 L786.0 444.2 L790.0 444.0 L794.0 443.8 L798.0 443.6 L802.0 443.4 L806.0 443.1 L810.0 442.8 L814.0 442.6 L818.0 442.3 L822.0 441.9 L826.0 441.6 L830.0 441.2 L834.0 440.8 L838.0 440.4 L842.0 440.0 L846.0 439.5 L850.0 439.0 L854.0 438.4 L858.0 437.9 L862.0 437.3 L866.0 436.7 L870.0 436.1 L874.0 435.4 L878.0 434.8 L882.0 434.1 L886.0 433.5 L890.0 432.8 L894.0 432.1 L898.0 431.5 L902.0 430.8 L906.0 430.1 L910.0 429.5 L914.0 428.8 L918.0 428.2 L922.0 427.5 L926.0 426.7 L930.0 425.9 L934.0 425.1 L938.0 424.4 L942.0 423.6 L946.0 422.8 L950.0 422.0 L954.0 421.2 L958.0 420.4 L962.0 419.5 L966.0 418.7 L970.0 417.9 L974.0 417.1 L978.0 416.3 L982.0 415.5 L986.0 414.7 L990.0 413.9 L994.0 413.1 L998.0 412.2 L1002.0 411.3 L1006.0 410.3 L1010.0 409.3 L1014.0 408.2 L1018.0 407.0 L1022.0 405.9 L1026.0 404.7 L1030.0 403.4 L1034.0 402.2 L1038.0 400.9 L1042.0 399.7 L1046.0 398.4 L1050.0 397.1 L1054.0 395.8 L1058.0 394.5 L1062.0 393.2 L1066.0 391.9 L1070.0 390.5 L1074.0 389.1 L1078.0 387.6 L1082.0 386.2 L1086.0 385.0 L1090.0 383.9 L1094.0 382.8 L1098.0 381.7 L1102.0 380.6 L1106.0 379.5 L1110.0 378.5 L1114.0 377.4 L1118.0 376.3 L1122.0 375.2 L1126.0 374.1 L1130.0 373.1 L1134.0 372.0 L1134.5 371.8 L1134.5 372.7 L1134.0 372.9 L1130.0 374.2 L1126.0 375.5 L1122.0 376.8 L1118.0 378.0 L1114.0 379.3 L1110.0 380.6 L1106.0 381.9 L1102.0 383.2 L1098.0 384.5 L1094.0 385.8 L1090.0 387.1 L1086.0 388.5 L1082.0 389.8 L1078.0 391.5 L1074.0 393.2 L1070.0 394.9 L1066.0 396.5 L1062.0 398.0 L1058.0 399.5 L1054.0 401.0 L1050.0 402.5 L1046.0 404.0 L1042.0 405.5 L1038.0 406.9 L1034.0 408.4 L1030.0 409.8 L1026.0 411.2 L1022.0 412.6 L1018.0 413.9 L1014.0 415.2 L1010.0 416.5 L1006.0 417.7 L1002.0 418.8 L998.0 419.9 L994.0 420.9 L990.0 421.9 L986.0 422.8 L982.0 423.7 L978.0 424.6 L974.0 425.5 L970.0 426.5 L966.0 427.4 L962.0 428.4 L958.0 429.3 L954.0 430.2 L950.0 431.2 L946.0 432.1 L942.0 433.0 L938.0 433.9 L934.0 434.8 L930.0 435.7 L926.0 436.6 L922.0 437.6 L918.0 438.4 L914.0 439.1 L910.0 439.8 L906.0 440.6 L902.0 441.4 L898.0 442.1 L894.0 442.9 L890.0 443.7 L886.0 444.5 L882.0 445.2 L878.0 446.0 L874.0 446.7 L870.0 447.4 L866.0 448.2 L862.0 448.9 L858.0 449.5 L854.0 450.2 L850.0 450.8 L846.0 451.4 L842.0 452.0 L838.0 452.5 L834.0 453.0 L830.0 453.4 L826.0 453.8 L822.0 454.2 L818.0 454.6 L814.0 455.0 L810.0 455.3 L806.0 455.6 L802.0 455.9 L798.0 456.1 L794.0 456.4 L790.0 456.6 L786.0 456.9 L782.0 457.1 L778.0 457.3 L774.0 457.5 L770.0 457.8 L766.0 457.9 L762.0 458.1 L758.0 458.3 L754.0 458.4 L750.0 458.6 L746.0 458.7 L742.0 458.8 L738.0 458.9 L734.0 459.0 L730.0 459.1 L726.0 459.2 L722.0 459.2 L718.0 459.3 L714.0 459.4 L710.0 459.4 L706.0 459.4 L702.0 459.5 L698.0 459.5 L694.0 459.5 L690.0 459.6 L686.0 459.6 L682.0 459.6 L678.0 459.6 L674.0 459.6 L670.0 459.6 L666.0 459.6 L662.0 459.5 L658.0 459.5 L654.0 459.5 L650.0 459.4 L646.0 459.3 L642.0 459.3 L638.0 459.2 L634.0 459.1 L630.0 459.0 L626.0 458.8 L622.0 458.7 L618.0 458.6 L614.0 458.4 L610.0 458.2 L606.0 458.1 L602.0 457.9 L598.0 457.7 L594.0 457.5 L590.0 457.2 L586.0 457.0 L582.0 456.8 L578.0 456.6 L574.0 456.3 L570.0 456.0 L566.0 455.8 L562.0 455.5 L558.0 455.3 L554.0 455.0 L550.0 454.7 L546.0 454.4 L542.0 454.1 L538.0 453.9 L534.0 453.6 L530.0 453.3 L526.0 452.9 L522.0 452.6 L518.0 452.3 L514.0 451.9 L510.0 451.6 L506.0 451.2 L502.0 450.8 L498.0 450.4 L494.0 450.0 L490.0 449.5 L486.0 449.1 L482.0 448.6 L478.0 448.1 L474.0 447.6 L470.0 447.0 L466.0 446.5 L462.0 445.9 L458.0 445.4 L454.0 444.8 L450.0 444.2 L446.0 443.6 L442.0 443.0 L438.0 442.4 L434.0 441.8 L430.0 441.1 L426.0 440.5 L422.0 439.9 L418.0 439.3 L414.0 438.6 L410.0 438.0 L406.0 437.3 L402.0 436.7 L398.0 436.0 L394.0 435.4 L390.0 434.7 L386.0 434.0 L382.0 433.4 L378.0 432.7 L374.0 432.0 L370.0 431.3 L366.0 430.6 L362.0 429.9 L358.0 429.1 L354.0 428.4 L350.0 427.7 L346.0 427.0 L342.0 426.2 L338.0 425.5 L334.0 424.7 L330.0 424.0 L326.0 423.3 L322.0 422.5 L318.0 421.8 L314.0 421.0 L310.0 420.2 L306.0 419.4 L302.0 418.6 L298.0 417.8 L294.0 416.9 L290.0 416.1 L286.0 415.2 L282.0 414.3 L278.0 413.3 L274.0 412.3 L270.0 411.3 L266.0 410.2 L262.0 409.1 L258.0 408.0 L254.0 406.9 L250.0 405.7 L246.0 404.6 L242.0 403.4 L238.0 402.2 L234.0 401.0 L230.0 399.8 L226.0 398.6 L222.0 397.4 L218.0 396.4Z" fill="url(#l4)"/><path d="M218.0 336.5 L222.0 335.6 L226.0 334.6 L230.0 333.5 L234.0 332.4 L238.0 331.4 L242.0 330.3 L246.0 329.3 L250.0 328.2 L254.0 327.2 L258.0 326.2 L262.0 325.1 L266.0 324.1 L270.0 323.0 L274.0 322.0 L278.0 320.9 L282.0 319.9 L286.0 318.8 L290.0 317.8 L294.0 316.7 L298.0 315.6 L302.0 314.5 L306.0 313.4 L310.0 312.4 L314.0 311.3 L318.0 310.3 L322.0 309.2 L326.0 308.2 L330.0 307.2 L334.0 306.2 L338.0 305.2 L342.0 304.3 L346.0 303.4 L350.0 302.5 L354.0 301.7 L358.0 300.8 L362.0 300.0 L366.0 299.2 L370.0 298.5 L374.0 297.7 L378.0 297.0 L382.0 296.3 L386.0 295.6 L390.0 295.0 L394.0 294.3 L398.0 293.7 L402.0 293.1 L406.0 292.4 L410.0 291.8 L414.0 291.3 L418.0 290.7 L422.0 290.1 L426.0 289.5 L430.0 289.0 L434.0 288.5 L438.0 287.9 L442.0 287.4 L446.0 286.9 L450.0 286.4 L454.0 285.9 L458.0 285.4 L462.0 285.0 L466.0 284.5 L470.0 284.1 L474.0 283.7 L478.0 283.2 L482.0 282.8 L486.0 282.4 L490.0 282.0 L494.0 281.7 L498.0 281.3 L502.0 280.9 L506.0 280.6 L510.0 280.2 L514.0 279.9 L518.0 279.6 L522.0 279.3 L526.0 279.0 L530.0 278.7 L534.0 278.4 L538.0 278.2 L542.0 277.9 L546.0 277.7 L550.0 277.4 L554.0 277.2 L558.0 277.0 L562.0 276.8 L566.0 276.6 L570.0 276.4 L574.0 276.2 L578.0 276.1 L582.0 275.9 L586.0 275.8 L590.0 275.6 L594.0 275.5 L598.0 275.4 L602.0 275.2 L606.0 275.1 L610.0 275.0 L614.0 274.9 L618.0 274.8 L622.0 274.7 L626.0 274.6 L630.0 274.6 L634.0 274.5 L638.0 274.4 L642.0 274.4 L646.0 274.3 L650.0 274.3 L654.0 274.2 L658.0 274.2 L662.0 274.2 L666.0 274.2 L670.0 274.2 L674.0 274.2 L678.0 274.1 L682.0 274.1 L686.0 274.1 L690.0 274.2 L694.0 274.2 L698.0 274.2 L702.0 274.2 L706.0 274.2 L710.0 274.2 L714.0 274.3 L718.0 274.3 L722.0 274.4 L726.0 274.4 L730.0 274.5 L734.0 274.6 L738.0 274.7 L742.0 274.8 L746.0 274.9 L750.0 275.0 L754.0 275.2 L758.0 275.3 L762.0 275.4 L766.0 275.6 L770.0 275.7 L774.0 275.9 L778.0 276.1 L782.0 276.3 L786.0 276.5 L790.0 276.7 L794.0 276.9 L798.0 277.2 L802.0 277.4 L806.0 277.7 L810.0 278.0 L814.0 278.4 L818.0 278.7 L822.0 279.1 L826.0 279.5 L830.0 279.9 L834.0 280.4 L838.0 280.9 L842.0 281.4 L846.0 281.9 L850.0 282.5 L854.0 283.1 L858.0 283.6 L862.0 284.2 L866.0 284.8 L870.0 285.4 L874.0 286.0 L878.0 286.6 L882.0 287.2 L886.0 287.8 L890.0 288.5 L894.0 289.0 L898.0 289.6 L902.0 290.2 L906.0 290.8 L910.0 291.5 L914.0 292.3 L918.0 293.1 L922.0 293.8 L926.0 294.6 L930.0 295.4 L934.0 296.2 L938.0 297.0 L942.0 297.8 L946.0 298.6 L950.0 299.4 L954.0 300.3 L958.0 301.1 L962.0 302.0 L966.0 302.8 L970.0 303.7 L974.0 304.7 L978.0 305.6 L982.0 306.6 L986.0 307.6 L990.0 308.6 L994.0 309.6 L998.0 310.7 L1002.0 311.8 L1006.0 312.9 L1010.0 314.1 L1014.0 315.3 L1018.0 316.5 L1022.0 317.7 L1026.0 318.9 L1030.0 320.2 L1034.0 321.4 L1038.0 322.7 L1042.0 324.0 L1046.0 325.3 L1050.0 326.7 L1054.0 328.0 L1058.0 329.4 L1062.0 330.8 L1066.0 332.2 L1070.0 333.7 L1074.0 335.2 L1078.0 336.8 L1082.0 338.3 L1086.0 339.7 L1090.0 341.1 L1094.0 342.6 L1098.0 344.1 L1102.0 345.7 L1106.0 347.3 L1110.0 349.1 L1114.0 350.9 L1118.0 352.8 L1122.0 354.7 L1126.0 356.7 L1130.0 358.7 L1134.0 360.6 L1134.5 360.8 L1134.5 360.8 L1134.0 360.6 L1130.0 358.6 L1126.0 356.7 L1122.0 354.7 L1118.0 352.8 L1114.0 350.9 L1110.0 349.0 L1106.0 347.2 L1102.0 345.5 L1098.0 343.9 L1094.0 342.3 L1090.0 340.8 L1086.0 339.3 L1082.0 337.9 L1078.0 336.4 L1074.0 334.7 L1070.0 333.2 L1066.0 331.6 L1062.0 330.1 L1058.0 328.7 L1054.0 327.2 L1050.0 325.8 L1046.0 324.4 L1042.0 323.0 L1038.0 321.6 L1034.0 320.2 L1030.0 318.8 L1026.0 317.5 L1022.0 316.2 L1018.0 314.8 L1014.0 313.5 L1010.0 312.2 L1006.0 311.0 L1002.0 309.7 L998.0 308.5 L994.0 307.3 L990.0 306.1 L986.0 305.0 L982.0 303.8 L978.0 302.8 L974.0 301.7 L970.0 300.7 L966.0 299.6 L962.0 298.6 L958.0 297.6 L954.0 296.6 L950.0 295.7 L946.0 294.7 L942.0 293.8 L938.0 292.8 L934.0 291.9 L930.0 290.9 L926.0 290.0 L922.0 289.1 L918.0 288.1 L914.0 287.2 L910.0 286.3 L906.0 285.4 L902.0 284.7 L898.0 283.9 L894.0 283.2 L890.0 282.5 L886.0 281.7 L882.0 281.0 L878.0 280.2 L874.0 279.5 L870.0 278.7 L866.0 277.9 L862.0 277.2 L858.0 276.4 L854.0 275.7 L850.0 275.0 L846.0 274.3 L842.0 273.6 L838.0 272.9 L834.0 272.3 L830.0 271.6 L826.0 271.1 L822.0 270.5 L818.0 270.0 L814.0 269.6 L810.0 269.1 L806.0 268.7 L802.0 268.3 L798.0 268.0 L794.0 267.6 L790.0 267.3 L786.0 267.0 L782.0 266.7 L778.0 266.5 L774.0 266.2 L770.0 266.0 L766.0 265.8 L762.0 265.6 L758.0 265.4 L754.0 265.2 L750.0 265.0 L746.0 264.8 L742.0 264.7 L738.0 264.5 L734.0 264.4 L730.0 264.3 L726.0 264.2 L722.0 264.1 L718.0 264.0 L714.0 264.0 L710.0 263.9 L706.0 263.9 L702.0 263.9 L698.0 263.8 L694.0 263.8 L690.0 263.8 L686.0 263.8 L682.0 263.8 L678.0 263.8 L674.0 263.8 L670.0 263.8 L666.0 263.8 L662.0 263.9 L658.0 263.9 L654.0 263.9 L650.0 264.0 L646.0 264.1 L642.0 264.1 L638.0 264.2 L634.0 264.3 L630.0 264.4 L626.0 264.5 L622.0 264.6 L618.0 264.7 L614.0 264.9 L610.0 265.0 L606.0 265.2 L602.0 265.3 L598.0 265.5 L594.0 265.7 L590.0 265.9 L586.0 266.0 L582.0 266.3 L578.0 266.5 L574.0 266.7 L570.0 266.9 L566.0 267.2 L562.0 267.4 L558.0 267.7 L554.0 268.0 L550.0 268.3 L546.0 268.6 L542.0 268.9 L538.0 269.3 L534.0 269.6 L530.0 270.0 L526.0 270.4 L522.0 270.8 L518.0 271.2 L514.0 271.6 L510.0 272.0 L506.0 272.5 L502.0 272.9 L498.0 273.4 L494.0 273.9 L490.0 274.4 L486.0 274.9 L482.0 275.4 L478.0 275.9 L474.0 276.5 L470.0 277.0 L466.0 277.6 L462.0 278.1 L458.0 278.7 L454.0 279.3 L450.0 279.9 L446.0 280.6 L442.0 281.2 L438.0 281.9 L434.0 282.5 L430.0 283.2 L426.0 283.8 L422.0 284.5 L418.0 285.2 L414.0 285.9 L410.0 286.7 L406.0 287.4 L402.0 288.1 L398.0 288.9 L394.0 289.6 L390.0 290.4 L386.0 291.2 L382.0 292.0 L378.0 292.8 L374.0 293.7 L370.0 294.5 L366.0 295.4 L362.0 296.4 L358.0 297.3 L354.0 298.3 L350.0 299.2 L346.0 300.2 L342.0 301.3 L338.0 302.3 L334.0 303.4 L330.0 304.5 L326.0 305.7 L322.0 306.8 L318.0 308.0 L314.0 309.2 L310.0 310.3 L306.0 311.5 L302.0 312.7 L298.0 313.9 L294.0 315.1 L290.0 316.2 L286.0 317.4 L282.0 318.5 L278.0 319.7 L274.0 320.8 L270.0 321.9 L266.0 323.0 L262.0 324.1 L258.0 325.2 L254.0 326.3 L250.0 327.4 L246.0 328.5 L242.0 329.6 L238.0 330.7 L234.0 331.8 L230.0 332.9 L226.0 334.0 L222.0 335.1 L218.0 336.1Z" fill="url(#u5)"/><path d="M218.0 396.4 L222.0 397.4 L226.0 398.6 L230.0 399.8 L234.0 401.0 L238.0 402.2 L242.0 403.4 L246.0 404.6 L250.0 405.7 L254.0 406.9 L258.0 408.0 L262.0 409.1 L266.0 410.2 L270.0 411.3 L274.0 412.3 L278.0 413.3 L282.0 414.3 L286.0 415.2 L290.0 416.1 L294.0 416.9 L298.0 417.8 L302.0 418.6 L306.0 419.4 L310.0 420.2 L314.0 421.0 L318.0 421.8 L322.0 422.5 L326.0 423.3 L330.0 424.0 L334.0 424.7 L338.0 425.5 L342.0 426.2 L346.0 427.0 L350.0 427.7 L354.0 428.4 L358.0 429.1 L362.0 429.9 L366.0 430.6 L370.0 431.3 L374.0 432.0 L378.0 432.7 L382.0 433.4 L386.0 434.0 L390.0 434.7 L394.0 435.4 L398.0 436.0 L402.0 436.7 L406.0 437.3 L410.0 438.0 L414.0 438.6 L418.0 439.3 L422.0 439.9 L426.0 440.5 L430.0 441.1 L434.0 441.8 L438.0 442.4 L442.0 443.0 L446.0 443.6 L450.0 444.2 L454.0 444.8 L458.0 445.4 L462.0 445.9 L466.0 446.5 L470.0 447.0 L474.0 447.6 L478.0 448.1 L482.0 448.6 L486.0 449.1 L490.0 449.5 L494.0 450.0 L498.0 450.4 L502.0 450.8 L506.0 451.2 L510.0 451.6 L514.0 451.9 L518.0 452.3 L522.0 452.6 L526.0 452.9 L530.0 453.3 L534.0 453.6 L538.0 453.9 L542.0 454.1 L546.0 454.4 L550.0 454.7 L554.0 455.0 L558.0 455.3 L562.0 455.5 L566.0 455.8 L570.0 456.0 L574.0 456.3 L578.0 456.6 L582.0 456.8 L586.0 457.0 L590.0 457.2 L594.0 457.5 L598.0 457.7 L602.0 457.9 L606.0 458.1 L610.0 458.2 L614.0 458.4 L618.0 458.6 L622.0 458.7 L626.0 458.8 L630.0 459.0 L634.0 459.1 L638.0 459.2 L642.0 459.3 L646.0 459.3 L650.0 459.4 L654.0 459.5 L658.0 459.5 L662.0 459.5 L666.0 459.6 L670.0 459.6 L674.0 459.6 L678.0 459.6 L682.0 459.6 L686.0 459.6 L690.0 459.6 L694.0 459.5 L698.0 459.5 L702.0 459.5 L706.0 459.4 L710.0 459.4 L714.0 459.4 L718.0 459.3 L722.0 459.2 L726.0 459.2 L730.0 459.1 L734.0 459.0 L738.0 458.9 L742.0 458.8 L746.0 458.7 L750.0 458.6 L754.0 458.4 L758.0 458.3 L762.0 458.1 L766.0 457.9 L770.0 457.8 L774.0 457.5 L778.0 457.3 L782.0 457.1 L786.0 456.9 L790.0 456.6 L794.0 456.4 L798.0 456.1 L802.0 455.9 L806.0 455.6 L810.0 455.3 L814.0 455.0 L818.0 454.6 L822.0 454.2 L826.0 453.8 L830.0 453.4 L834.0 453.0 L838.0 452.5 L842.0 452.0 L846.0 451.4 L850.0 450.8 L854.0 450.2 L858.0 449.5 L862.0 448.9 L866.0 448.2 L870.0 447.4 L874.0 446.7 L878.0 446.0 L882.0 445.2 L886.0 444.5 L890.0 443.7 L894.0 442.9 L898.0 442.1 L902.0 441.4 L906.0 440.6 L910.0 439.8 L914.0 439.1 L918.0 438.4 L922.0 437.6 L926.0 436.6 L930.0 435.7 L934.0 434.8 L938.0 433.9 L942.0 433.0 L946.0 432.1 L950.0 431.2 L954.0 430.2 L958.0 429.3 L962.0 428.4 L966.0 427.4 L970.0 426.5 L974.0 425.5 L978.0 424.6 L982.0 423.7 L986.0 422.8 L990.0 421.9 L994.0 420.9 L998.0 419.9 L1002.0 418.8 L1006.0 417.7 L1010.0 416.5 L1014.0 415.2 L1018.0 413.9 L1022.0 412.6 L1026.0 411.2 L1030.0 409.8 L1034.0 408.4 L1038.0 406.9 L1042.0 405.5 L1046.0 404.0 L1050.0 402.5 L1054.0 401.0 L1058.0 399.5 L1062.0 398.0 L1066.0 396.5 L1070.0 394.9 L1074.0 393.2 L1078.0 391.5 L1082.0 389.8 L1086.0 388.5 L1090.0 387.1 L1094.0 385.8 L1098.0 384.5 L1102.0 383.2 L1106.0 381.9 L1110.0 380.6 L1114.0 379.3 L1118.0 378.0 L1122.0 376.8 L1126.0 375.5 L1130.0 374.2 L1134.0 372.9 L1134.5 372.7 L1134.5 373.3 L1134.0 373.5 L1130.0 375.0 L1126.0 376.4 L1122.0 377.9 L1118.0 379.3 L1114.0 380.8 L1110.0 382.2 L1106.0 383.7 L1102.0 385.1 L1098.0 386.6 L1094.0 388.0 L1090.0 389.5 L1086.0 391.0 L1082.0 392.5 L1078.0 394.3 L1074.0 396.2 L1070.0 398.0 L1066.0 399.8 L1062.0 401.5 L1058.0 403.1 L1054.0 404.8 L1050.0 406.4 L1046.0 408.0 L1042.0 409.6 L1038.0 411.2 L1034.0 412.8 L1030.0 414.4 L1026.0 415.9 L1022.0 417.5 L1018.0 418.9 L1014.0 420.4 L1010.0 421.8 L1006.0 423.1 L1002.0 424.3 L998.0 425.5 L994.0 426.6 L990.0 427.6 L986.0 428.7 L982.0 429.7 L978.0 430.7 L974.0 431.7 L970.0 432.7 L966.0 433.7 L962.0 434.8 L958.0 435.8 L954.0 436.8 L950.0 437.9 L946.0 438.9 L942.0 439.9 L938.0 440.9 L934.0 441.9 L930.0 442.9 L926.0 443.9 L922.0 444.9 L918.0 445.7 L914.0 446.6 L910.0 447.4 L906.0 448.2 L902.0 449.0 L898.0 449.9 L894.0 450.7 L890.0 451.6 L886.0 452.4 L882.0 453.3 L878.0 454.1 L874.0 454.9 L870.0 455.7 L866.0 456.5 L862.0 457.3 L858.0 458.0 L854.0 458.7 L850.0 459.4 L846.0 460.1 L842.0 460.7 L838.0 461.2 L834.0 461.8 L830.0 462.3 L826.0 462.7 L822.0 463.2 L818.0 463.6 L814.0 464.0 L810.0 464.3 L806.0 464.7 L802.0 465.0 L798.0 465.3 L794.0 465.5 L790.0 465.8 L786.0 466.1 L782.0 466.3 L778.0 466.6 L774.0 466.8 L770.0 467.0 L766.0 467.2 L762.0 467.4 L758.0 467.6 L754.0 467.8 L750.0 467.9 L746.0 468.1 L742.0 468.2 L738.0 468.3 L734.0 468.4 L730.0 468.5 L726.0 468.6 L722.0 468.7 L718.0 468.7 L714.0 468.8 L710.0 468.8 L706.0 468.9 L702.0 468.9 L698.0 469.0 L694.0 469.0 L690.0 469.0 L686.0 469.0 L682.0 469.1 L678.0 469.1 L674.0 469.1 L670.0 469.0 L666.0 469.0 L662.0 469.0 L658.0 469.0 L654.0 468.9 L650.0 468.8 L646.0 468.8 L642.0 468.7 L638.0 468.6 L634.0 468.5 L630.0 468.4 L626.0 468.2 L622.0 468.1 L618.0 467.9 L614.0 467.7 L610.0 467.6 L606.0 467.4 L602.0 467.2 L598.0 466.9 L594.0 466.7 L590.0 466.5 L586.0 466.2 L582.0 466.0 L578.0 465.7 L574.0 465.4 L570.0 465.2 L566.0 464.9 L562.0 464.6 L558.0 464.3 L554.0 464.0 L550.0 463.7 L546.0 463.4 L542.0 463.1 L538.0 462.8 L534.0 462.4 L530.0 462.1 L526.0 461.7 L522.0 461.4 L518.0 461.0 L514.0 460.6 L510.0 460.2 L506.0 459.8 L502.0 459.4 L498.0 459.0 L494.0 458.5 L490.0 458.0 L486.0 457.5 L482.0 457.0 L478.0 456.4 L474.0 455.9 L470.0 455.3 L466.0 454.7 L462.0 454.1 L458.0 453.4 L454.0 452.8 L450.0 452.1 L446.0 451.5 L442.0 450.8 L438.0 450.2 L434.0 449.5 L430.0 448.8 L426.0 448.1 L422.0 447.4 L418.0 446.7 L414.0 446.0 L410.0 445.3 L406.0 444.6 L402.0 443.9 L398.0 443.2 L394.0 442.5 L390.0 441.7 L386.0 441.0 L382.0 440.3 L378.0 439.5 L374.0 438.8 L370.0 438.0 L366.0 437.2 L362.0 436.4 L358.0 435.6 L354.0 434.8 L350.0 434.0 L346.0 433.2 L342.0 432.4 L338.0 431.6 L334.0 430.8 L330.0 430.0 L326.0 429.2 L322.0 428.4 L318.0 427.5 L314.0 426.7 L310.0 425.8 L306.0 425.0 L302.0 424.1 L298.0 423.2 L294.0 422.2 L290.0 421.3 L286.0 420.3 L282.0 419.3 L278.0 418.2 L274.0 417.1 L270.0 416.0 L266.0 414.8 L262.0 413.7 L258.0 412.4 L254.0 411.2 L250.0 409.9 L246.0 408.7 L242.0 407.4 L238.0 406.1 L234.0 404.8 L230.0 403.4 L226.0 402.1 L222.0 400.8 L218.0 399.7Z" fill="url(#l5)"/><path d="M218.0 336.1 L222.0 335.1 L226.0 334.0 L230.0 332.9 L234.0 331.8 L238.0 330.7 L242.0 329.6 L246.0 328.5 L250.0 327.4 L254.0 326.3 L258.0 325.2 L262.0 324.1 L266.0 323.0 L270.0 321.9 L274.0 320.8 L278.0 319.7 L282.0 318.5 L286.0 317.4 L290.0 316.2 L294.0 315.1 L298.0 313.9 L302.0 312.7 L306.0 311.5 L310.0 310.3 L314.0 309.2 L318.0 308.0 L322.0 306.8 L326.0 305.7 L330.0 304.5 L334.0 303.4 L338.0 302.3 L342.0 301.3 L346.0 300.2 L350.0 299.2 L354.0 298.3 L358.0 297.3 L362.0 296.4 L366.0 295.4 L370.0 294.5 L374.0 293.7 L378.0 292.8 L382.0 292.0 L386.0 291.2 L390.0 290.4 L394.0 289.6 L398.0 288.9 L402.0 288.1 L406.0 287.4 L410.0 286.7 L414.0 285.9 L418.0 285.2 L422.0 284.5 L426.0 283.8 L430.0 283.2 L434.0 282.5 L438.0 281.9 L442.0 281.2 L446.0 280.6 L450.0 279.9 L454.0 279.3 L458.0 278.7 L462.0 278.1 L466.0 277.6 L470.0 277.0 L474.0 276.5 L478.0 275.9 L482.0 275.4 L486.0 274.9 L490.0 274.4 L494.0 273.9 L498.0 273.4 L502.0 272.9 L506.0 272.5 L510.0 272.0 L514.0 271.6 L518.0 271.2 L522.0 270.8 L526.0 270.4 L530.0 270.0 L534.0 269.6 L538.0 269.3 L542.0 268.9 L546.0 268.6 L550.0 268.3 L554.0 268.0 L558.0 267.7 L562.0 267.4 L566.0 267.2 L570.0 266.9 L574.0 266.7 L578.0 266.5 L582.0 266.3 L586.0 266.0 L590.0 265.9 L594.0 265.7 L598.0 265.5 L602.0 265.3 L606.0 265.2 L610.0 265.0 L614.0 264.9 L618.0 264.7 L622.0 264.6 L626.0 264.5 L630.0 264.4 L634.0 264.3 L638.0 264.2 L642.0 264.1 L646.0 264.1 L650.0 264.0 L654.0 263.9 L658.0 263.9 L662.0 263.9 L666.0 263.8 L670.0 263.8 L674.0 263.8 L678.0 263.8 L682.0 263.8 L686.0 263.8 L690.0 263.8 L694.0 263.8 L698.0 263.8 L702.0 263.9 L706.0 263.9 L710.0 263.9 L714.0 264.0 L718.0 264.0 L722.0 264.1 L726.0 264.2 L730.0 264.3 L734.0 264.4 L738.0 264.5 L742.0 264.7 L746.0 264.8 L750.0 265.0 L754.0 265.2 L758.0 265.4 L762.0 265.6 L766.0 265.8 L770.0 266.0 L774.0 266.2 L778.0 266.5 L782.0 266.7 L786.0 267.0 L790.0 267.3 L794.0 267.6 L798.0 268.0 L802.0 268.3 L806.0 268.7 L810.0 269.1 L814.0 269.6 L818.0 270.0 L822.0 270.5 L826.0 271.1 L830.0 271.6 L834.0 272.3 L838.0 272.9 L842.0 273.6 L846.0 274.3 L850.0 275.0 L854.0 275.7 L858.0 276.4 L862.0 277.2 L866.0 277.9 L870.0 278.7 L874.0 279.5 L878.0 280.2 L882.0 281.0 L886.0 281.7 L890.0 282.5 L894.0 283.2 L898.0 283.9 L902.0 284.7 L906.0 285.4 L910.0 286.3 L914.0 287.2 L918.0 288.1 L922.0 289.1 L926.0 290.0 L930.0 290.9 L934.0 291.9 L938.0 292.8 L942.0 293.8 L946.0 294.7 L950.0 295.7 L954.0 296.6 L958.0 297.6 L962.0 298.6 L966.0 299.6 L970.0 300.7 L974.0 301.7 L978.0 302.8 L982.0 303.8 L986.0 305.0 L990.0 306.1 L994.0 307.3 L998.0 308.5 L1002.0 309.7 L1006.0 311.0 L1010.0 312.2 L1014.0 313.5 L1018.0 314.8 L1022.0 316.2 L1026.0 317.5 L1030.0 318.8 L1034.0 320.2 L1038.0 321.6 L1042.0 323.0 L1046.0 324.4 L1050.0 325.8 L1054.0 327.2 L1058.0 328.7 L1062.0 330.1 L1066.0 331.6 L1070.0 333.2 L1074.0 334.7 L1078.0 336.4 L1082.0 337.9 L1086.0 339.3 L1090.0 340.8 L1094.0 342.3 L1098.0 343.9 L1102.0 345.5 L1106.0 347.2 L1110.0 349.0 L1114.0 350.9 L1118.0 352.8 L1122.0 354.7 L1126.0 356.7 L1130.0 358.6 L1134.0 360.6 L1134.5 360.8 L1134.5 359.2 L1134.0 358.9 L1130.0 356.5 L1126.0 354.0 L1122.0 351.5 L1118.0 349.1 L1114.0 346.7 L1110.0 344.4 L1106.0 342.2 L1102.0 340.0 L1098.0 338.0 L1094.0 336.0 L1090.0 334.1 L1086.0 332.3 L1082.0 330.5 L1078.0 328.9 L1074.0 327.2 L1070.0 325.7 L1066.0 324.1 L1062.0 322.6 L1058.0 321.2 L1054.0 319.7 L1050.0 318.3 L1046.0 316.9 L1042.0 315.5 L1038.0 314.1 L1034.0 312.7 L1030.0 311.3 L1026.0 310.0 L1022.0 308.7 L1018.0 307.3 L1014.0 306.0 L1010.0 304.7 L1006.0 303.5 L1002.0 302.2 L998.0 301.0 L994.0 299.8 L990.0 298.6 L986.0 297.5 L982.0 296.3 L978.0 295.3 L974.0 294.2 L970.0 293.2 L966.0 292.1 L962.0 291.1 L958.0 290.1 L954.0 289.1 L950.0 288.2 L946.0 287.2 L942.0 286.3 L938.0 285.3 L934.0 284.4 L930.0 283.4 L926.0 282.5 L922.0 281.6 L918.0 280.6 L914.0 279.7 L910.0 278.8 L906.0 277.9 L902.0 277.2 L898.0 276.4 L894.0 275.7 L890.0 275.0 L886.0 274.2 L882.0 273.5 L878.0 272.7 L874.0 272.0 L870.0 271.2 L866.0 270.4 L862.0 269.7 L858.0 268.9 L854.0 268.2 L850.0 267.5 L846.0 266.8 L842.0 266.1 L838.0 265.4 L834.0 264.8 L830.0 264.1 L826.0 263.6 L822.0 263.0 L818.0 262.5 L814.0 262.1 L810.0 261.6 L806.0 261.2 L802.0 260.8 L798.0 260.5 L794.0 260.1 L790.0 259.8 L786.0 259.5 L782.0 259.2 L778.0 259.0 L774.0 258.7 L770.0 258.5 L766.0 258.3 L762.0 258.1 L758.0 257.9 L754.0 257.7 L750.0 257.5 L746.0 257.3 L742.0 257.2 L738.0 257.0 L734.0 256.9 L730.0 256.8 L726.0 256.7 L722.0 256.6 L718.0 256.5 L714.0 256.5 L710.0 256.4 L706.0 256.4 L702.0 256.4 L698.0 256.3 L694.0 256.3 L690.0 256.3 L686.0 256.3 L682.0 256.3 L678.0 256.3 L674.0 256.3 L670.0 256.3 L666.0 256.3 L662.0 256.4 L658.0 256.4 L654.0 256.4 L650.0 256.5 L646.0 256.6 L642.0 256.6 L638.0 256.7 L634.0 256.8 L630.0 256.9 L626.0 257.0 L622.0 257.1 L618.0 257.2 L614.0 257.4 L610.0 257.5 L606.0 257.7 L602.0 257.8 L598.0 258.0 L594.0 258.2 L590.0 258.4 L586.0 258.5 L582.0 258.8 L578.0 259.0 L574.0 259.2 L570.0 259.4 L566.0 259.7 L562.0 259.9 L558.0 260.2 L554.0 260.5 L550.0 260.8 L546.0 261.1 L542.0 261.4 L538.0 261.8 L534.0 262.1 L530.0 262.5 L526.0 262.9 L522.0 263.3 L518.0 263.7 L514.0 264.1 L510.0 264.5 L506.0 265.0 L502.0 265.4 L498.0 265.9 L494.0 266.4 L490.0 266.9 L486.0 267.4 L482.0 267.9 L478.0 268.4 L474.0 269.0 L470.0 269.5 L466.0 270.1 L462.0 270.6 L458.0 271.2 L454.0 271.8 L450.0 272.4 L446.0 273.1 L442.0 273.7 L438.0 274.4 L434.0 275.0 L430.0 275.7 L426.0 276.3 L422.0 277.0 L418.0 277.7 L414.0 278.4 L410.0 279.2 L406.0 279.9 L402.0 280.6 L398.0 281.4 L394.0 282.1 L390.0 282.9 L386.0 283.7 L382.0 284.5 L378.0 285.3 L374.0 286.2 L370.0 287.0 L366.0 287.9 L362.0 288.9 L358.0 289.8 L354.0 290.8 L350.0 291.7 L346.0 292.7 L342.0 293.8 L338.0 294.8 L334.0 295.9 L330.0 297.0 L326.0 298.2 L322.0 299.3 L318.0 300.5 L314.0 301.7 L310.0 302.8 L306.0 304.0 L302.0 305.2 L298.0 306.4 L294.0 307.6 L290.0 308.7 L286.0 309.9 L282.0 311.0 L278.0 312.2 L274.0 313.3 L270.0 314.4 L266.0 315.5 L262.0 316.6 L258.0 317.7 L254.0 318.8 L250.0 319.9 L246.0 321.0 L242.0 322.1 L238.0 323.2 L234.0 324.3 L230.0 325.4 L226.0 326.5 L222.0 327.6 L218.0 328.6Z" fill="url(#u6)"/><path d="M218.0 399.7 L222.0 400.8 L226.0 402.1 L230.0 403.4 L234.0 404.8 L238.0 406.1 L242.0 407.4 L246.0 408.7 L250.0 409.9 L254.0 411.2 L258.0 412.4 L262.0 413.7 L266.0 414.8 L270.0 416.0 L274.0 417.1 L278.0 418.2 L282.0 419.3 L286.0 420.3 L290.0 421.3 L294.0 422.2 L298.0 423.2 L302.0 424.1 L306.0 425.0 L310.0 425.8 L314.0 426.7 L318.0 427.5 L322.0 428.4 L326.0 429.2 L330.0 430.0 L334.0 430.8 L338.0 431.6 L342.0 432.4 L346.0 433.2 L350.0 434.0 L354.0 434.8 L358.0 435.6 L362.0 436.4 L366.0 437.2 L370.0 438.0 L374.0 438.8 L378.0 439.5 L382.0 440.3 L386.0 441.0 L390.0 441.7 L394.0 442.5 L398.0 443.2 L402.0 443.9 L406.0 444.6 L410.0 445.3 L414.0 446.0 L418.0 446.7 L422.0 447.4 L426.0 448.1 L430.0 448.8 L434.0 449.5 L438.0 450.2 L442.0 450.8 L446.0 451.5 L450.0 452.1 L454.0 452.8 L458.0 453.4 L462.0 454.1 L466.0 454.7 L470.0 455.3 L474.0 455.9 L478.0 456.4 L482.0 457.0 L486.0 457.5 L490.0 458.0 L494.0 458.5 L498.0 459.0 L502.0 459.4 L506.0 459.8 L510.0 460.2 L514.0 460.6 L518.0 461.0 L522.0 461.4 L526.0 461.7 L530.0 462.1 L534.0 462.4 L538.0 462.8 L542.0 463.1 L546.0 463.4 L550.0 463.7 L554.0 464.0 L558.0 464.3 L562.0 464.6 L566.0 464.9 L570.0 465.2 L574.0 465.4 L578.0 465.7 L582.0 466.0 L586.0 466.2 L590.0 466.5 L594.0 466.7 L598.0 466.9 L602.0 467.2 L606.0 467.4 L610.0 467.6 L614.0 467.7 L618.0 467.9 L622.0 468.1 L626.0 468.2 L630.0 468.4 L634.0 468.5 L638.0 468.6 L642.0 468.7 L646.0 468.8 L650.0 468.8 L654.0 468.9 L658.0 469.0 L662.0 469.0 L666.0 469.0 L670.0 469.0 L674.0 469.1 L678.0 469.1 L682.0 469.1 L686.0 469.0 L690.0 469.0 L694.0 469.0 L698.0 469.0 L702.0 468.9 L706.0 468.9 L710.0 468.8 L714.0 468.8 L718.0 468.7 L722.0 468.7 L726.0 468.6 L730.0 468.5 L734.0 468.4 L738.0 468.3 L742.0 468.2 L746.0 468.1 L750.0 467.9 L754.0 467.8 L758.0 467.6 L762.0 467.4 L766.0 467.2 L770.0 467.0 L774.0 466.8 L778.0 466.6 L782.0 466.3 L786.0 466.1 L790.0 465.8 L794.0 465.5 L798.0 465.3 L802.0 465.0 L806.0 464.7 L810.0 464.3 L814.0 464.0 L818.0 463.6 L822.0 463.2 L826.0 462.7 L830.0 462.3 L834.0 461.8 L838.0 461.2 L842.0 460.7 L846.0 460.1 L850.0 459.4 L854.0 458.7 L858.0 458.0 L862.0 457.3 L866.0 456.5 L870.0 455.7 L874.0 454.9 L878.0 454.1 L882.0 453.3 L886.0 452.4 L890.0 451.6 L894.0 450.7 L898.0 449.9 L902.0 449.0 L906.0 448.2 L910.0 447.4 L914.0 446.6 L918.0 445.7 L922.0 444.9 L926.0 443.9 L930.0 442.9 L934.0 441.9 L938.0 440.9 L942.0 439.9 L946.0 438.9 L950.0 437.9 L954.0 436.8 L958.0 435.8 L962.0 434.8 L966.0 433.7 L970.0 432.7 L974.0 431.7 L978.0 430.7 L982.0 429.7 L986.0 428.7 L990.0 427.6 L994.0 426.6 L998.0 425.5 L1002.0 424.3 L1006.0 423.1 L1010.0 421.8 L1014.0 420.4 L1018.0 418.9 L1022.0 417.5 L1026.0 415.9 L1030.0 414.4 L1034.0 412.8 L1038.0 411.2 L1042.0 409.6 L1046.0 408.0 L1050.0 406.4 L1054.0 404.8 L1058.0 403.1 L1062.0 401.5 L1066.0 399.8 L1070.0 398.0 L1074.0 396.2 L1078.0 394.3 L1082.0 392.5 L1086.0 391.0 L1090.0 389.5 L1094.0 388.0 L1098.0 386.6 L1102.0 385.1 L1106.0 383.7 L1110.0 382.2 L1114.0 380.8 L1118.0 379.3 L1122.0 377.9 L1126.0 376.4 L1130.0 375.0 L1134.0 373.5 L1134.5 373.3 L1134.5 374.8 L1134.0 375.1 L1130.0 376.9 L1126.0 378.7 L1122.0 380.5 L1118.0 382.3 L1114.0 384.1 L1110.0 385.9 L1106.0 387.7 L1102.0 389.5 L1098.0 391.4 L1094.0 393.2 L1090.0 395.0 L1086.0 396.9 L1082.0 398.8 L1078.0 400.7 L1074.0 402.6 L1070.0 404.5 L1066.0 406.4 L1062.0 408.1 L1058.0 409.9 L1054.0 411.6 L1050.0 413.3 L1046.0 415.0 L1042.0 416.7 L1038.0 418.3 L1034.0 420.0 L1030.0 421.6 L1026.0 423.2 L1022.0 424.8 L1018.0 426.3 L1014.0 427.8 L1010.0 429.3 L1006.0 430.7 L1002.0 431.9 L998.0 433.2 L994.0 434.3 L990.0 435.4 L986.0 436.5 L982.0 437.5 L978.0 438.6 L974.0 439.6 L970.0 440.7 L966.0 441.8 L962.0 442.9 L958.0 444.0 L954.0 445.0 L950.0 446.1 L946.0 447.1 L942.0 448.2 L938.0 449.2 L934.0 450.3 L930.0 451.3 L926.0 452.3 L922.0 453.4 L918.0 454.3 L914.0 455.2 L910.0 456.0 L906.0 456.9 L902.0 457.7 L898.0 458.6 L894.0 459.5 L890.0 460.4 L886.0 461.3 L882.0 462.2 L878.0 463.0 L874.0 463.9 L870.0 464.7 L866.0 465.5 L862.0 466.3 L858.0 467.1 L854.0 467.8 L850.0 468.6 L846.0 469.2 L842.0 469.9 L838.0 470.5 L834.0 471.0 L830.0 471.5 L826.0 472.0 L822.0 472.5 L818.0 472.9 L814.0 473.3 L810.0 473.7 L806.0 474.0 L802.0 474.3 L798.0 474.7 L794.0 475.0 L790.0 475.2 L786.0 475.5 L782.0 475.8 L778.0 476.0 L774.0 476.3 L770.0 476.5 L766.0 476.7 L762.0 476.9 L758.0 477.1 L754.0 477.3 L750.0 477.5 L746.0 477.6 L742.0 477.7 L738.0 477.8 L734.0 478.0 L730.0 478.0 L726.0 478.1 L722.0 478.2 L718.0 478.3 L714.0 478.3 L710.0 478.4 L706.0 478.4 L702.0 478.5 L698.0 478.5 L694.0 478.6 L690.0 478.6 L686.0 478.6 L682.0 478.6 L678.0 478.6 L674.0 478.6 L670.0 478.6 L666.0 478.6 L662.0 478.6 L658.0 478.5 L654.0 478.5 L650.0 478.4 L646.0 478.3 L642.0 478.2 L638.0 478.1 L634.0 478.0 L630.0 477.9 L626.0 477.8 L622.0 477.6 L618.0 477.4 L614.0 477.2 L610.0 477.1 L606.0 476.8 L602.0 476.6 L598.0 476.4 L594.0 476.2 L590.0 475.9 L586.0 475.7 L582.0 475.4 L578.0 475.1 L574.0 474.8 L570.0 474.6 L566.0 474.3 L562.0 474.0 L558.0 473.6 L554.0 473.3 L550.0 473.0 L546.0 472.7 L542.0 472.4 L538.0 472.0 L534.0 471.7 L530.0 471.4 L526.0 471.0 L522.0 470.6 L518.0 470.2 L514.0 469.8 L510.0 469.4 L506.0 469.0 L502.0 468.5 L498.0 468.1 L494.0 467.6 L490.0 467.1 L486.0 466.6 L482.0 466.0 L478.0 465.4 L474.0 464.9 L470.0 464.2 L466.0 463.6 L462.0 463.0 L458.0 462.3 L454.0 461.7 L450.0 461.0 L446.0 460.3 L442.0 459.6 L438.0 458.9 L434.0 458.2 L430.0 457.5 L426.0 456.8 L422.0 456.1 L418.0 455.3 L414.0 454.6 L410.0 453.9 L406.0 453.2 L402.0 452.4 L398.0 451.7 L394.0 450.9 L390.0 450.1 L386.0 449.4 L382.0 448.6 L378.0 447.8 L374.0 447.0 L370.0 446.2 L366.0 445.4 L362.0 444.6 L358.0 443.8 L354.0 442.9 L350.0 442.1 L346.0 441.3 L342.0 440.4 L338.0 439.6 L334.0 438.7 L330.0 437.9 L326.0 437.0 L322.0 436.2 L318.0 435.3 L314.0 434.4 L310.0 433.5 L306.0 432.6 L302.0 431.7 L298.0 430.8 L294.0 429.8 L290.0 428.8 L286.0 427.8 L282.0 426.7 L278.0 425.6 L274.0 424.5 L270.0 423.3 L266.0 422.1 L262.0 420.9 L258.0 419.6 L254.0 418.3 L250.0 417.0 L246.0 415.6 L242.0 414.3 L238.0 412.9 L234.0 411.6 L230.0 410.2 L226.0 408.8 L222.0 407.5 L218.0 406.3Z" fill="url(#l6)"/><path d="M275.0 357.5 L278.0 357.5 L282.0 357.5 L286.0 357.5 L290.0 357.5 L294.0 357.5 L298.0 357.5 L302.0 357.5 L306.0 357.5 L310.0 357.5 L314.0 357.5 L318.0 357.5 L322.0 357.5 L326.0 357.5 L330.0 357.5 L334.0 357.5 L338.0 357.5 L342.0 357.5 L346.0 357.5 L350.0 357.5 L354.0 357.5 L358.0 357.5 L362.0 357.5 L366.0 357.5 L370.0 357.5 L374.0 357.5 L378.0 357.5 L382.0 357.5 L386.0 357.5 L390.0 357.5 L394.0 357.5 L398.0 357.5 L402.0 357.5 L406.0 357.5 L410.0 357.5 L414.0 357.5 L418.0 357.5 L422.0 357.5 L426.0 357.5 L430.0 357.5 L434.0 357.5 L438.0 357.5 L442.0 357.5 L446.0 357.5 L450.0 357.5 L454.0 357.5 L458.0 357.5 L462.0 357.5 L466.0 357.5 L470.0 357.5 L474.0 357.5 L478.0 357.5 L482.0 357.5 L486.0 357.5 L490.0 357.5 L494.0 357.5 L498.0 357.5 L502.0 357.5 L506.0 357.5 L510.0 357.5 L514.0 357.5 L518.0 357.5 L522.0 357.5 L526.0 357.5 L530.0 357.5 L534.0 357.5 L538.0 357.5 L542.0 357.5 L546.0 357.5 L550.0 357.5 L554.0 357.5 L558.0 357.5 L562.0 357.5 L566.0 357.5 L570.0 357.5 L574.0 357.5 L578.0 357.5 L582.0 357.5 L586.0 357.5 L590.0 357.5 L594.0 357.5 L598.0 357.5 L602.0 357.5 L606.0 357.5 L610.0 357.5 L614.0 357.5 L618.0 357.5 L622.0 357.5 L626.0 357.5 L630.0 357.5 L634.0 357.5 L638.0 357.5 L642.0 357.5 L646.0 357.5 L650.0 357.5 L654.0 357.5 L658.0 357.5 L662.0 357.5 L666.0 357.5 L670.0 357.5 L674.0 357.5 L678.0 357.5 L682.0 357.5 L686.0 357.5 L690.0 357.5 L694.0 357.5 L698.0 357.5 L702.0 357.5 L706.0 357.5 L710.0 357.5 L714.0 357.5 L718.0 357.5 L722.0 357.5 L726.0 357.5 L730.0 357.5 L734.0 357.5 L738.0 357.5 L742.0 357.5 L746.0 357.5 L750.0 357.5 L754.0 357.5 L758.0 357.5 L762.0 357.5 L766.0 357.5 L770.0 357.5 L774.0 357.5 L778.0 357.5 L782.0 357.5 L786.0 357.5 L790.0 357.5 L794.0 357.5 L798.0 357.5 L802.0 357.5 L806.0 357.5 L810.0 357.5 L814.0 357.5 L818.0 357.5 L822.0 357.5 L826.0 357.5 L830.0 357.5 L834.0 357.5 L838.0 357.5 L842.0 357.5 L846.0 357.5 L850.0 357.5 L854.0 357.5 L858.0 357.5 L862.0 357.5 L866.0 357.5 L870.0 357.5 L874.0 357.5 L878.0 357.5 L882.0 357.5 L886.0 357.5 L890.0 357.5 L894.0 357.5 L898.0 357.5 L902.0 357.5 L906.0 357.5 L910.0 357.5 L914.0 357.5 L918.0 357.5 L922.0 357.5 L926.0 357.5 L930.0 357.5 L934.0 357.5 L938.0 357.5 L942.0 357.5 L946.0 357.5 L950.0 357.5 L954.0 357.5 L958.0 357.5 L962.0 357.5 L966.0 357.5 L970.0 357.5 L974.0 357.5 L978.0 357.5 L982.0 357.5 L986.0 357.5 L990.0 357.5 L994.0 357.5 L998.0 357.5 L1002.0 357.5 L1006.0 357.5 L1010.0 357.5 L1014.0 357.5 L1018.0 357.5 L1022.0 357.5 L1026.0 357.5 L1030.0 357.5 L1034.0 357.5 L1038.0 357.5 L1042.0 357.5 L1046.0 357.5 L1050.0 357.5 L1054.0 357.5 L1058.0 357.5 L1062.0 357.5 L1066.0 357.5 L1070.0 357.5 L1074.0 357.5 L1078.0 357.5 L1082.0 357.5 L1086.0 357.5 L1090.0 357.5 L1094.0 357.5 L1098.0 357.5 L1102.0 357.5 L1106.0 357.5 L1110.0 357.5 L1114.0 358.1 L1118.0 359.2 L1122.0 360.3 L1126.0 361.4 L1130.0 362.5 L1134.0 363.6 L1134.5 363.7 L1134.5 370.7 L1134.0 370.8 L1130.0 371.7 L1126.0 372.5 L1122.0 373.3 L1118.0 374.1 L1114.0 374.9 L1110.0 375.7 L1106.0 376.5 L1102.0 377.3 L1098.0 377.3 L1094.0 377.3 L1090.0 377.3 L1086.0 377.3 L1082.0 377.3 L1078.0 377.3 L1074.0 377.3 L1070.0 377.3 L1066.0 377.3 L1062.0 377.3 L1058.0 377.3 L1054.0 377.3 L1050.0 377.3 L1046.0 377.3 L1042.0 377.3 L1038.0 377.3 L1034.0 377.3 L1030.0 377.3 L1026.0 377.3 L1022.0 377.3 L1018.0 377.3 L1014.0 377.3 L1010.0 377.3 L1006.0 377.3 L1002.0 377.3 L998.0 377.3 L994.0 377.3 L990.0 377.3 L986.0 377.3 L982.0 377.3 L978.0 377.3 L974.0 377.3 L970.0 377.3 L966.0 377.3 L962.0 377.3 L958.0 377.3 L954.0 377.3 L950.0 377.3 L946.0 377.3 L942.0 377.3 L938.0 377.3 L934.0 377.3 L930.0 377.3 L926.0 377.3 L922.0 377.3 L918.0 377.3 L914.0 377.3 L910.0 377.3 L906.0 377.3 L902.0 377.3 L898.0 377.3 L894.0 377.3 L890.0 377.3 L886.0 377.3 L882.0 377.3 L878.0 377.3 L874.0 377.3 L870.0 377.3 L866.0 377.3 L862.0 377.3 L858.0 377.3 L854.0 377.3 L850.0 377.3 L846.0 377.3 L842.0 377.3 L838.0 377.3 L834.0 377.3 L830.0 377.3 L826.0 377.3 L822.0 377.3 L818.0 377.3 L814.0 377.3 L810.0 377.3 L806.0 377.3 L802.0 377.3 L798.0 377.3 L794.0 377.3 L790.0 377.3 L786.0 377.3 L782.0 377.3 L778.0 377.3 L774.0 377.3 L770.0 377.3 L766.0 377.3 L762.0 377.3 L758.0 377.3 L754.0 377.3 L750.0 377.3 L746.0 377.3 L742.0 377.3 L738.0 377.3 L734.0 377.3 L730.0 377.3 L726.0 377.3 L722.0 377.3 L718.0 377.3 L714.0 377.3 L710.0 377.3 L706.0 377.3 L702.0 377.3 L698.0 377.3 L694.0 377.3 L690.0 377.3 L686.0 377.3 L682.0 377.3 L678.0 377.3 L674.0 377.3 L670.0 377.3 L666.0 377.3 L662.0 377.3 L658.0 377.3 L654.0 377.3 L650.0 377.3 L646.0 377.3 L642.0 377.3 L638.0 377.3 L634.0 377.3 L630.0 377.3 L626.0 377.3 L622.0 377.3 L618.0 377.3 L614.0 377.3 L610.0 377.3 L606.0 377.3 L602.0 377.3 L598.0 377.3 L594.0 377.3 L590.0 377.3 L586.0 377.3 L582.0 377.3 L578.0 377.3 L574.0 377.3 L570.0 377.3 L566.0 377.3 L562.0 377.3 L558.0 377.3 L554.0 377.3 L550.0 377.3 L546.0 377.3 L542.0 377.3 L538.0 377.3 L534.0 377.3 L530.0 377.3 L526.0 377.3 L522.0 377.3 L518.0 377.3 L514.0 377.3 L510.0 377.3 L506.0 377.3 L502.0 377.3 L498.0 377.3 L494.0 377.3 L490.0 377.3 L486.0 377.3 L482.0 377.3 L478.0 377.3 L474.0 377.3 L470.0 377.3 L466.0 377.3 L462.0 377.3 L458.0 377.3 L454.0 377.3 L450.0 377.3 L446.0 377.3 L442.0 377.3 L438.0 377.3 L434.0 377.3 L430.0 377.3 L426.0 377.3 L422.0 377.3 L418.0 377.3 L414.0 377.3 L410.0 377.3 L406.0 377.3 L402.0 377.3 L398.0 377.3 L394.0 377.3 L390.0 377.3 L386.0 377.3 L382.0 377.3 L378.0 377.3 L374.0 377.3 L370.0 377.3 L366.0 377.3 L362.0 377.3 L358.0 377.3 L354.0 377.3 L350.0 377.3 L346.0 377.3 L342.0 377.3 L338.0 377.3 L334.0 377.3 L330.0 377.3 L326.0 377.3 L322.0 377.3 L318.0 377.3 L314.0 377.3 L310.0 377.3 L306.0 377.3 L302.0 377.3 L298.0 377.3 L294.0 377.3 L290.0 377.3 L286.0 377.3 L282.0 377.3 L278.0 377.3 L275.0 377.3Z" fill="url(#orng)"/><path d="M218.0 352.4 L222.0 352.2 L226.0 352.0 L230.0 351.7 L234.0 351.4 L238.0 351.2 L242.0 350.9 L246.0 350.7 L250.0 350.4 L254.0 350.2 L258.0 349.9 L262.0 349.7 L266.0 349.4 L270.0 349.2 L274.0 348.9 L278.0 348.7 L282.0 348.4 L286.0 348.2 L290.0 347.9 L294.0 347.6 L298.0 347.4 L302.0 347.1 L306.0 346.9 L310.0 346.6 L314.0 346.4 L318.0 346.1 L322.0 345.9 L326.0 345.6 L330.0 345.4 L334.0 345.2 L338.0 344.9 L342.0 344.7 L346.0 344.5 L350.0 344.3 L354.0 344.1 L358.0 343.9 L362.0 343.7 L366.0 343.5 L370.0 343.3 L374.0 343.2 L378.0 343.0 L382.0 342.8 L386.0 342.7 L390.0 342.5 L394.0 342.4 L398.0 342.2 L402.0 342.1 L406.0 341.9 L410.0 341.8 L414.0 341.6 L418.0 341.5 L422.0 341.4 L426.0 341.2 L430.0 341.1 L434.0 341.0 L438.0 340.8 L442.0 340.7 L446.0 340.6 L450.0 340.5 L454.0 340.4 L458.0 340.2 L462.0 340.1 L466.0 340.0 L470.0 339.9 L474.0 339.8 L478.0 339.7 L482.0 339.6 L486.0 339.5 L490.0 339.4 L494.0 339.3 L498.0 339.2 L502.0 339.2 L506.0 339.1 L510.0 339.0 L514.0 338.9 L518.0 338.8 L522.0 338.8 L526.0 338.7 L530.0 338.6 L534.0 338.5 L538.0 338.5 L542.0 338.4 L546.0 338.4 L550.0 338.3 L554.0 338.3 L558.0 338.2 L562.0 338.2 L566.0 338.1 L570.0 338.1 L574.0 338.0 L578.0 338.0 L582.0 337.9 L586.0 337.9 L590.0 337.9 L594.0 337.8 L598.0 337.8 L602.0 337.8 L606.0 337.7 L610.0 337.7 L614.0 337.7 L618.0 337.7 L622.0 337.6 L626.0 337.6 L630.0 337.6 L634.0 337.6 L638.0 337.6 L642.0 337.6 L646.0 337.5 L650.0 337.5 L654.0 337.5 L658.0 337.5 L662.0 337.5 L666.0 337.5 L670.0 337.5 L674.0 337.5 L678.0 337.5 L682.0 337.5 L686.0 337.5 L690.0 337.5 L694.0 337.5 L698.0 337.5 L702.0 337.5 L706.0 337.5 L710.0 337.5 L714.0 337.5 L718.0 337.5 L722.0 337.6 L726.0 337.6 L730.0 337.6 L734.0 337.6 L738.0 337.6 L742.0 337.7 L746.0 337.7 L750.0 337.7 L754.0 337.7 L758.0 337.8 L762.0 337.8 L766.0 337.9 L770.0 337.9 L774.0 337.9 L778.0 338.0 L782.0 338.0 L786.0 338.1 L790.0 338.1 L794.0 338.2 L798.0 338.2 L802.0 338.3 L806.0 338.4 L810.0 338.5 L814.0 338.5 L818.0 338.6 L822.0 338.7 L826.0 338.8 L830.0 338.9 L834.0 339.0 L838.0 339.1 L842.0 339.3 L846.0 339.4 L850.0 339.5 L854.0 339.7 L858.0 339.8 L862.0 339.9 L866.0 340.1 L870.0 340.2 L874.0 340.4 L878.0 340.5 L882.0 340.7 L886.0 340.8 L890.0 341.0 L894.0 341.1 L898.0 341.2 L902.0 341.4 L906.0 341.5 L910.0 341.7 L914.0 341.9 L918.0 342.1 L922.0 342.2 L926.0 342.4 L930.0 342.6 L934.0 342.8 L938.0 343.0 L942.0 343.2 L946.0 343.4 L950.0 343.6 L954.0 343.8 L958.0 344.0 L962.0 344.2 L966.0 344.4 L970.0 344.6 L974.0 344.8 L978.0 345.0 L982.0 345.2 L986.0 345.5 L990.0 345.7 L994.0 346.0 L998.0 346.2 L1002.0 346.5 L1006.0 346.8 L1010.0 347.0 L1014.0 347.3 L1018.0 347.6 L1022.0 347.9 L1026.0 348.2 L1030.0 348.5 L1034.0 348.8 L1038.0 349.1 L1042.0 349.4 L1046.0 349.7 L1050.0 350.0 L1054.0 350.4 L1058.0 350.7 L1062.0 351.0 L1066.0 351.4 L1070.0 351.8 L1074.0 352.1 L1078.0 352.5 L1082.0 352.9 L1086.0 353.2 L1090.0 353.5 L1094.0 353.9 L1098.0 354.3 L1102.0 354.7 L1106.0 355.1 L1110.0 355.5 L1114.0 356.4 L1118.0 357.6 L1122.0 358.9 L1126.0 360.2 L1130.0 361.5 L1134.0 362.8 L1134.5 363.0" fill="none" stroke="url(#seamT)" stroke-width="1.1" opacity="0.9"/><path d="M218.0 348.1 L222.0 347.6 L226.0 347.2 L230.0 346.7 L234.0 346.2 L238.0 345.7 L242.0 345.2 L246.0 344.8 L250.0 344.3 L254.0 343.8 L258.0 343.3 L262.0 342.9 L266.0 342.4 L270.0 341.9 L274.0 341.5 L278.0 341.0 L282.0 340.5 L286.0 340.1 L290.0 339.6 L294.0 339.1 L298.0 338.6 L302.0 338.2 L306.0 337.7 L310.0 337.2 L314.0 336.7 L318.0 336.3 L322.0 335.8 L326.0 335.4 L330.0 334.9 L334.0 334.5 L338.0 334.0 L342.0 333.6 L346.0 333.2 L350.0 332.9 L354.0 332.5 L358.0 332.1 L362.0 331.7 L366.0 331.4 L370.0 331.1 L374.0 330.7 L378.0 330.4 L382.0 330.1 L386.0 329.8 L390.0 329.5 L394.0 329.2 L398.0 329.0 L402.0 328.7 L406.0 328.4 L410.0 328.1 L414.0 327.9 L418.0 327.6 L422.0 327.4 L426.0 327.1 L430.0 326.9 L434.0 326.6 L438.0 326.4 L442.0 326.2 L446.0 325.9 L450.0 325.7 L454.0 325.5 L458.0 325.3 L462.0 325.1 L466.0 324.9 L470.0 324.7 L474.0 324.5 L478.0 324.3 L482.0 324.1 L486.0 323.9 L490.0 323.8 L494.0 323.6 L498.0 323.4 L502.0 323.3 L506.0 323.1 L510.0 323.0 L514.0 322.8 L518.0 322.7 L522.0 322.5 L526.0 322.4 L530.0 322.3 L534.0 322.1 L538.0 322.0 L542.0 321.9 L546.0 321.8 L550.0 321.7 L554.0 321.6 L558.0 321.5 L562.0 321.4 L566.0 321.3 L570.0 321.2 L574.0 321.1 L578.0 321.1 L582.0 321.0 L586.0 320.9 L590.0 320.9 L594.0 320.8 L598.0 320.7 L602.0 320.7 L606.0 320.6 L610.0 320.6 L614.0 320.5 L618.0 320.5 L622.0 320.4 L626.0 320.4 L630.0 320.4 L634.0 320.3 L638.0 320.3 L642.0 320.3 L646.0 320.3 L650.0 320.2 L654.0 320.2 L658.0 320.2 L662.0 320.2 L666.0 320.2 L670.0 320.2 L674.0 320.2 L678.0 320.2 L682.0 320.2 L686.0 320.2 L690.0 320.2 L694.0 320.2 L698.0 320.2 L702.0 320.2 L706.0 320.2 L710.0 320.2 L714.0 320.2 L718.0 320.3 L722.0 320.3 L726.0 320.3 L730.0 320.3 L734.0 320.4 L738.0 320.4 L742.0 320.5 L746.0 320.5 L750.0 320.6 L754.0 320.6 L758.0 320.7 L762.0 320.8 L766.0 320.8 L770.0 320.9 L774.0 321.0 L778.0 321.1 L782.0 321.2 L786.0 321.2 L790.0 321.3 L794.0 321.5 L798.0 321.6 L802.0 321.7 L806.0 321.8 L810.0 322.0 L814.0 322.1 L818.0 322.3 L822.0 322.4 L826.0 322.6 L830.0 322.8 L834.0 323.0 L838.0 323.3 L842.0 323.5 L846.0 323.7 L850.0 324.0 L854.0 324.2 L858.0 324.5 L862.0 324.7 L866.0 325.0 L870.0 325.3 L874.0 325.6 L878.0 325.8 L882.0 326.1 L886.0 326.4 L890.0 326.6 L894.0 326.9 L898.0 327.2 L902.0 327.4 L906.0 327.7 L910.0 328.0 L914.0 328.3 L918.0 328.7 L922.0 329.0 L926.0 329.4 L930.0 329.7 L934.0 330.1 L938.0 330.4 L942.0 330.8 L946.0 331.1 L950.0 331.5 L954.0 331.9 L958.0 332.2 L962.0 332.6 L966.0 333.0 L970.0 333.4 L974.0 333.8 L978.0 334.2 L982.0 334.6 L986.0 335.1 L990.0 335.5 L994.0 336.0 L998.0 336.5 L1002.0 337.0 L1006.0 337.5 L1010.0 338.0 L1014.0 338.5 L1018.0 339.0 L1022.0 339.6 L1026.0 340.1 L1030.0 340.7 L1034.0 341.2 L1038.0 341.8 L1042.0 342.4 L1046.0 343.0 L1050.0 343.6 L1054.0 344.2 L1058.0 344.8 L1062.0 345.5 L1066.0 346.1 L1070.0 346.8 L1074.0 347.5 L1078.0 348.2 L1082.0 348.9 L1086.0 349.5 L1090.0 350.1 L1094.0 350.8 L1098.0 351.5 L1102.0 352.2 L1106.0 353.0 L1110.0 353.8 L1114.0 354.9 L1118.0 356.3 L1122.0 357.7 L1126.0 359.2 L1130.0 360.6 L1134.0 362.1 L1134.5 362.3" fill="none" stroke="url(#seamT)" stroke-width="1.1" opacity="0.9"/><path d="M218.0 343.9 L222.0 343.3 L226.0 342.6 L230.0 341.9 L234.0 341.2 L238.0 340.5 L242.0 339.8 L246.0 339.1 L250.0 338.4 L254.0 337.7 L258.0 337.1 L262.0 336.4 L266.0 335.7 L270.0 335.0 L274.0 334.4 L278.0 333.7 L282.0 333.0 L286.0 332.3 L290.0 331.6 L294.0 331.0 L298.0 330.3 L302.0 329.6 L306.0 328.9 L310.0 328.2 L314.0 327.5 L318.0 326.8 L322.0 326.2 L326.0 325.5 L330.0 324.9 L334.0 324.3 L338.0 323.6 L342.0 323.0 L346.0 322.5 L350.0 321.9 L354.0 321.4 L358.0 320.8 L362.0 320.3 L366.0 319.8 L370.0 319.3 L374.0 318.9 L378.0 318.4 L382.0 318.0 L386.0 317.5 L390.0 317.1 L394.0 316.7 L398.0 316.3 L402.0 315.9 L406.0 315.5 L410.0 315.1 L414.0 314.7 L418.0 314.4 L422.0 314.0 L426.0 313.6 L430.0 313.3 L434.0 312.9 L438.0 312.6 L442.0 312.3 L446.0 311.9 L450.0 311.6 L454.0 311.3 L458.0 311.0 L462.0 310.7 L466.0 310.4 L470.0 310.1 L474.0 309.8 L478.0 309.6 L482.0 309.3 L486.0 309.0 L490.0 308.8 L494.0 308.5 L498.0 308.3 L502.0 308.1 L506.0 307.8 L510.0 307.6 L514.0 307.4 L518.0 307.2 L522.0 307.0 L526.0 306.8 L530.0 306.6 L534.0 306.4 L538.0 306.3 L542.0 306.1 L546.0 305.9 L550.0 305.8 L554.0 305.6 L558.0 305.5 L562.0 305.4 L566.0 305.2 L570.0 305.1 L574.0 305.0 L578.0 304.9 L582.0 304.8 L586.0 304.7 L590.0 304.6 L594.0 304.5 L598.0 304.4 L602.0 304.3 L606.0 304.3 L610.0 304.2 L614.0 304.1 L618.0 304.0 L622.0 304.0 L626.0 303.9 L630.0 303.9 L634.0 303.8 L638.0 303.8 L642.0 303.8 L646.0 303.7 L650.0 303.7 L654.0 303.7 L658.0 303.7 L662.0 303.6 L666.0 303.6 L670.0 303.6 L674.0 303.6 L678.0 303.6 L682.0 303.6 L686.0 303.6 L690.0 303.6 L694.0 303.6 L698.0 303.6 L702.0 303.6 L706.0 303.6 L710.0 303.7 L714.0 303.7 L718.0 303.7 L722.0 303.8 L726.0 303.8 L730.0 303.8 L734.0 303.9 L738.0 304.0 L742.0 304.0 L746.0 304.1 L750.0 304.2 L754.0 304.3 L758.0 304.4 L762.0 304.5 L766.0 304.6 L770.0 304.7 L774.0 304.8 L778.0 304.9 L782.0 305.0 L786.0 305.2 L790.0 305.3 L794.0 305.4 L798.0 305.6 L802.0 305.8 L806.0 306.0 L810.0 306.2 L814.0 306.4 L818.0 306.6 L822.0 306.9 L826.0 307.1 L830.0 307.4 L834.0 307.7 L838.0 308.1 L842.0 308.4 L846.0 308.7 L850.0 309.1 L854.0 309.5 L858.0 309.8 L862.0 310.2 L866.0 310.6 L870.0 311.0 L874.0 311.4 L878.0 311.8 L882.0 312.2 L886.0 312.5 L890.0 312.9 L894.0 313.3 L898.0 313.7 L902.0 314.1 L906.0 314.5 L910.0 314.9 L914.0 315.4 L918.0 315.9 L922.0 316.4 L926.0 316.9 L930.0 317.4 L934.0 317.9 L938.0 318.4 L942.0 318.9 L946.0 319.4 L950.0 319.9 L954.0 320.5 L958.0 321.0 L962.0 321.6 L966.0 322.1 L970.0 322.7 L974.0 323.3 L978.0 323.9 L982.0 324.5 L986.0 325.1 L990.0 325.8 L994.0 326.4 L998.0 327.1 L1002.0 327.8 L1006.0 328.6 L1010.0 329.3 L1014.0 330.1 L1018.0 330.8 L1022.0 331.6 L1026.0 332.4 L1030.0 333.2 L1034.0 334.0 L1038.0 334.8 L1042.0 335.7 L1046.0 336.5 L1050.0 337.4 L1054.0 338.3 L1058.0 339.2 L1062.0 340.1 L1066.0 341.1 L1070.0 342.0 L1074.0 343.0 L1078.0 344.1 L1082.0 345.0 L1086.0 345.9 L1090.0 346.8 L1094.0 347.8 L1098.0 348.8 L1102.0 349.8 L1106.0 350.9 L1110.0 352.1 L1114.0 353.5 L1118.0 355.0 L1122.0 356.6 L1126.0 358.2 L1130.0 359.8 L1134.0 361.5 L1134.5 361.7" fill="none" stroke="url(#seamT)" stroke-width="1.1" opacity="0.9"/><path d="M218.0 339.9 L222.0 339.1 L226.0 338.2 L230.0 337.3 L234.0 336.4 L238.0 335.5 L242.0 334.7 L246.0 333.8 L250.0 332.9 L254.0 332.0 L258.0 331.1 L262.0 330.2 L266.0 329.4 L270.0 328.5 L274.0 327.6 L278.0 326.8 L282.0 325.9 L286.0 325.0 L290.0 324.1 L294.0 323.2 L298.0 322.3 L302.0 321.4 L306.0 320.6 L310.0 319.7 L314.0 318.8 L318.0 317.9 L322.0 317.1 L326.0 316.2 L330.0 315.4 L334.0 314.6 L338.0 313.8 L342.0 313.0 L346.0 312.3 L350.0 311.6 L354.0 310.9 L358.0 310.2 L362.0 309.5 L366.0 308.9 L370.0 308.2 L374.0 307.6 L378.0 307.0 L382.0 306.5 L386.0 305.9 L390.0 305.4 L394.0 304.8 L398.0 304.3 L402.0 303.8 L406.0 303.3 L410.0 302.8 L414.0 302.3 L418.0 301.8 L422.0 301.3 L426.0 300.9 L430.0 300.4 L434.0 300.0 L438.0 299.5 L442.0 299.1 L446.0 298.7 L450.0 298.3 L454.0 297.9 L458.0 297.5 L462.0 297.1 L466.0 296.7 L470.0 296.3 L474.0 296.0 L478.0 295.6 L482.0 295.3 L486.0 295.0 L490.0 294.6 L494.0 294.3 L498.0 294.0 L502.0 293.7 L506.0 293.4 L510.0 293.1 L514.0 292.8 L518.0 292.6 L522.0 292.3 L526.0 292.1 L530.0 291.8 L534.0 291.6 L538.0 291.4 L542.0 291.1 L546.0 290.9 L550.0 290.7 L554.0 290.5 L558.0 290.4 L562.0 290.2 L566.0 290.0 L570.0 289.9 L574.0 289.7 L578.0 289.6 L582.0 289.5 L586.0 289.3 L590.0 289.2 L594.0 289.1 L598.0 289.0 L602.0 288.9 L606.0 288.8 L610.0 288.7 L614.0 288.6 L618.0 288.5 L622.0 288.4 L626.0 288.3 L630.0 288.3 L634.0 288.2 L638.0 288.2 L642.0 288.1 L646.0 288.1 L650.0 288.0 L654.0 288.0 L658.0 288.0 L662.0 288.0 L666.0 288.0 L670.0 287.9 L674.0 287.9 L678.0 287.9 L682.0 287.9 L686.0 287.9 L690.0 287.9 L694.0 287.9 L698.0 287.9 L702.0 288.0 L706.0 288.0 L710.0 288.0 L714.0 288.0 L718.0 288.1 L722.0 288.1 L726.0 288.2 L730.0 288.2 L734.0 288.3 L738.0 288.4 L742.0 288.5 L746.0 288.6 L750.0 288.7 L754.0 288.8 L758.0 288.9 L762.0 289.0 L766.0 289.2 L770.0 289.3 L774.0 289.4 L778.0 289.6 L782.0 289.8 L786.0 289.9 L790.0 290.1 L794.0 290.3 L798.0 290.5 L802.0 290.7 L806.0 291.0 L810.0 291.2 L814.0 291.5 L818.0 291.8 L822.0 292.2 L826.0 292.5 L830.0 292.9 L834.0 293.3 L838.0 293.7 L842.0 294.1 L846.0 294.5 L850.0 295.0 L854.0 295.5 L858.0 296.0 L862.0 296.4 L866.0 296.9 L870.0 297.4 L874.0 297.9 L878.0 298.5 L882.0 299.0 L886.0 299.5 L890.0 300.0 L894.0 300.5 L898.0 300.9 L902.0 301.4 L906.0 301.9 L910.0 302.5 L914.0 303.1 L918.0 303.8 L922.0 304.4 L926.0 305.1 L930.0 305.7 L934.0 306.4 L938.0 307.0 L942.0 307.7 L946.0 308.3 L950.0 309.0 L954.0 309.7 L958.0 310.4 L962.0 311.1 L966.0 311.8 L970.0 312.6 L974.0 313.3 L978.0 314.1 L982.0 314.9 L986.0 315.7 L990.0 316.5 L994.0 317.4 L998.0 318.3 L1002.0 319.2 L1006.0 320.1 L1010.0 321.1 L1014.0 322.1 L1018.0 323.1 L1022.0 324.1 L1026.0 325.1 L1030.0 326.1 L1034.0 327.2 L1038.0 328.3 L1042.0 329.3 L1046.0 330.4 L1050.0 331.6 L1054.0 332.7 L1058.0 333.9 L1062.0 335.1 L1066.0 336.3 L1070.0 337.5 L1074.0 338.8 L1078.0 340.1 L1082.0 341.4 L1086.0 342.5 L1090.0 343.7 L1094.0 345.0 L1098.0 346.2 L1102.0 347.6 L1106.0 349.0 L1110.0 350.5 L1114.0 352.1 L1118.0 353.8 L1122.0 355.5 L1126.0 357.3 L1130.0 359.1 L1134.0 360.9 L1134.5 361.1" fill="none" stroke="url(#seamT)" stroke-width="1.1" opacity="0.9"/><path d="M218.0 381.5 L222.0 381.7 L226.0 382.0 L230.0 382.3 L234.0 382.6 L238.0 382.9 L242.0 383.2 L246.0 383.5 L250.0 383.8 L254.0 384.1 L258.0 384.4 L262.0 384.6 L266.0 384.9 L270.0 385.2 L274.0 385.4 L278.0 385.7 L282.0 385.9 L286.0 386.2 L290.0 386.4 L294.0 386.6 L298.0 386.8 L302.0 387.0 L306.0 387.2 L310.0 387.4 L314.0 387.6 L318.0 387.8 L322.0 388.0 L326.0 388.2 L330.0 388.4 L334.0 388.5 L338.0 388.7 L342.0 388.9 L346.0 389.1 L350.0 389.3 L354.0 389.5 L358.0 389.6 L362.0 389.8 L366.0 390.0 L370.0 390.2 L374.0 390.3 L378.0 390.5 L382.0 390.7 L386.0 390.9 L390.0 391.0 L394.0 391.2 L398.0 391.4 L402.0 391.5 L406.0 391.7 L410.0 391.8 L414.0 392.0 L418.0 392.2 L422.0 392.3 L426.0 392.5 L430.0 392.6 L434.0 392.8 L438.0 392.9 L442.0 393.1 L446.0 393.2 L450.0 393.4 L454.0 393.5 L458.0 393.7 L462.0 393.8 L466.0 394.0 L470.0 394.1 L474.0 394.2 L478.0 394.4 L482.0 394.5 L486.0 394.6 L490.0 394.7 L494.0 394.8 L498.0 394.9 L502.0 395.0 L506.0 395.1 L510.0 395.2 L514.0 395.3 L518.0 395.4 L522.0 395.5 L526.0 395.6 L530.0 395.6 L534.0 395.7 L538.0 395.8 L542.0 395.9 L546.0 395.9 L550.0 396.0 L554.0 396.1 L558.0 396.1 L562.0 396.2 L566.0 396.3 L570.0 396.3 L574.0 396.4 L578.0 396.5 L582.0 396.5 L586.0 396.6 L590.0 396.6 L594.0 396.7 L598.0 396.7 L602.0 396.8 L606.0 396.8 L610.0 396.9 L614.0 396.9 L618.0 397.0 L622.0 397.0 L626.0 397.0 L630.0 397.1 L634.0 397.1 L638.0 397.1 L642.0 397.1 L646.0 397.2 L650.0 397.2 L654.0 397.2 L658.0 397.2 L662.0 397.2 L666.0 397.2 L670.0 397.2 L674.0 397.2 L678.0 397.2 L682.0 397.2 L686.0 397.2 L690.0 397.2 L694.0 397.2 L698.0 397.2 L702.0 397.2 L706.0 397.2 L710.0 397.2 L714.0 397.2 L718.0 397.1 L722.0 397.1 L726.0 397.1 L730.0 397.1 L734.0 397.1 L738.0 397.1 L742.0 397.0 L746.0 397.0 L750.0 397.0 L754.0 396.9 L758.0 396.9 L762.0 396.9 L766.0 396.8 L770.0 396.8 L774.0 396.7 L778.0 396.7 L782.0 396.6 L786.0 396.5 L790.0 396.5 L794.0 396.4 L798.0 396.4 L802.0 396.3 L806.0 396.2 L810.0 396.1 L814.0 396.1 L818.0 396.0 L822.0 395.9 L826.0 395.8 L830.0 395.7 L834.0 395.6 L838.0 395.4 L842.0 395.3 L846.0 395.2 L850.0 395.0 L854.0 394.9 L858.0 394.7 L862.0 394.5 L866.0 394.4 L870.0 394.2 L874.0 394.0 L878.0 393.8 L882.0 393.6 L886.0 393.4 L890.0 393.3 L894.0 393.1 L898.0 392.9 L902.0 392.7 L906.0 392.5 L910.0 392.3 L914.0 392.1 L918.0 391.9 L922.0 391.7 L926.0 391.5 L930.0 391.3 L934.0 391.1 L938.0 390.8 L942.0 390.6 L946.0 390.4 L950.0 390.1 L954.0 389.9 L958.0 389.7 L962.0 389.4 L966.0 389.2 L970.0 389.0 L974.0 388.7 L978.0 388.5 L982.0 388.3 L986.0 388.1 L990.0 387.8 L994.0 387.6 L998.0 387.3 L1002.0 387.1 L1006.0 386.8 L1010.0 386.5 L1014.0 386.2 L1018.0 385.8 L1022.0 385.5 L1026.0 385.2 L1030.0 384.8 L1034.0 384.5 L1038.0 384.1 L1042.0 383.7 L1046.0 383.4 L1050.0 383.0 L1054.0 382.6 L1058.0 382.3 L1062.0 381.9 L1066.0 381.5 L1070.0 381.1 L1074.0 380.7 L1078.0 380.3 L1082.0 379.8 L1086.0 379.5 L1090.0 379.2 L1094.0 378.9 L1098.0 378.6 L1102.0 378.3 L1106.0 377.4 L1110.0 376.5 L1114.0 375.6 L1118.0 374.7 L1122.0 373.8 L1126.0 373.0 L1130.0 372.1 L1134.0 371.2 L1134.5 371.1" fill="none" stroke="#3a2418" stroke-width="1.3" opacity="0.9"/><path d="M218.0 385.1 L222.0 385.6 L226.0 386.1 L230.0 386.7 L234.0 387.3 L238.0 387.8 L242.0 388.4 L246.0 388.9 L250.0 389.4 L254.0 390.0 L258.0 390.5 L262.0 391.0 L266.0 391.5 L270.0 392.0 L274.0 392.5 L278.0 393.0 L282.0 393.4 L286.0 393.8 L290.0 394.3 L294.0 394.7 L298.0 395.1 L302.0 395.4 L306.0 395.8 L310.0 396.2 L314.0 396.6 L318.0 396.9 L322.0 397.3 L326.0 397.6 L330.0 398.0 L334.0 398.3 L338.0 398.6 L342.0 399.0 L346.0 399.3 L350.0 399.7 L354.0 400.0 L358.0 400.3 L362.0 400.7 L366.0 401.0 L370.0 401.3 L374.0 401.7 L378.0 402.0 L382.0 402.3 L386.0 402.6 L390.0 402.9 L394.0 403.2 L398.0 403.6 L402.0 403.9 L406.0 404.2 L410.0 404.5 L414.0 404.8 L418.0 405.0 L422.0 405.3 L426.0 405.6 L430.0 405.9 L434.0 406.2 L438.0 406.5 L442.0 406.8 L446.0 407.1 L450.0 407.3 L454.0 407.6 L458.0 407.9 L462.0 408.2 L466.0 408.4 L470.0 408.7 L474.0 408.9 L478.0 409.2 L482.0 409.4 L486.0 409.6 L490.0 409.8 L494.0 410.0 L498.0 410.2 L502.0 410.4 L506.0 410.6 L510.0 410.8 L514.0 410.9 L518.0 411.1 L522.0 411.3 L526.0 411.4 L530.0 411.6 L534.0 411.7 L538.0 411.8 L542.0 412.0 L546.0 412.1 L550.0 412.2 L554.0 412.4 L558.0 412.5 L562.0 412.6 L566.0 412.7 L570.0 412.9 L574.0 413.0 L578.0 413.1 L582.0 413.2 L586.0 413.3 L590.0 413.4 L594.0 413.5 L598.0 413.6 L602.0 413.7 L606.0 413.8 L610.0 413.9 L614.0 414.0 L618.0 414.0 L622.0 414.1 L626.0 414.2 L630.0 414.2 L634.0 414.3 L638.0 414.3 L642.0 414.4 L646.0 414.4 L650.0 414.4 L654.0 414.4 L658.0 414.5 L662.0 414.5 L666.0 414.5 L670.0 414.5 L674.0 414.5 L678.0 414.5 L682.0 414.5 L686.0 414.5 L690.0 414.5 L694.0 414.5 L698.0 414.5 L702.0 414.5 L706.0 414.4 L710.0 414.4 L714.0 414.4 L718.0 414.4 L722.0 414.3 L726.0 414.3 L730.0 414.3 L734.0 414.2 L738.0 414.2 L742.0 414.1 L746.0 414.1 L750.0 414.0 L754.0 414.0 L758.0 413.9 L762.0 413.8 L766.0 413.7 L770.0 413.6 L774.0 413.6 L778.0 413.5 L782.0 413.3 L786.0 413.2 L790.0 413.1 L794.0 413.0 L798.0 412.9 L802.0 412.8 L806.0 412.6 L810.0 412.5 L814.0 412.3 L818.0 412.2 L822.0 412.0 L826.0 411.8 L830.0 411.6 L834.0 411.4 L838.0 411.2 L842.0 411.0 L846.0 410.7 L850.0 410.4 L854.0 410.1 L858.0 409.8 L862.0 409.5 L866.0 409.2 L870.0 408.9 L874.0 408.5 L878.0 408.2 L882.0 407.8 L886.0 407.5 L890.0 407.1 L894.0 406.7 L898.0 406.4 L902.0 406.0 L906.0 405.7 L910.0 405.3 L914.0 405.0 L918.0 404.6 L922.0 404.3 L926.0 403.8 L930.0 403.4 L934.0 403.0 L938.0 402.6 L942.0 402.1 L946.0 401.7 L950.0 401.3 L954.0 400.9 L958.0 400.4 L962.0 400.0 L966.0 399.5 L970.0 399.1 L974.0 398.7 L978.0 398.2 L982.0 397.8 L986.0 397.4 L990.0 397.0 L994.0 396.5 L998.0 396.0 L1002.0 395.5 L1006.0 395.0 L1010.0 394.5 L1014.0 393.9 L1018.0 393.3 L1022.0 392.6 L1026.0 392.0 L1030.0 391.3 L1034.0 390.7 L1038.0 390.0 L1042.0 389.3 L1046.0 388.6 L1050.0 387.9 L1054.0 387.3 L1058.0 386.6 L1062.0 385.9 L1066.0 385.1 L1070.0 384.4 L1074.0 383.6 L1078.0 382.8 L1082.0 382.1 L1086.0 381.4 L1090.0 380.8 L1094.0 380.3 L1098.0 379.7 L1102.0 379.1 L1106.0 378.2 L1110.0 377.2 L1114.0 376.2 L1118.0 375.3 L1122.0 374.3 L1126.0 373.4 L1130.0 372.4 L1134.0 371.5 L1134.5 371.3" fill="none" stroke="#3a2418" stroke-width="1.3" opacity="0.9"/><path d="M218.0 388.6 L222.0 389.3 L226.0 390.1 L230.0 390.9 L234.0 391.7 L238.0 392.5 L242.0 393.3 L246.0 394.0 L250.0 394.8 L254.0 395.6 L258.0 396.4 L262.0 397.1 L266.0 397.8 L270.0 398.6 L274.0 399.2 L278.0 399.9 L282.0 400.6 L286.0 401.2 L290.0 401.8 L294.0 402.4 L298.0 402.9 L302.0 403.5 L306.0 404.0 L310.0 404.6 L314.0 405.1 L318.0 405.6 L322.0 406.1 L326.0 406.6 L330.0 407.1 L334.0 407.6 L338.0 408.1 L342.0 408.6 L346.0 409.1 L350.0 409.6 L354.0 410.1 L358.0 410.6 L362.0 411.0 L366.0 411.5 L370.0 412.0 L374.0 412.5 L378.0 412.9 L382.0 413.4 L386.0 413.8 L390.0 414.3 L394.0 414.7 L398.0 415.2 L402.0 415.6 L406.0 416.1 L410.0 416.5 L414.0 416.9 L418.0 417.3 L422.0 417.8 L426.0 418.2 L430.0 418.6 L434.0 419.0 L438.0 419.4 L442.0 419.8 L446.0 420.3 L450.0 420.7 L454.0 421.1 L458.0 421.4 L462.0 421.8 L466.0 422.2 L470.0 422.6 L474.0 422.9 L478.0 423.3 L482.0 423.6 L486.0 423.9 L490.0 424.2 L494.0 424.5 L498.0 424.8 L502.0 425.1 L506.0 425.4 L510.0 425.6 L514.0 425.9 L518.0 426.1 L522.0 426.3 L526.0 426.5 L530.0 426.7 L534.0 426.9 L538.0 427.1 L542.0 427.3 L546.0 427.5 L550.0 427.7 L554.0 427.9 L558.0 428.1 L562.0 428.3 L566.0 428.4 L570.0 428.6 L574.0 428.8 L578.0 429.0 L582.0 429.1 L586.0 429.3 L590.0 429.4 L594.0 429.6 L598.0 429.7 L602.0 429.8 L606.0 430.0 L610.0 430.1 L614.0 430.2 L618.0 430.3 L622.0 430.4 L626.0 430.5 L630.0 430.6 L634.0 430.6 L638.0 430.7 L642.0 430.8 L646.0 430.8 L650.0 430.9 L654.0 430.9 L658.0 430.9 L662.0 431.0 L666.0 431.0 L670.0 431.0 L674.0 431.0 L678.0 431.0 L682.0 431.0 L686.0 431.0 L690.0 431.0 L694.0 431.0 L698.0 430.9 L702.0 430.9 L706.0 430.9 L710.0 430.9 L714.0 430.8 L718.0 430.8 L722.0 430.8 L726.0 430.7 L730.0 430.7 L734.0 430.6 L738.0 430.5 L742.0 430.5 L746.0 430.4 L750.0 430.3 L754.0 430.2 L758.0 430.1 L762.0 430.0 L766.0 429.9 L770.0 429.8 L774.0 429.6 L778.0 429.5 L782.0 429.3 L786.0 429.2 L790.0 429.0 L794.0 428.9 L798.0 428.7 L802.0 428.5 L806.0 428.3 L810.0 428.1 L814.0 427.9 L818.0 427.6 L822.0 427.4 L826.0 427.1 L830.0 426.9 L834.0 426.5 L838.0 426.2 L842.0 425.9 L846.0 425.5 L850.0 425.1 L854.0 424.7 L858.0 424.2 L862.0 423.8 L866.0 423.3 L870.0 422.8 L874.0 422.3 L878.0 421.9 L882.0 421.3 L886.0 420.8 L890.0 420.3 L894.0 419.8 L898.0 419.3 L902.0 418.8 L906.0 418.2 L910.0 417.7 L914.0 417.2 L918.0 416.7 L922.0 416.2 L926.0 415.6 L930.0 415.0 L934.0 414.4 L938.0 413.8 L942.0 413.2 L946.0 412.5 L950.0 411.9 L954.0 411.3 L958.0 410.7 L962.0 410.0 L966.0 409.4 L970.0 408.8 L974.0 408.1 L978.0 407.5 L982.0 406.9 L986.0 406.3 L990.0 405.7 L994.0 405.0 L998.0 404.3 L1002.0 403.6 L1006.0 402.9 L1010.0 402.1 L1014.0 401.2 L1018.0 400.3 L1022.0 399.4 L1026.0 398.5 L1030.0 397.6 L1034.0 396.6 L1038.0 395.6 L1042.0 394.7 L1046.0 393.7 L1050.0 392.7 L1054.0 391.7 L1058.0 390.7 L1062.0 389.6 L1066.0 388.6 L1070.0 387.5 L1074.0 386.4 L1078.0 385.3 L1082.0 384.2 L1086.0 383.3 L1090.0 382.4 L1094.0 381.6 L1098.0 380.7 L1102.0 379.9 L1106.0 378.9 L1110.0 377.9 L1114.0 376.8 L1118.0 375.8 L1122.0 374.8 L1126.0 373.8 L1130.0 372.7 L1134.0 371.7 L1134.5 371.6" fill="none" stroke="#3a2418" stroke-width="1.3" opacity="0.9"/><path d="M218.0 391.8 L222.0 392.7 L226.0 393.8 L230.0 394.8 L234.0 395.8 L238.0 396.9 L242.0 397.9 L246.0 398.9 L250.0 399.9 L254.0 400.9 L258.0 401.9 L262.0 402.9 L266.0 403.8 L270.0 404.7 L274.0 405.6 L278.0 406.5 L282.0 407.3 L286.0 408.1 L290.0 408.9 L294.0 409.6 L298.0 410.4 L302.0 411.1 L306.0 411.8 L310.0 412.5 L314.0 413.1 L318.0 413.8 L322.0 414.5 L326.0 415.1 L330.0 415.8 L334.0 416.4 L338.0 417.0 L342.0 417.7 L346.0 418.3 L350.0 418.9 L354.0 419.6 L358.0 420.2 L362.0 420.8 L366.0 421.5 L370.0 422.1 L374.0 422.7 L378.0 423.3 L382.0 423.9 L386.0 424.5 L390.0 425.0 L394.0 425.6 L398.0 426.2 L402.0 426.8 L406.0 427.3 L410.0 427.9 L414.0 428.4 L418.0 429.0 L422.0 429.5 L426.0 430.1 L430.0 430.6 L434.0 431.1 L438.0 431.7 L442.0 432.2 L446.0 432.7 L450.0 433.2 L454.0 433.8 L458.0 434.3 L462.0 434.8 L466.0 435.2 L470.0 435.7 L474.0 436.2 L478.0 436.6 L482.0 437.1 L486.0 437.5 L490.0 437.9 L494.0 438.2 L498.0 438.6 L502.0 439.0 L506.0 439.3 L510.0 439.6 L514.0 439.9 L518.0 440.2 L522.0 440.5 L526.0 440.8 L530.0 441.1 L534.0 441.4 L538.0 441.6 L542.0 441.9 L546.0 442.1 L550.0 442.4 L554.0 442.6 L558.0 442.8 L562.0 443.1 L566.0 443.3 L570.0 443.5 L574.0 443.7 L578.0 443.9 L582.0 444.2 L586.0 444.4 L590.0 444.5 L594.0 444.7 L598.0 444.9 L602.0 445.1 L606.0 445.3 L610.0 445.4 L614.0 445.6 L618.0 445.7 L622.0 445.8 L626.0 445.9 L630.0 446.0 L634.0 446.1 L638.0 446.2 L642.0 446.3 L646.0 446.4 L650.0 446.4 L654.0 446.5 L658.0 446.5 L662.0 446.5 L666.0 446.6 L670.0 446.6 L674.0 446.6 L678.0 446.6 L682.0 446.6 L686.0 446.6 L690.0 446.6 L694.0 446.5 L698.0 446.5 L702.0 446.5 L706.0 446.5 L710.0 446.4 L714.0 446.4 L718.0 446.3 L722.0 446.3 L726.0 446.2 L730.0 446.2 L734.0 446.1 L738.0 446.0 L742.0 445.9 L746.0 445.8 L750.0 445.7 L754.0 445.6 L758.0 445.5 L762.0 445.3 L766.0 445.2 L770.0 445.0 L774.0 444.8 L778.0 444.6 L782.0 444.4 L786.0 444.2 L790.0 444.0 L794.0 443.8 L798.0 443.6 L802.0 443.4 L806.0 443.1 L810.0 442.8 L814.0 442.6 L818.0 442.3 L822.0 441.9 L826.0 441.6 L830.0 441.2 L834.0 440.8 L838.0 440.4 L842.0 440.0 L846.0 439.5 L850.0 439.0 L854.0 438.4 L858.0 437.9 L862.0 437.3 L866.0 436.7 L870.0 436.1 L874.0 435.4 L878.0 434.8 L882.0 434.1 L886.0 433.5 L890.0 432.8 L894.0 432.1 L898.0 431.5 L902.0 430.8 L906.0 430.1 L910.0 429.5 L914.0 428.8 L918.0 428.2 L922.0 427.5 L926.0 426.7 L930.0 425.9 L934.0 425.1 L938.0 424.4 L942.0 423.6 L946.0 422.8 L950.0 422.0 L954.0 421.2 L958.0 420.4 L962.0 419.5 L966.0 418.7 L970.0 417.9 L974.0 417.1 L978.0 416.3 L982.0 415.5 L986.0 414.7 L990.0 413.9 L994.0 413.1 L998.0 412.2 L1002.0 411.3 L1006.0 410.3 L1010.0 409.3 L1014.0 408.2 L1018.0 407.0 L1022.0 405.9 L1026.0 404.7 L1030.0 403.4 L1034.0 402.2 L1038.0 400.9 L1042.0 399.7 L1046.0 398.4 L1050.0 397.1 L1054.0 395.8 L1058.0 394.5 L1062.0 393.2 L1066.0 391.9 L1070.0 390.5 L1074.0 389.1 L1078.0 387.6 L1082.0 386.2 L1086.0 385.0 L1090.0 383.9 L1094.0 382.8 L1098.0 381.7 L1102.0 380.6 L1106.0 379.5 L1110.0 378.5 L1114.0 377.4 L1118.0 376.3 L1122.0 375.2 L1126.0 374.1 L1130.0 373.1 L1134.0 372.0 L1134.5 371.8" fill="none" stroke="#3a2418" stroke-width="1.3" opacity="0.9"/><path d="M275.0 357.5 L278.0 357.5 L282.0 357.5 L286.0 357.5 L290.0 357.5 L294.0 357.5 L298.0 357.5 L302.0 357.5 L306.0 357.5 L310.0 357.5 L314.0 357.5 L318.0 357.5 L322.0 357.5 L326.0 357.5 L330.0 357.5 L334.0 357.5 L338.0 357.5 L342.0 357.5 L346.0 357.5 L350.0 357.5 L354.0 357.5 L358.0 357.5 L362.0 357.5 L366.0 357.5 L370.0 357.5 L374.0 357.5 L378.0 357.5 L382.0 357.5 L386.0 357.5 L390.0 357.5 L394.0 357.5 L398.0 357.5 L402.0 357.5 L406.0 357.5 L410.0 357.5 L414.0 357.5 L418.0 357.5 L422.0 357.5 L426.0 357.5 L430.0 357.5 L434.0 357.5 L438.0 357.5 L442.0 357.5 L446.0 357.5 L450.0 357.5 L454.0 357.5 L458.0 357.5 L462.0 357.5 L466.0 357.5 L470.0 357.5 L474.0 357.5 L478.0 357.5 L482.0 357.5 L486.0 357.5 L490.0 357.5 L494.0 357.5 L498.0 357.5 L502.0 357.5 L506.0 357.5 L510.0 357.5 L514.0 357.5 L518.0 357.5 L522.0 357.5 L526.0 357.5 L530.0 357.5 L534.0 357.5 L538.0 357.5 L542.0 357.5 L546.0 357.5 L550.0 357.5 L554.0 357.5 L558.0 357.5 L562.0 357.5 L566.0 357.5 L570.0 357.5 L574.0 357.5 L578.0 357.5 L582.0 357.5 L586.0 357.5 L590.0 357.5 L594.0 357.5 L598.0 357.5 L602.0 357.5 L606.0 357.5 L610.0 357.5 L614.0 357.5 L618.0 357.5 L622.0 357.5 L626.0 357.5 L630.0 357.5 L634.0 357.5 L638.0 357.5 L642.0 357.5 L646.0 357.5 L650.0 357.5 L654.0 357.5 L658.0 357.5 L662.0 357.5 L666.0 357.5 L670.0 357.5 L674.0 357.5 L678.0 357.5 L682.0 357.5 L686.0 357.5 L690.0 357.5 L694.0 357.5 L698.0 357.5 L702.0 357.5 L706.0 357.5 L710.0 357.5 L714.0 357.5 L718.0 357.5 L722.0 357.5 L726.0 357.5 L730.0 357.5 L734.0 357.5 L738.0 357.5 L742.0 357.5 L746.0 357.5 L750.0 357.5 L754.0 357.5 L758.0 357.5 L762.0 357.5 L766.0 357.5 L770.0 357.5 L774.0 357.5 L778.0 357.5 L782.0 357.5 L786.0 357.5 L790.0 357.5 L794.0 357.5 L798.0 357.5 L802.0 357.5 L806.0 357.5 L810.0 357.5 L814.0 357.5 L818.0 357.5 L822.0 357.5 L826.0 357.5 L830.0 357.5 L834.0 357.5 L838.0 357.5 L842.0 357.5 L846.0 357.5 L850.0 357.5 L854.0 357.5 L858.0 357.5 L862.0 357.5 L866.0 357.5 L870.0 357.5 L874.0 357.5 L878.0 357.5 L882.0 357.5 L886.0 357.5 L890.0 357.5 L894.0 357.5 L898.0 357.5 L902.0 357.5 L906.0 357.5 L910.0 357.5 L914.0 357.5 L918.0 357.5 L922.0 357.5 L926.0 357.5 L930.0 357.5 L934.0 357.5 L938.0 357.5 L942.0 357.5 L946.0 357.5 L950.0 357.5 L954.0 357.5 L958.0 357.5 L962.0 357.5 L966.0 357.5 L970.0 357.5 L974.0 357.5 L978.0 357.5 L982.0 357.5 L986.0 357.5 L990.0 357.5 L994.0 357.5 L998.0 357.5 L1002.0 357.5 L1006.0 357.5 L1010.0 357.5 L1014.0 357.5 L1018.0 357.5 L1022.0 357.5 L1026.0 357.5 L1030.0 357.5 L1034.0 357.5 L1038.0 357.5 L1042.0 357.5 L1046.0 357.5 L1050.0 357.5 L1054.0 357.5 L1058.0 357.5 L1062.0 357.5 L1066.0 357.5 L1070.0 357.5 L1074.0 357.5 L1078.0 357.5 L1082.0 357.5 L1086.0 357.5 L1090.0 357.5 L1094.0 357.5 L1098.0 357.5 L1102.0 357.5 L1106.0 357.5 L1110.0 357.5 L1114.0 358.1 L1118.0 359.2 L1122.0 360.3 L1126.0 361.4 L1130.0 362.5 L1134.0 363.6 L1134.5 363.7" fill="none" stroke="#a04a10" stroke-width="0.8"/><path d="M275.0 377.3 L278.0 377.3 L282.0 377.3 L286.0 377.3 L290.0 377.3 L294.0 377.3 L298.0 377.3 L302.0 377.3 L306.0 377.3 L310.0 377.3 L314.0 377.3 L318.0 377.3 L322.0 377.3 L326.0 377.3 L330.0 377.3 L334.0 377.3 L338.0 377.3 L342.0 377.3 L346.0 377.3 L350.0 377.3 L354.0 377.3 L358.0 377.3 L362.0 377.3 L366.0 377.3 L370.0 377.3 L374.0 377.3 L378.0 377.3 L382.0 377.3 L386.0 377.3 L390.0 377.3 L394.0 377.3 L398.0 377.3 L402.0 377.3 L406.0 377.3 L410.0 377.3 L414.0 377.3 L418.0 377.3 L422.0 377.3 L426.0 377.3 L430.0 377.3 L434.0 377.3 L438.0 377.3 L442.0 377.3 L446.0 377.3 L450.0 377.3 L454.0 377.3 L458.0 377.3 L462.0 377.3 L466.0 377.3 L470.0 377.3 L474.0 377.3 L478.0 377.3 L482.0 377.3 L486.0 377.3 L490.0 377.3 L494.0 377.3 L498.0 377.3 L502.0 377.3 L506.0 377.3 L510.0 377.3 L514.0 377.3 L518.0 377.3 L522.0 377.3 L526.0 377.3 L530.0 377.3 L534.0 377.3 L538.0 377.3 L542.0 377.3 L546.0 377.3 L550.0 377.3 L554.0 377.3 L558.0 377.3 L562.0 377.3 L566.0 377.3 L570.0 377.3 L574.0 377.3 L578.0 377.3 L582.0 377.3 L586.0 377.3 L590.0 377.3 L594.0 377.3 L598.0 377.3 L602.0 377.3 L606.0 377.3 L610.0 377.3 L614.0 377.3 L618.0 377.3 L622.0 377.3 L626.0 377.3 L630.0 377.3 L634.0 377.3 L638.0 377.3 L642.0 377.3 L646.0 377.3 L650.0 377.3 L654.0 377.3 L658.0 377.3 L662.0 377.3 L666.0 377.3 L670.0 377.3 L674.0 377.3 L678.0 377.3 L682.0 377.3 L686.0 377.3 L690.0 377.3 L694.0 377.3 L698.0 377.3 L702.0 377.3 L706.0 377.3 L710.0 377.3 L714.0 377.3 L718.0 377.3 L722.0 377.3 L726.0 377.3 L730.0 377.3 L734.0 377.3 L738.0 377.3 L742.0 377.3 L746.0 377.3 L750.0 377.3 L754.0 377.3 L758.0 377.3 L762.0 377.3 L766.0 377.3 L770.0 377.3 L774.0 377.3 L778.0 377.3 L782.0 377.3 L786.0 377.3 L790.0 377.3 L794.0 377.3 L798.0 377.3 L802.0 377.3 L806.0 377.3 L810.0 377.3 L814.0 377.3 L818.0 377.3 L822.0 377.3 L826.0 377.3 L830.0 377.3 L834.0 377.3 L838.0 377.3 L842.0 377.3 L846.0 377.3 L850.0 377.3 L854.0 377.3 L858.0 377.3 L862.0 377.3 L866.0 377.3 L870.0 377.3 L874.0 377.3 L878.0 377.3 L882.0 377.3 L886.0 377.3 L890.0 377.3 L894.0 377.3 L898.0 377.3 L902.0 377.3 L906.0 377.3 L910.0 377.3 L914.0 377.3 L918.0 377.3 L922.0 377.3 L926.0 377.3 L930.0 377.3 L934.0 377.3 L938.0 377.3 L942.0 377.3 L946.0 377.3 L950.0 377.3 L954.0 377.3 L958.0 377.3 L962.0 377.3 L966.0 377.3 L970.0 377.3 L974.0 377.3 L978.0 377.3 L982.0 377.3 L986.0 377.3 L990.0 377.3 L994.0 377.3 L998.0 377.3 L1002.0 377.3 L1006.0 377.3 L1010.0 377.3 L1014.0 377.3 L1018.0 377.3 L1022.0 377.3 L1026.0 377.3 L1030.0 377.3 L1034.0 377.3 L1038.0 377.3 L1042.0 377.3 L1046.0 377.3 L1050.0 377.3 L1054.0 377.3 L1058.0 377.3 L1062.0 377.3 L1066.0 377.3 L1070.0 377.3 L1074.0 377.3 L1078.0 377.3 L1082.0 377.3 L1086.0 377.3 L1090.0 377.3 L1094.0 377.3 L1098.0 377.3 L1102.0 377.3 L1106.0 376.5 L1110.0 375.7 L1114.0 374.9 L1118.0 374.1 L1122.0 373.3 L1126.0 372.5 L1130.0 371.7 L1134.0 370.8 L1134.5 370.7" fill="none" stroke="#a04a10" stroke-width="0.8"/><path d="M218.0 336.5 L222.0 335.6 L226.0 334.6 L230.0 333.5 L234.0 332.4 L238.0 331.4 L242.0 330.3 L246.0 329.3 L250.0 328.2 L254.0 327.2 L258.0 326.2 L262.0 325.1 L266.0 324.1 L270.0 323.0 L274.0 322.0 L278.0 320.9 L282.0 319.9 L286.0 318.8 L290.0 317.8 L294.0 316.7 L298.0 315.6 L302.0 314.5 L306.0 313.4 L310.0 312.4 L314.0 311.3 L318.0 310.3 L322.0 309.2 L326.0 308.2 L330.0 307.2 L334.0 306.2 L338.0 305.2 L342.0 304.3 L346.0 303.4 L350.0 302.5 L354.0 301.7 L358.0 300.8 L362.0 300.0 L366.0 299.2 L370.0 298.5 L374.0 297.7 L378.0 297.0 L382.0 296.3 L386.0 295.6 L390.0 295.0 L394.0 294.3 L398.0 293.7 L402.0 293.1 L406.0 292.4 L410.0 291.8 L414.0 291.3 L418.0 290.7 L422.0 290.1 L426.0 289.5 L430.0 289.0 L434.0 288.5 L438.0 287.9 L442.0 287.4 L446.0 286.9 L450.0 286.4 L454.0 285.9 L458.0 285.4 L462.0 285.0 L466.0 284.5 L470.0 284.1 L474.0 283.7 L478.0 283.2 L482.0 282.8 L486.0 282.4 L490.0 282.0 L494.0 281.7 L498.0 281.3 L502.0 280.9 L506.0 280.6 L510.0 280.2 L514.0 279.9 L518.0 279.6 L522.0 279.3 L526.0 279.0 L530.0 278.7 L534.0 278.4 L538.0 278.2 L542.0 277.9 L546.0 277.7 L550.0 277.4 L554.0 277.2 L558.0 277.0 L562.0 276.8 L566.0 276.6 L570.0 276.4 L574.0 276.2 L578.0 276.1 L582.0 275.9 L586.0 275.8 L590.0 275.6 L594.0 275.5 L598.0 275.4 L602.0 275.2 L606.0 275.1 L610.0 275.0 L614.0 274.9 L618.0 274.8 L622.0 274.7 L626.0 274.6 L630.0 274.6 L634.0 274.5 L638.0 274.4 L642.0 274.4 L646.0 274.3 L650.0 274.3 L654.0 274.2 L658.0 274.2 L662.0 274.2 L666.0 274.2 L670.0 274.2 L674.0 274.2 L678.0 274.1 L682.0 274.1 L686.0 274.1 L690.0 274.2 L694.0 274.2 L698.0 274.2 L702.0 274.2 L706.0 274.2 L710.0 274.2 L714.0 274.3 L718.0 274.3 L722.0 274.4 L726.0 274.4 L730.0 274.5 L734.0 274.6 L738.0 274.7 L742.0 274.8 L746.0 274.9 L750.0 275.0 L754.0 275.2 L758.0 275.3 L762.0 275.4 L766.0 275.6 L770.0 275.7 L774.0 275.9 L778.0 276.1 L782.0 276.3 L786.0 276.5 L790.0 276.7 L794.0 276.9 L798.0 277.2 L802.0 277.4 L806.0 277.7 L810.0 278.0 L814.0 278.4 L818.0 278.7 L822.0 279.1 L826.0 279.5 L830.0 279.9 L834.0 280.4 L838.0 280.9 L842.0 281.4 L846.0 281.9 L850.0 282.5 L854.0 283.1 L858.0 283.6 L862.0 284.2 L866.0 284.8 L870.0 285.4 L874.0 286.0 L878.0 286.6 L882.0 287.2 L886.0 287.8 L890.0 288.5 L894.0 289.0 L898.0 289.6 L902.0 290.2 L906.0 290.8 L910.0 291.5 L914.0 292.3 L918.0 293.1 L922.0 293.8 L926.0 294.6 L930.0 295.4 L934.0 296.2 L938.0 297.0 L942.0 297.8 L946.0 298.6 L950.0 299.4 L954.0 300.3 L958.0 301.1 L962.0 302.0 L966.0 302.8 L970.0 303.7 L974.0 304.7 L978.0 305.6 L982.0 306.6 L986.0 307.6 L990.0 308.6 L994.0 309.6 L998.0 310.7 L1002.0 311.8 L1006.0 312.9 L1010.0 314.1 L1014.0 315.3 L1018.0 316.5 L1022.0 317.7 L1026.0 318.9 L1030.0 320.2 L1034.0 321.4 L1038.0 322.7 L1042.0 324.0 L1046.0 325.3 L1050.0 326.7 L1054.0 328.0 L1058.0 329.4 L1062.0 330.8 L1066.0 332.2 L1070.0 333.7 L1074.0 335.2 L1078.0 336.8 L1082.0 338.3 L1086.0 339.7 L1090.0 341.1 L1094.0 342.6 L1098.0 344.1 L1102.0 345.7 L1106.0 347.3 L1110.0 349.1 L1114.0 350.9 L1118.0 352.8 L1122.0 354.7 L1126.0 356.7 L1130.0 358.7 L1134.0 360.6 L1134.5 360.8" fill="none" stroke="#2a9a80" stroke-width="1.1" opacity="0.85"/><path d="M218.0 396.4 L222.0 397.4 L226.0 398.6 L230.0 399.8 L234.0 401.0 L238.0 402.2 L242.0 403.4 L246.0 404.6 L250.0 405.7 L254.0 406.9 L258.0 408.0 L262.0 409.1 L266.0 410.2 L270.0 411.3 L274.0 412.3 L278.0 413.3 L282.0 414.3 L286.0 415.2 L290.0 416.1 L294.0 416.9 L298.0 417.8 L302.0 418.6 L306.0 419.4 L310.0 420.2 L314.0 421.0 L318.0 421.8 L322.0 422.5 L326.0 423.3 L330.0 424.0 L334.0 424.7 L338.0 425.5 L342.0 426.2 L346.0 427.0 L350.0 427.7 L354.0 428.4 L358.0 429.1 L362.0 429.9 L366.0 430.6 L370.0 431.3 L374.0 432.0 L378.0 432.7 L382.0 433.4 L386.0 434.0 L390.0 434.7 L394.0 435.4 L398.0 436.0 L402.0 436.7 L406.0 437.3 L410.0 438.0 L414.0 438.6 L418.0 439.3 L422.0 439.9 L426.0 440.5 L430.0 441.1 L434.0 441.8 L438.0 442.4 L442.0 443.0 L446.0 443.6 L450.0 444.2 L454.0 444.8 L458.0 445.4 L462.0 445.9 L466.0 446.5 L470.0 447.0 L474.0 447.6 L478.0 448.1 L482.0 448.6 L486.0 449.1 L490.0 449.5 L494.0 450.0 L498.0 450.4 L502.0 450.8 L506.0 451.2 L510.0 451.6 L514.0 451.9 L518.0 452.3 L522.0 452.6 L526.0 452.9 L530.0 453.3 L534.0 453.6 L538.0 453.9 L542.0 454.1 L546.0 454.4 L550.0 454.7 L554.0 455.0 L558.0 455.3 L562.0 455.5 L566.0 455.8 L570.0 456.0 L574.0 456.3 L578.0 456.6 L582.0 456.8 L586.0 457.0 L590.0 457.2 L594.0 457.5 L598.0 457.7 L602.0 457.9 L606.0 458.1 L610.0 458.2 L614.0 458.4 L618.0 458.6 L622.0 458.7 L626.0 458.8 L630.0 459.0 L634.0 459.1 L638.0 459.2 L642.0 459.3 L646.0 459.3 L650.0 459.4 L654.0 459.5 L658.0 459.5 L662.0 459.5 L666.0 459.6 L670.0 459.6 L674.0 459.6 L678.0 459.6 L682.0 459.6 L686.0 459.6 L690.0 459.6 L694.0 459.5 L698.0 459.5 L702.0 459.5 L706.0 459.4 L710.0 459.4 L714.0 459.4 L718.0 459.3 L722.0 459.2 L726.0 459.2 L730.0 459.1 L734.0 459.0 L738.0 458.9 L742.0 458.8 L746.0 458.7 L750.0 458.6 L754.0 458.4 L758.0 458.3 L762.0 458.1 L766.0 457.9 L770.0 457.8 L774.0 457.5 L778.0 457.3 L782.0 457.1 L786.0 456.9 L790.0 456.6 L794.0 456.4 L798.0 456.1 L802.0 455.9 L806.0 455.6 L810.0 455.3 L814.0 455.0 L818.0 454.6 L822.0 454.2 L826.0 453.8 L830.0 453.4 L834.0 453.0 L838.0 452.5 L842.0 452.0 L846.0 451.4 L850.0 450.8 L854.0 450.2 L858.0 449.5 L862.0 448.9 L866.0 448.2 L870.0 447.4 L874.0 446.7 L878.0 446.0 L882.0 445.2 L886.0 444.5 L890.0 443.7 L894.0 442.9 L898.0 442.1 L902.0 441.4 L906.0 440.6 L910.0 439.8 L914.0 439.1 L918.0 438.4 L922.0 437.6 L926.0 436.6 L930.0 435.7 L934.0 434.8 L938.0 433.9 L942.0 433.0 L946.0 432.1 L950.0 431.2 L954.0 430.2 L958.0 429.3 L962.0 428.4 L966.0 427.4 L970.0 426.5 L974.0 425.5 L978.0 424.6 L982.0 423.7 L986.0 422.8 L990.0 421.9 L994.0 420.9 L998.0 419.9 L1002.0 418.8 L1006.0 417.7 L1010.0 416.5 L1014.0 415.2 L1018.0 413.9 L1022.0 412.6 L1026.0 411.2 L1030.0 409.8 L1034.0 408.4 L1038.0 406.9 L1042.0 405.5 L1046.0 404.0 L1050.0 402.5 L1054.0 401.0 L1058.0 399.5 L1062.0 398.0 L1066.0 396.5 L1070.0 394.9 L1074.0 393.2 L1078.0 391.5 L1082.0 389.8 L1086.0 388.5 L1090.0 387.1 L1094.0 385.8 L1098.0 384.5 L1102.0 383.2 L1106.0 381.9 L1110.0 380.6 L1114.0 379.3 L1118.0 378.0 L1122.0 376.8 L1126.0 375.5 L1130.0 374.2 L1134.0 372.9 L1134.5 372.7" fill="none" stroke="#10604a" stroke-width="1.1" opacity="0.9"/><path d="M218.0 336.1 L222.0 335.1 L226.0 334.0 L230.0 332.9 L234.0 331.8 L238.0 330.7 L242.0 329.6 L246.0 328.5 L250.0 327.4 L254.0 326.3 L258.0 325.2 L262.0 324.1 L266.0 323.0 L270.0 321.9 L274.0 320.8 L278.0 319.7 L282.0 318.5 L286.0 317.4 L290.0 316.2 L294.0 315.1 L298.0 313.9 L302.0 312.7 L306.0 311.5 L310.0 310.3 L314.0 309.2 L318.0 308.0 L322.0 306.8 L326.0 305.7 L330.0 304.5 L334.0 303.4 L338.0 302.3 L342.0 301.3 L346.0 300.2 L350.0 299.2 L354.0 298.3 L358.0 297.3 L362.0 296.4 L366.0 295.4 L370.0 294.5 L374.0 293.7 L378.0 292.8 L382.0 292.0 L386.0 291.2 L390.0 290.4 L394.0 289.6 L398.0 288.9 L402.0 288.1 L406.0 287.4 L410.0 286.7 L414.0 285.9 L418.0 285.2 L422.0 284.5 L426.0 283.8 L430.0 283.2 L434.0 282.5 L438.0 281.9 L442.0 281.2 L446.0 280.6 L450.0 279.9 L454.0 279.3 L458.0 278.7 L462.0 278.1 L466.0 277.6 L470.0 277.0 L474.0 276.5 L478.0 275.9 L482.0 275.4 L486.0 274.9 L490.0 274.4 L494.0 273.9 L498.0 273.4 L502.0 272.9 L506.0 272.5 L510.0 272.0 L514.0 271.6 L518.0 271.2 L522.0 270.8 L526.0 270.4 L530.0 270.0 L534.0 269.6 L538.0 269.3 L542.0 268.9 L546.0 268.6 L550.0 268.3 L554.0 268.0 L558.0 267.7 L562.0 267.4 L566.0 267.2 L570.0 266.9 L574.0 266.7 L578.0 266.5 L582.0 266.3 L586.0 266.0 L590.0 265.9 L594.0 265.7 L598.0 265.5 L602.0 265.3 L606.0 265.2 L610.0 265.0 L614.0 264.9 L618.0 264.7 L622.0 264.6 L626.0 264.5 L630.0 264.4 L634.0 264.3 L638.0 264.2 L642.0 264.1 L646.0 264.1 L650.0 264.0 L654.0 263.9 L658.0 263.9 L662.0 263.9 L666.0 263.8 L670.0 263.8 L674.0 263.8 L678.0 263.8 L682.0 263.8 L686.0 263.8 L690.0 263.8 L694.0 263.8 L698.0 263.8 L702.0 263.9 L706.0 263.9 L710.0 263.9 L714.0 264.0 L718.0 264.0 L722.0 264.1 L726.0 264.2 L730.0 264.3 L734.0 264.4 L738.0 264.5 L742.0 264.7 L746.0 264.8 L750.0 265.0 L754.0 265.2 L758.0 265.4 L762.0 265.6 L766.0 265.8 L770.0 266.0 L774.0 266.2 L778.0 266.5 L782.0 266.7 L786.0 267.0 L790.0 267.3 L794.0 267.6 L798.0 268.0 L802.0 268.3 L806.0 268.7 L810.0 269.1 L814.0 269.6 L818.0 270.0 L822.0 270.5 L826.0 271.1 L830.0 271.6 L834.0 272.3 L838.0 272.9 L842.0 273.6 L846.0 274.3 L850.0 275.0 L854.0 275.7 L858.0 276.4 L862.0 277.2 L866.0 277.9 L870.0 278.7 L874.0 279.5 L878.0 280.2 L882.0 281.0 L886.0 281.7 L890.0 282.5 L894.0 283.2 L898.0 283.9 L902.0 284.7 L906.0 285.4 L910.0 286.3 L914.0 287.2 L918.0 288.1 L922.0 289.1 L926.0 290.0 L930.0 290.9 L934.0 291.9 L938.0 292.8 L942.0 293.8 L946.0 294.7 L950.0 295.7 L954.0 296.6 L958.0 297.6 L962.0 298.6 L966.0 299.6 L970.0 300.7 L974.0 301.7 L978.0 302.8 L982.0 303.8 L986.0 305.0 L990.0 306.1 L994.0 307.3 L998.0 308.5 L1002.0 309.7 L1006.0 311.0 L1010.0 312.2 L1014.0 313.5 L1018.0 314.8 L1022.0 316.2 L1026.0 317.5 L1030.0 318.8 L1034.0 320.2 L1038.0 321.6 L1042.0 323.0 L1046.0 324.4 L1050.0 325.8 L1054.0 327.2 L1058.0 328.7 L1062.0 330.1 L1066.0 331.6 L1070.0 333.2 L1074.0 334.7 L1078.0 336.4 L1082.0 337.9 L1086.0 339.3 L1090.0 340.8 L1094.0 342.3 L1098.0 343.9 L1102.0 345.5 L1106.0 347.2 L1110.0 349.0 L1114.0 350.9 L1118.0 352.8 L1122.0 354.7 L1126.0 356.7 L1130.0 358.6 L1134.0 360.6 L1134.5 360.8" fill="none" stroke="#2a2018" stroke-width="1.3" opacity="0.85"/><path d="M218.0 333.9 L222.0 332.9 L226.0 331.8 L230.0 330.7 L234.0 329.6 L238.0 328.5 L242.0 327.4 L246.0 326.3 L250.0 325.2 L254.0 324.1 L258.0 323.0 L262.0 321.9 L266.0 320.8 L270.0 319.6 L274.0 318.5 L278.0 317.4 L282.0 316.3 L286.0 315.1 L290.0 314.0 L294.0 312.8 L298.0 311.6 L302.0 310.5 L306.0 309.3 L310.0 308.1 L314.0 306.9 L318.0 305.7 L322.0 304.6 L326.0 303.4 L330.0 302.3 L334.0 301.2 L338.0 300.1 L342.0 299.0 L346.0 298.0 L350.0 297.0 L354.0 296.0 L358.0 295.0 L362.0 294.1 L366.0 293.2 L370.0 292.3 L374.0 291.4 L378.0 290.6 L382.0 289.8 L386.0 288.9 L390.0 288.2 L394.0 287.4 L398.0 286.6 L402.0 285.9 L406.0 285.1 L410.0 284.4 L414.0 283.7 L418.0 283.0 L422.0 282.3 L426.0 281.6 L430.0 280.9 L434.0 280.3 L438.0 279.6 L442.0 279.0 L446.0 278.3 L450.0 277.7 L454.0 277.1 L458.0 276.5 L462.0 275.9 L466.0 275.3 L470.0 274.8 L474.0 274.2 L478.0 273.7 L482.0 273.1 L486.0 272.6 L490.0 272.1 L494.0 271.6 L498.0 271.2 L502.0 270.7 L506.0 270.2 L510.0 269.8 L514.0 269.4 L518.0 268.9 L522.0 268.5 L526.0 268.1 L530.0 267.8 L534.0 267.4 L538.0 267.0 L542.0 266.7 L546.0 266.4 L550.0 266.0 L554.0 265.7 L558.0 265.5 L562.0 265.2 L566.0 264.9 L570.0 264.7 L574.0 264.4 L578.0 264.2 L582.0 264.0 L586.0 263.8 L590.0 263.6 L594.0 263.4 L598.0 263.2 L602.0 263.1 L606.0 262.9 L610.0 262.8 L614.0 262.6 L618.0 262.5 L622.0 262.4 L626.0 262.2 L630.0 262.1 L634.0 262.0 L638.0 261.9 L642.0 261.9 L646.0 261.8 L650.0 261.7 L654.0 261.7 L658.0 261.7 L662.0 261.6 L666.0 261.6 L670.0 261.6 L674.0 261.6 L678.0 261.6 L682.0 261.6 L686.0 261.6 L690.0 261.6 L694.0 261.6 L698.0 261.6 L702.0 261.6 L706.0 261.6 L710.0 261.7 L714.0 261.7 L718.0 261.8 L722.0 261.9 L726.0 262.0 L730.0 262.0 L734.0 262.2 L738.0 262.3 L742.0 262.4 L746.0 262.6 L750.0 262.8 L754.0 262.9 L758.0 263.1 L762.0 263.3 L766.0 263.5 L770.0 263.8 L774.0 264.0 L778.0 264.2 L782.0 264.5 L786.0 264.8 L790.0 265.1 L794.0 265.4 L798.0 265.7 L802.0 266.1 L806.0 266.5 L810.0 266.9 L814.0 267.3 L818.0 267.8 L822.0 268.3 L826.0 268.8 L830.0 269.4 L834.0 270.0 L838.0 270.6 L842.0 271.3 L846.0 272.0 L850.0 272.7 L854.0 273.4 L858.0 274.2 L862.0 274.9 L866.0 275.7 L870.0 276.4 L874.0 277.2 L878.0 278.0 L882.0 278.7 L886.0 279.5 L890.0 280.2 L894.0 281.0 L898.0 281.7 L902.0 282.4 L906.0 283.2 L910.0 284.0 L914.0 284.9 L918.0 285.9 L922.0 286.8 L926.0 287.8 L930.0 288.7 L934.0 289.6 L938.0 290.6 L942.0 291.5 L946.0 292.5 L950.0 293.4 L954.0 294.4 L958.0 295.4 L962.0 296.4 L966.0 297.4 L970.0 298.4 L974.0 299.4 L978.0 300.5 L982.0 301.6 L986.0 302.7 L990.0 303.9 L994.0 305.0 L998.0 306.2 L1002.0 307.5 L1006.0 308.7 L1010.0 310.0 L1014.0 311.3 L1018.0 312.6 L1022.0 313.9 L1026.0 315.2 L1030.0 316.6 L1034.0 317.9 L1038.0 319.3 L1042.0 320.7 L1046.0 322.1 L1050.0 323.5 L1054.0 325.0 L1058.0 326.4 L1062.0 327.9 L1066.0 329.4 L1070.0 330.9 L1074.0 332.5 L1078.0 334.1 L1082.0 335.7 L1086.0 337.2 L1090.0 338.8 L1094.0 340.4 L1098.0 342.1 L1102.0 343.9 L1106.0 345.7 L1110.0 347.6 L1114.0 349.6 L1118.0 351.7 L1122.0 353.8 L1126.0 355.9 L1130.0 358.0 L1134.0 360.1 L1134.5 360.3" fill="none" stroke="#4a3a28" stroke-width="1.1" opacity="0.85" stroke-dasharray="3.5 1.5"/><path d="M218.0 331.5 L222.0 330.5 L226.0 329.4 L230.0 328.3 L234.0 327.2 L238.0 326.1 L242.0 325.0 L246.0 323.9 L250.0 322.8 L254.0 321.7 L258.0 320.6 L262.0 319.5 L266.0 318.4 L270.0 317.2 L274.0 316.1 L278.0 315.0 L282.0 313.9 L286.0 312.7 L290.0 311.6 L294.0 310.4 L298.0 309.2 L302.0 308.1 L306.0 306.9 L310.0 305.7 L314.0 304.5 L318.0 303.3 L322.0 302.2 L326.0 301.0 L330.0 299.9 L334.0 298.8 L338.0 297.7 L342.0 296.6 L346.0 295.6 L350.0 294.6 L354.0 293.6 L358.0 292.6 L362.0 291.7 L366.0 290.8 L370.0 289.9 L374.0 289.0 L378.0 288.2 L382.0 287.4 L386.0 286.5 L390.0 285.8 L394.0 285.0 L398.0 284.2 L402.0 283.5 L406.0 282.7 L410.0 282.0 L414.0 281.3 L418.0 280.6 L422.0 279.9 L426.0 279.2 L430.0 278.5 L434.0 277.9 L438.0 277.2 L442.0 276.6 L446.0 275.9 L450.0 275.3 L454.0 274.7 L458.0 274.1 L462.0 273.5 L466.0 272.9 L470.0 272.4 L474.0 271.8 L478.0 271.3 L482.0 270.7 L486.0 270.2 L490.0 269.7 L494.0 269.2 L498.0 268.8 L502.0 268.3 L506.0 267.8 L510.0 267.4 L514.0 267.0 L518.0 266.5 L522.0 266.1 L526.0 265.7 L530.0 265.4 L534.0 265.0 L538.0 264.6 L542.0 264.3 L546.0 264.0 L550.0 263.6 L554.0 263.3 L558.0 263.1 L562.0 262.8 L566.0 262.5 L570.0 262.3 L574.0 262.0 L578.0 261.8 L582.0 261.6 L586.0 261.4 L590.0 261.2 L594.0 261.0 L598.0 260.8 L602.0 260.7 L606.0 260.5 L610.0 260.4 L614.0 260.2 L618.0 260.1 L622.0 260.0 L626.0 259.8 L630.0 259.7 L634.0 259.6 L638.0 259.5 L642.0 259.5 L646.0 259.4 L650.0 259.3 L654.0 259.3 L658.0 259.3 L662.0 259.2 L666.0 259.2 L670.0 259.2 L674.0 259.2 L678.0 259.2 L682.0 259.2 L686.0 259.2 L690.0 259.2 L694.0 259.2 L698.0 259.2 L702.0 259.2 L706.0 259.2 L710.0 259.3 L714.0 259.3 L718.0 259.4 L722.0 259.5 L726.0 259.6 L730.0 259.6 L734.0 259.8 L738.0 259.9 L742.0 260.0 L746.0 260.2 L750.0 260.4 L754.0 260.5 L758.0 260.7 L762.0 260.9 L766.0 261.1 L770.0 261.4 L774.0 261.6 L778.0 261.8 L782.0 262.1 L786.0 262.4 L790.0 262.7 L794.0 263.0 L798.0 263.3 L802.0 263.7 L806.0 264.1 L810.0 264.5 L814.0 264.9 L818.0 265.4 L822.0 265.9 L826.0 266.4 L830.0 267.0 L834.0 267.6 L838.0 268.2 L842.0 268.9 L846.0 269.6 L850.0 270.3 L854.0 271.0 L858.0 271.8 L862.0 272.5 L866.0 273.3 L870.0 274.0 L874.0 274.8 L878.0 275.6 L882.0 276.3 L886.0 277.1 L890.0 277.9 L894.0 278.6 L898.0 279.3 L902.0 280.0 L906.0 280.8 L910.0 281.6 L914.0 282.5 L918.0 283.5 L922.0 284.4 L926.0 285.4 L930.0 286.3 L934.0 287.2 L938.0 288.2 L942.0 289.1 L946.0 290.1 L950.0 291.0 L954.0 292.0 L958.0 293.0 L962.0 294.0 L966.0 295.0 L970.0 296.0 L974.0 297.0 L978.0 298.1 L982.0 299.2 L986.0 300.3 L990.0 301.5 L994.0 302.6 L998.0 303.8 L1002.0 305.1 L1006.0 306.3 L1010.0 307.6 L1014.0 308.9 L1018.0 310.2 L1022.0 311.5 L1026.0 312.8 L1030.0 314.2 L1034.0 315.5 L1038.0 316.9 L1042.0 318.3 L1046.0 319.7 L1050.0 321.1 L1054.0 322.6 L1058.0 324.0 L1062.0 325.5 L1066.0 327.0 L1070.0 328.5 L1074.0 330.1 L1078.0 331.7 L1082.0 333.3 L1086.0 335.0 L1090.0 336.7 L1094.0 338.4 L1098.0 340.2 L1102.0 342.1 L1106.0 344.1 L1110.0 346.2 L1114.0 348.3 L1118.0 350.5 L1122.0 352.7 L1126.0 355.0 L1130.0 357.3 L1134.0 359.5 L1134.5 359.8" fill="none" stroke="#4a3a28" stroke-width="1.1" opacity="0.85" stroke-dasharray="3.5 1.5"/><path d="M218.0 399.7 L222.0 400.8 L226.0 402.1 L230.0 403.4 L234.0 404.8 L238.0 406.1 L242.0 407.4 L246.0 408.7 L250.0 409.9 L254.0 411.2 L258.0 412.4 L262.0 413.7 L266.0 414.8 L270.0 416.0 L274.0 417.1 L278.0 418.2 L282.0 419.3 L286.0 420.3 L290.0 421.3 L294.0 422.2 L298.0 423.2 L302.0 424.1 L306.0 425.0 L310.0 425.8 L314.0 426.7 L318.0 427.5 L322.0 428.4 L326.0 429.2 L330.0 430.0 L334.0 430.8 L338.0 431.6 L342.0 432.4 L346.0 433.2 L350.0 434.0 L354.0 434.8 L358.0 435.6 L362.0 436.4 L366.0 437.2 L370.0 438.0 L374.0 438.8 L378.0 439.5 L382.0 440.3 L386.0 441.0 L390.0 441.7 L394.0 442.5 L398.0 443.2 L402.0 443.9 L406.0 444.6 L410.0 445.3 L414.0 446.0 L418.0 446.7 L422.0 447.4 L426.0 448.1 L430.0 448.8 L434.0 449.5 L438.0 450.2 L442.0 450.8 L446.0 451.5 L450.0 452.1 L454.0 452.8 L458.0 453.4 L462.0 454.1 L466.0 454.7 L470.0 455.3 L474.0 455.9 L478.0 456.4 L482.0 457.0 L486.0 457.5 L490.0 458.0 L494.0 458.5 L498.0 459.0 L502.0 459.4 L506.0 459.8 L510.0 460.2 L514.0 460.6 L518.0 461.0 L522.0 461.4 L526.0 461.7 L530.0 462.1 L534.0 462.4 L538.0 462.8 L542.0 463.1 L546.0 463.4 L550.0 463.7 L554.0 464.0 L558.0 464.3 L562.0 464.6 L566.0 464.9 L570.0 465.2 L574.0 465.4 L578.0 465.7 L582.0 466.0 L586.0 466.2 L590.0 466.5 L594.0 466.7 L598.0 466.9 L602.0 467.2 L606.0 467.4 L610.0 467.6 L614.0 467.7 L618.0 467.9 L622.0 468.1 L626.0 468.2 L630.0 468.4 L634.0 468.5 L638.0 468.6 L642.0 468.7 L646.0 468.8 L650.0 468.8 L654.0 468.9 L658.0 469.0 L662.0 469.0 L666.0 469.0 L670.0 469.0 L674.0 469.1 L678.0 469.1 L682.0 469.1 L686.0 469.0 L690.0 469.0 L694.0 469.0 L698.0 469.0 L702.0 468.9 L706.0 468.9 L710.0 468.8 L714.0 468.8 L718.0 468.7 L722.0 468.7 L726.0 468.6 L730.0 468.5 L734.0 468.4 L738.0 468.3 L742.0 468.2 L746.0 468.1 L750.0 467.9 L754.0 467.8 L758.0 467.6 L762.0 467.4 L766.0 467.2 L770.0 467.0 L774.0 466.8 L778.0 466.6 L782.0 466.3 L786.0 466.1 L790.0 465.8 L794.0 465.5 L798.0 465.3 L802.0 465.0 L806.0 464.7 L810.0 464.3 L814.0 464.0 L818.0 463.6 L822.0 463.2 L826.0 462.7 L830.0 462.3 L834.0 461.8 L838.0 461.2 L842.0 460.7 L846.0 460.1 L850.0 459.4 L854.0 458.7 L858.0 458.0 L862.0 457.3 L866.0 456.5 L870.0 455.7 L874.0 454.9 L878.0 454.1 L882.0 453.3 L886.0 452.4 L890.0 451.6 L894.0 450.7 L898.0 449.9 L902.0 449.0 L906.0 448.2 L910.0 447.4 L914.0 446.6 L918.0 445.7 L922.0 444.9 L926.0 443.9 L930.0 442.9 L934.0 441.9 L938.0 440.9 L942.0 439.9 L946.0 438.9 L950.0 437.9 L954.0 436.8 L958.0 435.8 L962.0 434.8 L966.0 433.7 L970.0 432.7 L974.0 431.7 L978.0 430.7 L982.0 429.7 L986.0 428.7 L990.0 427.6 L994.0 426.6 L998.0 425.5 L1002.0 424.3 L1006.0 423.1 L1010.0 421.8 L1014.0 420.4 L1018.0 418.9 L1022.0 417.5 L1026.0 415.9 L1030.0 414.4 L1034.0 412.8 L1038.0 411.2 L1042.0 409.6 L1046.0 408.0 L1050.0 406.4 L1054.0 404.8 L1058.0 403.1 L1062.0 401.5 L1066.0 399.8 L1070.0 398.0 L1074.0 396.2 L1078.0 394.3 L1082.0 392.5 L1086.0 391.0 L1090.0 389.5 L1094.0 388.0 L1098.0 386.6 L1102.0 385.1 L1106.0 383.7 L1110.0 382.2 L1114.0 380.8 L1118.0 379.3 L1122.0 377.9 L1126.0 376.4 L1130.0 375.0 L1134.0 373.5 L1134.5 373.3" fill="none" stroke="#2a2018" stroke-width="1.1" opacity="0.85"/><path d="M218.0 401.7 L222.0 402.8 L226.0 404.1 L230.0 405.5 L234.0 406.8 L238.0 408.1 L242.0 409.4 L246.0 410.7 L250.0 412.0 L254.0 413.3 L258.0 414.6 L262.0 415.8 L266.0 417.0 L270.0 418.2 L274.0 419.3 L278.0 420.5 L282.0 421.5 L286.0 422.5 L290.0 423.5 L294.0 424.5 L298.0 425.4 L302.0 426.4 L306.0 427.3 L310.0 428.1 L314.0 429.0 L318.0 429.9 L322.0 430.7 L326.0 431.5 L330.0 432.4 L334.0 433.2 L338.0 434.0 L342.0 434.8 L346.0 435.6 L350.0 436.5 L354.0 437.3 L358.0 438.1 L362.0 438.9 L366.0 439.7 L370.0 440.5 L374.0 441.2 L378.0 442.0 L382.0 442.8 L386.0 443.5 L390.0 444.3 L394.0 445.0 L398.0 445.7 L402.0 446.5 L406.0 447.2 L410.0 447.9 L414.0 448.6 L418.0 449.3 L422.0 450.0 L426.0 450.7 L430.0 451.4 L434.0 452.1 L438.0 452.8 L442.0 453.5 L446.0 454.1 L450.0 454.8 L454.0 455.5 L458.0 456.1 L462.0 456.7 L466.0 457.4 L470.0 458.0 L474.0 458.6 L478.0 459.1 L482.0 459.7 L486.0 460.2 L490.0 460.7 L494.0 461.2 L498.0 461.7 L502.0 462.1 L506.0 462.6 L510.0 463.0 L514.0 463.4 L518.0 463.8 L522.0 464.2 L526.0 464.5 L530.0 464.9 L534.0 465.2 L538.0 465.5 L542.0 465.9 L546.0 466.2 L550.0 466.5 L554.0 466.8 L558.0 467.1 L562.0 467.4 L566.0 467.7 L570.0 468.0 L574.0 468.3 L578.0 468.5 L582.0 468.8 L586.0 469.1 L590.0 469.3 L594.0 469.5 L598.0 469.8 L602.0 470.0 L606.0 470.2 L610.0 470.4 L614.0 470.6 L618.0 470.8 L622.0 470.9 L626.0 471.1 L630.0 471.2 L634.0 471.3 L638.0 471.5 L642.0 471.6 L646.0 471.6 L650.0 471.7 L654.0 471.8 L658.0 471.8 L662.0 471.9 L666.0 471.9 L670.0 471.9 L674.0 471.9 L678.0 471.9 L682.0 471.9 L686.0 471.9 L690.0 471.9 L694.0 471.9 L698.0 471.8 L702.0 471.8 L706.0 471.7 L710.0 471.7 L714.0 471.6 L718.0 471.6 L722.0 471.5 L726.0 471.5 L730.0 471.4 L734.0 471.3 L738.0 471.2 L742.0 471.1 L746.0 470.9 L750.0 470.8 L754.0 470.6 L758.0 470.5 L762.0 470.3 L766.0 470.1 L770.0 469.9 L774.0 469.6 L778.0 469.4 L782.0 469.2 L786.0 468.9 L790.0 468.6 L794.0 468.4 L798.0 468.1 L802.0 467.8 L806.0 467.5 L810.0 467.1 L814.0 466.8 L818.0 466.4 L822.0 466.0 L826.0 465.5 L830.0 465.1 L834.0 464.5 L838.0 464.0 L842.0 463.4 L846.0 462.8 L850.0 462.2 L854.0 461.5 L858.0 460.7 L862.0 460.0 L866.0 459.2 L870.0 458.4 L874.0 457.6 L878.0 456.8 L882.0 455.9 L886.0 455.1 L890.0 454.2 L894.0 453.4 L898.0 452.5 L902.0 451.6 L906.0 450.8 L910.0 450.0 L914.0 449.1 L918.0 448.3 L922.0 447.4 L926.0 446.4 L930.0 445.4 L934.0 444.4 L938.0 443.4 L942.0 442.4 L946.0 441.4 L950.0 440.3 L954.0 439.3 L958.0 438.3 L962.0 437.2 L966.0 436.2 L970.0 435.1 L974.0 434.1 L978.0 433.0 L982.0 432.0 L986.0 431.0 L990.0 430.0 L994.0 428.9 L998.0 427.8 L1002.0 426.6 L1006.0 425.3 L1010.0 424.0 L1014.0 422.6 L1018.0 421.2 L1022.0 419.7 L1026.0 418.1 L1030.0 416.6 L1034.0 415.0 L1038.0 413.4 L1042.0 411.7 L1046.0 410.1 L1050.0 408.5 L1054.0 406.8 L1058.0 405.1 L1062.0 403.5 L1066.0 401.7 L1070.0 400.0 L1074.0 398.1 L1078.0 396.2 L1082.0 394.4 L1086.0 392.7 L1090.0 391.1 L1094.0 389.6 L1098.0 388.0 L1102.0 386.4 L1106.0 384.9 L1110.0 383.3 L1114.0 381.8 L1118.0 380.2 L1122.0 378.6 L1126.0 377.1 L1130.0 375.5 L1134.0 374.0 L1134.5 373.8" fill="none" stroke="#5a3a2a" stroke-width="1.0" opacity="0.85" stroke-dasharray="3.5 1.5"/><path d="M218.0 403.8 L222.0 404.9 L226.0 406.3 L230.0 407.6 L234.0 409.0 L238.0 410.3 L242.0 411.7 L246.0 413.0 L250.0 414.3 L254.0 415.6 L258.0 416.9 L262.0 418.1 L266.0 419.3 L270.0 420.5 L274.0 421.7 L278.0 422.8 L282.0 423.9 L286.0 424.9 L290.0 425.9 L294.0 426.9 L298.0 427.9 L302.0 428.8 L306.0 429.7 L310.0 430.6 L314.0 431.5 L318.0 432.4 L322.0 433.2 L326.0 434.1 L330.0 434.9 L334.0 435.7 L338.0 436.6 L342.0 437.4 L346.0 438.2 L350.0 439.0 L354.0 439.9 L358.0 440.7 L362.0 441.5 L366.0 442.3 L370.0 443.1 L374.0 443.9 L378.0 444.7 L382.0 445.4 L386.0 446.2 L390.0 447.0 L394.0 447.7 L398.0 448.4 L402.0 449.2 L406.0 449.9 L410.0 450.6 L414.0 451.4 L418.0 452.1 L422.0 452.8 L426.0 453.5 L430.0 454.2 L434.0 454.9 L438.0 455.6 L442.0 456.3 L446.0 457.0 L450.0 457.6 L454.0 458.3 L458.0 458.9 L462.0 459.6 L466.0 460.2 L470.0 460.8 L474.0 461.4 L478.0 462.0 L482.0 462.6 L486.0 463.1 L490.0 463.6 L494.0 464.1 L498.0 464.6 L502.0 465.1 L506.0 465.5 L510.0 465.9 L514.0 466.3 L518.0 466.7 L522.0 467.1 L526.0 467.5 L530.0 467.8 L534.0 468.2 L538.0 468.5 L542.0 468.8 L546.0 469.2 L550.0 469.5 L554.0 469.8 L558.0 470.1 L562.0 470.4 L566.0 470.7 L570.0 471.0 L574.0 471.3 L578.0 471.5 L582.0 471.8 L586.0 472.1 L590.0 472.3 L594.0 472.6 L598.0 472.8 L602.0 473.0 L606.0 473.2 L610.0 473.4 L614.0 473.6 L618.0 473.8 L622.0 474.0 L626.0 474.1 L630.0 474.3 L634.0 474.4 L638.0 474.5 L642.0 474.6 L646.0 474.7 L650.0 474.8 L654.0 474.8 L658.0 474.9 L662.0 474.9 L666.0 475.0 L670.0 475.0 L674.0 475.0 L678.0 475.0 L682.0 475.0 L686.0 475.0 L690.0 474.9 L694.0 474.9 L698.0 474.9 L702.0 474.8 L706.0 474.8 L710.0 474.8 L714.0 474.7 L718.0 474.6 L722.0 474.6 L726.0 474.5 L730.0 474.4 L734.0 474.3 L738.0 474.2 L742.0 474.1 L746.0 474.0 L750.0 473.8 L754.0 473.7 L758.0 473.5 L762.0 473.3 L766.0 473.1 L770.0 472.9 L774.0 472.7 L778.0 472.4 L782.0 472.2 L786.0 471.9 L790.0 471.7 L794.0 471.4 L798.0 471.1 L802.0 470.8 L806.0 470.5 L810.0 470.1 L814.0 469.8 L818.0 469.3 L822.0 468.9 L826.0 468.5 L830.0 468.0 L834.0 467.5 L838.0 467.0 L842.0 466.4 L846.0 465.7 L850.0 465.1 L854.0 464.4 L858.0 463.7 L862.0 462.9 L866.0 462.1 L870.0 461.3 L874.0 460.5 L878.0 459.6 L882.0 458.8 L886.0 457.9 L890.0 457.1 L894.0 456.2 L898.0 455.3 L902.0 454.4 L906.0 453.6 L910.0 452.7 L914.0 451.9 L918.0 451.1 L922.0 450.2 L926.0 449.1 L930.0 448.1 L934.0 447.1 L938.0 446.1 L942.0 445.0 L946.0 444.0 L950.0 443.0 L954.0 441.9 L958.0 440.9 L962.0 439.8 L966.0 438.7 L970.0 437.7 L974.0 436.6 L978.0 435.6 L982.0 434.5 L986.0 433.5 L990.0 432.5 L994.0 431.4 L998.0 430.2 L1002.0 429.0 L1006.0 427.8 L1010.0 426.4 L1014.0 425.0 L1018.0 423.5 L1022.0 422.0 L1026.0 420.4 L1030.0 418.9 L1034.0 417.3 L1038.0 415.6 L1042.0 414.0 L1046.0 412.3 L1050.0 410.7 L1054.0 409.0 L1058.0 407.3 L1062.0 405.6 L1066.0 403.9 L1070.0 402.1 L1074.0 400.2 L1078.0 398.3 L1082.0 396.4 L1086.0 394.6 L1090.0 392.9 L1094.0 391.2 L1098.0 389.5 L1102.0 387.8 L1106.0 386.2 L1110.0 384.5 L1114.0 382.8 L1118.0 381.2 L1122.0 379.5 L1126.0 377.8 L1130.0 376.1 L1134.0 374.5 L1134.5 374.3" fill="none" stroke="#5a3a2a" stroke-width="1.0" opacity="0.85" stroke-dasharray="3.5 1.5"/><defs><linearGradient id="gunT" gradientUnits="userSpaceOnUse" x1="218" y1="0" x2="1134" y2="0"><stop offset="0.000" stop-color="#2a8a6a"/><stop offset="0.199" stop-color="#5a6a50"/><stop offset="0.559" stop-color="#6a6a58"/><stop offset="0.854" stop-color="#5a6a50"/><stop offset="1.000" stop-color="#2a8a6a"/></linearGradient></defs><path d="M218.0 328.6 L222.0 327.6 L226.0 326.5 L230.0 325.4 L234.0 324.3 L238.0 323.2 L242.0 322.1 L246.0 321.0 L250.0 319.9 L254.0 318.8 L258.0 317.7 L262.0 316.6 L266.0 315.5 L270.0 314.4 L274.0 313.3 L278.0 312.2 L282.0 311.0 L286.0 309.9 L290.0 308.7 L294.0 307.6 L298.0 306.4 L302.0 305.2 L306.0 304.0 L310.0 302.8 L314.0 301.7 L318.0 300.5 L322.0 299.3 L326.0 298.2 L330.0 297.0 L334.0 295.9 L338.0 294.8 L342.0 293.8 L346.0 292.7 L350.0 291.7 L354.0 290.8 L358.0 289.8 L362.0 288.9 L366.0 287.9 L370.0 287.0 L374.0 286.2 L378.0 285.3 L382.0 284.5 L386.0 283.7 L390.0 282.9 L394.0 282.1 L398.0 281.4 L402.0 280.6 L406.0 279.9 L410.0 279.2 L414.0 278.4 L418.0 277.7 L422.0 277.0 L426.0 276.3 L430.0 275.7 L434.0 275.0 L438.0 274.4 L442.0 273.7 L446.0 273.1 L450.0 272.4 L454.0 271.8 L458.0 271.2 L462.0 270.6 L466.0 270.1 L470.0 269.5 L474.0 269.0 L478.0 268.4 L482.0 267.9 L486.0 267.4 L490.0 266.9 L494.0 266.4 L498.0 265.9 L502.0 265.4 L506.0 265.0 L510.0 264.5 L514.0 264.1 L518.0 263.7 L522.0 263.3 L526.0 262.9 L530.0 262.5 L534.0 262.1 L538.0 261.8 L542.0 261.4 L546.0 261.1 L550.0 260.8 L554.0 260.5 L558.0 260.2 L562.0 259.9 L566.0 259.7 L570.0 259.4 L574.0 259.2 L578.0 259.0 L582.0 258.8 L586.0 258.5 L590.0 258.4 L594.0 258.2 L598.0 258.0 L602.0 257.8 L606.0 257.7 L610.0 257.5 L614.0 257.4 L618.0 257.2 L622.0 257.1 L626.0 257.0 L630.0 256.9 L634.0 256.8 L638.0 256.7 L642.0 256.6 L646.0 256.6 L650.0 256.5 L654.0 256.4 L658.0 256.4 L662.0 256.4 L666.0 256.3 L670.0 256.3 L674.0 256.3 L678.0 256.3 L682.0 256.3 L686.0 256.3 L690.0 256.3 L694.0 256.3 L698.0 256.3 L702.0 256.4 L706.0 256.4 L710.0 256.4 L714.0 256.5 L718.0 256.5 L722.0 256.6 L726.0 256.7 L730.0 256.8 L734.0 256.9 L738.0 257.0 L742.0 257.2 L746.0 257.3 L750.0 257.5 L754.0 257.7 L758.0 257.9 L762.0 258.1 L766.0 258.3 L770.0 258.5 L774.0 258.7 L778.0 259.0 L782.0 259.2 L786.0 259.5 L790.0 259.8 L794.0 260.1 L798.0 260.5 L802.0 260.8 L806.0 261.2 L810.0 261.6 L814.0 262.1 L818.0 262.5 L822.0 263.0 L826.0 263.6 L830.0 264.1 L834.0 264.8 L838.0 265.4 L842.0 266.1 L846.0 266.8 L850.0 267.5 L854.0 268.2 L858.0 268.9 L862.0 269.7 L866.0 270.4 L870.0 271.2 L874.0 272.0 L878.0 272.7 L882.0 273.5 L886.0 274.2 L890.0 275.0 L894.0 275.7 L898.0 276.4 L902.0 277.2 L906.0 277.9 L910.0 278.8 L914.0 279.7 L918.0 280.6 L922.0 281.6 L926.0 282.5 L930.0 283.4 L934.0 284.4 L938.0 285.3 L942.0 286.3 L946.0 287.2 L950.0 288.2 L954.0 289.1 L958.0 290.1 L962.0 291.1 L966.0 292.1 L970.0 293.2 L974.0 294.2 L978.0 295.3 L982.0 296.3 L986.0 297.5 L990.0 298.6 L994.0 299.8 L998.0 301.0 L1002.0 302.2 L1006.0 303.5 L1010.0 304.7 L1014.0 306.0 L1018.0 307.3 L1022.0 308.7 L1026.0 310.0 L1030.0 311.3 L1034.0 312.7 L1038.0 314.1 L1042.0 315.5 L1046.0 316.9 L1050.0 318.3 L1054.0 319.7 L1058.0 321.2 L1062.0 322.6 L1066.0 324.1 L1070.0 325.7 L1074.0 327.2 L1078.0 328.9 L1082.0 330.5 L1086.0 332.3 L1090.0 334.1 L1094.0 336.0 L1098.0 338.0 L1102.0 340.0 L1106.0 342.2 L1110.0 344.4 L1114.0 346.7 L1118.0 349.1 L1122.0 351.5 L1126.0 354.0 L1130.0 356.5 L1134.0 358.9 L1134.5 359.2" fill="none" stroke="url(#gunT)" stroke-width="1.1"/><path d="M218.0 406.3 L222.0 407.5 L226.0 408.8 L230.0 410.2 L234.0 411.6 L238.0 412.9 L242.0 414.3 L246.0 415.6 L250.0 417.0 L254.0 418.3 L258.0 419.6 L262.0 420.9 L266.0 422.1 L270.0 423.3 L274.0 424.5 L278.0 425.6 L282.0 426.7 L286.0 427.8 L290.0 428.8 L294.0 429.8 L298.0 430.8 L302.0 431.7 L306.0 432.6 L310.0 433.5 L314.0 434.4 L318.0 435.3 L322.0 436.2 L326.0 437.0 L330.0 437.9 L334.0 438.7 L338.0 439.6 L342.0 440.4 L346.0 441.3 L350.0 442.1 L354.0 442.9 L358.0 443.8 L362.0 444.6 L366.0 445.4 L370.0 446.2 L374.0 447.0 L378.0 447.8 L382.0 448.6 L386.0 449.4 L390.0 450.1 L394.0 450.9 L398.0 451.7 L402.0 452.4 L406.0 453.2 L410.0 453.9 L414.0 454.6 L418.0 455.3 L422.0 456.1 L426.0 456.8 L430.0 457.5 L434.0 458.2 L438.0 458.9 L442.0 459.6 L446.0 460.3 L450.0 461.0 L454.0 461.7 L458.0 462.3 L462.0 463.0 L466.0 463.6 L470.0 464.2 L474.0 464.9 L478.0 465.4 L482.0 466.0 L486.0 466.6 L490.0 467.1 L494.0 467.6 L498.0 468.1 L502.0 468.5 L506.0 469.0 L510.0 469.4 L514.0 469.8 L518.0 470.2 L522.0 470.6 L526.0 471.0 L530.0 471.4 L534.0 471.7 L538.0 472.0 L542.0 472.4 L546.0 472.7 L550.0 473.0 L554.0 473.3 L558.0 473.6 L562.0 474.0 L566.0 474.3 L570.0 474.6 L574.0 474.8 L578.0 475.1 L582.0 475.4 L586.0 475.7 L590.0 475.9 L594.0 476.2 L598.0 476.4 L602.0 476.6 L606.0 476.8 L610.0 477.1 L614.0 477.2 L618.0 477.4 L622.0 477.6 L626.0 477.8 L630.0 477.9 L634.0 478.0 L638.0 478.1 L642.0 478.2 L646.0 478.3 L650.0 478.4 L654.0 478.5 L658.0 478.5 L662.0 478.6 L666.0 478.6 L670.0 478.6 L674.0 478.6 L678.0 478.6 L682.0 478.6 L686.0 478.6 L690.0 478.6 L694.0 478.6 L698.0 478.5 L702.0 478.5 L706.0 478.4 L710.0 478.4 L714.0 478.3 L718.0 478.3 L722.0 478.2 L726.0 478.1 L730.0 478.0 L734.0 478.0 L738.0 477.8 L742.0 477.7 L746.0 477.6 L750.0 477.5 L754.0 477.3 L758.0 477.1 L762.0 476.9 L766.0 476.7 L770.0 476.5 L774.0 476.3 L778.0 476.0 L782.0 475.8 L786.0 475.5 L790.0 475.2 L794.0 475.0 L798.0 474.7 L802.0 474.3 L806.0 474.0 L810.0 473.7 L814.0 473.3 L818.0 472.9 L822.0 472.5 L826.0 472.0 L830.0 471.5 L834.0 471.0 L838.0 470.5 L842.0 469.9 L846.0 469.2 L850.0 468.6 L854.0 467.8 L858.0 467.1 L862.0 466.3 L866.0 465.5 L870.0 464.7 L874.0 463.9 L878.0 463.0 L882.0 462.2 L886.0 461.3 L890.0 460.4 L894.0 459.5 L898.0 458.6 L902.0 457.7 L906.0 456.9 L910.0 456.0 L914.0 455.2 L918.0 454.3 L922.0 453.4 L926.0 452.3 L930.0 451.3 L934.0 450.3 L938.0 449.2 L942.0 448.2 L946.0 447.1 L950.0 446.1 L954.0 445.0 L958.0 444.0 L962.0 442.9 L966.0 441.8 L970.0 440.7 L974.0 439.6 L978.0 438.6 L982.0 437.5 L986.0 436.5 L990.0 435.4 L994.0 434.3 L998.0 433.2 L1002.0 431.9 L1006.0 430.7 L1010.0 429.3 L1014.0 427.8 L1018.0 426.3 L1022.0 424.8 L1026.0 423.2 L1030.0 421.6 L1034.0 420.0 L1038.0 418.3 L1042.0 416.7 L1046.0 415.0 L1050.0 413.3 L1054.0 411.6 L1058.0 409.9 L1062.0 408.1 L1066.0 406.4 L1070.0 404.5 L1074.0 402.6 L1078.0 400.7 L1082.0 398.8 L1086.0 396.9 L1090.0 395.0 L1094.0 393.2 L1098.0 391.4 L1102.0 389.5 L1106.0 387.7 L1110.0 385.9 L1114.0 384.1 L1118.0 382.3 L1122.0 380.5 L1126.0 378.7 L1130.0 376.9 L1134.0 375.1 L1134.5 374.8" fill="none" stroke="#1a9a6a" stroke-width="1.4"/><path d="M224 333 L227 333 L238.5 358 L275 358 L275 377 L238.5 377 L228.5 401 L224 401 Z" fill="#0e4a3e"/><rect x="238" y="357.5" width="37.5" height="19.8" fill="#4a2410"/><rect x="218.5" y="327.5" width="6" height="79" fill="#22c090" stroke="#167a5c" stroke-width="0.8"/><defs><linearGradient id="keel" x1="0" y1="0" x2="0" y2="1"><stop offset="0" stop-color="#f08a40"/><stop offset="0.25" stop-color="#e06a1a"/><stop offset="0.8" stop-color="#c85010"/><stop offset="1" stop-color="#7a3008"/></linearGradient></defs><rect x="224.5" y="360.5" width="52" height="13" rx="1.5" fill="url(#keel)" stroke="#5a2a08" stroke-width="0.8"/><line x1="405.5" y1="357.5" x2="405.5" y2="377.3" stroke="#8a4010" stroke-width="0.8"/><path d="M1089.5 339.6 L1133.5 360.5 L1133.5 375 L1089.5 395 Z" fill="#f3d9b2" stroke="#6a5a40" stroke-width="0.8"/><rect x="1133.5" y="360.5" width="3" height="14.5" fill="#3a2a1a"/><path d="M1136.5 361 L1153 361 L1158.5 367.7 L1153 374.5 L1136.5 374.5 Z" fill="#f07a22" stroke="#a04a10" stroke-width="0.7"/><defs><linearGradient id="postg" x1="0" y1="0" x2="1" y2="0"><stop offset="0" stop-color="#8a6a30"/><stop offset="0.3" stop-color="#eedc9c"/><stop offset="0.65" stop-color="#d8bc74"/><stop offset="1" stop-color="#7a5a24"/></linearGradient></defs><rect x="336.6" y="317.8" width="5.7999999999999545" height="114.80000000000001" fill="url(#postg)" stroke="#4a3a18" stroke-width="0.7"/><path d="M337.0 317.8 L342.0 317.8 L342.0 322.8 L339.5 325.8 L337.0 322.8 Z" fill="#f4e8cc" stroke="#6a5a30" stroke-width="0.6"/><rect x="342.6" y="301.4" width="6.399999999999977" height="117.20000000000005" fill="url(#postg)" stroke="#4a3a18" stroke-width="0.7"/><path d="M343.0 418.6 L348.6 418.6 L348.6 413.6 L345.8 411.6 L343.0 413.6 Z" fill="#f4e8cc" stroke="#6a5a30" stroke-width="0.6"/><line x1="336.6" y1="367.2" x2="349" y2="367.2" stroke="#5a4a20" stroke-width="0.7"/><rect x="443.3" y="319" width="6.199999999999989" height="133.8" fill="url(#postg)" stroke="#4a3a18" stroke-width="0.7"/><path d="M443.7 319 L449.1 319 L449.1 330 L446.4 339 L443.7 330 Z" fill="#f4e8cc" stroke="#6a5a30" stroke-width="0.6"/><rect x="449.4" y="281.6" width="6.400000000000034" height="135.39999999999998" fill="url(#postg)" stroke="#4a3a18" stroke-width="0.7"/><path d="M449.79999999999995 417 L455.40000000000003 417 L455.40000000000003 406 L452.6 398 L449.79999999999995 406 Z" fill="#f4e8cc" stroke="#6a5a30" stroke-width="0.6"/><line x1="443.3" y1="367.2" x2="455.8" y2="367.2" stroke="#5a4a20" stroke-width="0.7"/><rect x="551.5" y="311" width="6.0" height="154.7" fill="url(#postg)" stroke="#4a3a18" stroke-width="0.7"/><path d="M551.9 311 L557.1 311 L557.1 322 L554.5 331 L551.9 322 Z" fill="#f4e8cc" stroke="#6a5a30" stroke-width="0.6"/><rect x="557.3" y="269.2" width="6.5" height="153.8" fill="url(#postg)" stroke="#4a3a18" stroke-width="0.7"/><path d="M557.6999999999999 423 L563.4 423 L563.4 412 L560.55 404 L557.6999999999999 412 Z" fill="#f4e8cc" stroke="#6a5a30" stroke-width="0.6"/><line x1="551.5" y1="367.2" x2="563.8" y2="367.2" stroke="#5a4a20" stroke-width="0.7"/><rect x="766.2" y="310" width="6.0" height="156.3" fill="url(#postg)" stroke="#4a3a18" stroke-width="0.7"/><path d="M766.6 310 L771.8000000000001 310 L771.8000000000001 321 L769.2 330 L766.6 321 Z" fill="#f4e8cc" stroke="#6a5a30" stroke-width="0.6"/><rect x="772.2" y="268" width="6.199999999999932" height="155.8" fill="url(#postg)" stroke="#4a3a18" stroke-width="0.7"/><path d="M772.6 423.8 L778.0 423.8 L778.0 412.8 L775.3 404.8 L772.6 412.8 Z" fill="#f4e8cc" stroke="#6a5a30" stroke-width="0.6"/><line x1="766.2" y1="367.2" x2="778.4" y2="367.2" stroke="#5a4a20" stroke-width="0.7"/><rect x="981.4" y="321.3" width="5.899999999999977" height="108.5" fill="url(#postg)" stroke="#4a3a18" stroke-width="0.7"/><path d="M981.8 321.3 L986.9 321.3 L986.9 326.3 L984.3499999999999 329.3 L981.8 326.3 Z" fill="#f4e8cc" stroke="#6a5a30" stroke-width="0.6"/><rect x="987.3" y="307.3" width="6.0" height="104.19999999999999" fill="url(#postg)" stroke="#4a3a18" stroke-width="0.7"/><path d="M987.6999999999999 411.5 L992.9 411.5 L992.9 406.5 L990.3 404.5 L987.6999999999999 406.5 Z" fill="#f4e8cc" stroke="#6a5a30" stroke-width="0.6"/><line x1="981.4" y1="367.2" x2="993.3" y2="367.2" stroke="#5a4a20" stroke-width="0.7"/><rect x="648.5" y="269.2" width="32.799999999999955" height="196.5" fill="#f3e0bc" stroke="#5a4a30" stroke-width="0.8"/><rect x="664.8" y="264.7" width="6.4" height="10" rx="3" fill="#3a2a1a"/><ellipse cx="668" cy="266.2" rx="2.2" ry="1.3" fill="#e8e0d0"/><rect x="658.8" y="460.2" width="6.4" height="10.5" rx="3" fill="#d8b878" stroke="#5a4520" stroke-width="0.7"/><ellipse cx="662" cy="468.7" rx="2.2" ry="1.5" fill="#f0e8e0"/><rect x="864" y="282" width="32" height="171.3" fill="#f3e0bc" stroke="#5a4a30" stroke-width="0.8"/><rect x="879.8" y="277.5" width="6.4" height="10" rx="3" fill="#3a2a1a"/><ellipse cx="883" cy="279" rx="2.2" ry="1.3" fill="#e8e0d0"/><rect x="873.8" y="447.8" width="6.4" height="10.5" rx="3" fill="#d8b878" stroke="#5a4520" stroke-width="0.7"/><ellipse cx="877" cy="456.3" rx="2.2" ry="1.5" fill="#f0e8e0"/><line x1="218" y1="620" x2="218" y2="606" stroke="#f08080" stroke-width="2.2"/><path d="M215.2 607 L218 601 L220.8 607Z" fill="#c01818"/><line x1="218" y1="621" x2="233" y2="621" stroke="#0a0a9a" stroke-width="2.4"/><path d="M232 618 L238.5 621 L232 624Z" fill="#0a0a9a"/><circle cx="218" cy="621" r="1.8" fill="#1a5a2a"/><text x="216.5" y="597" font-size="5.5" fill="#e07070" font-family="Liberation Sans">x</text><text x="242" y="622" font-size="6.5" fill="#444" font-family="Liberation Sans">z</text></svg>
</body></html>
